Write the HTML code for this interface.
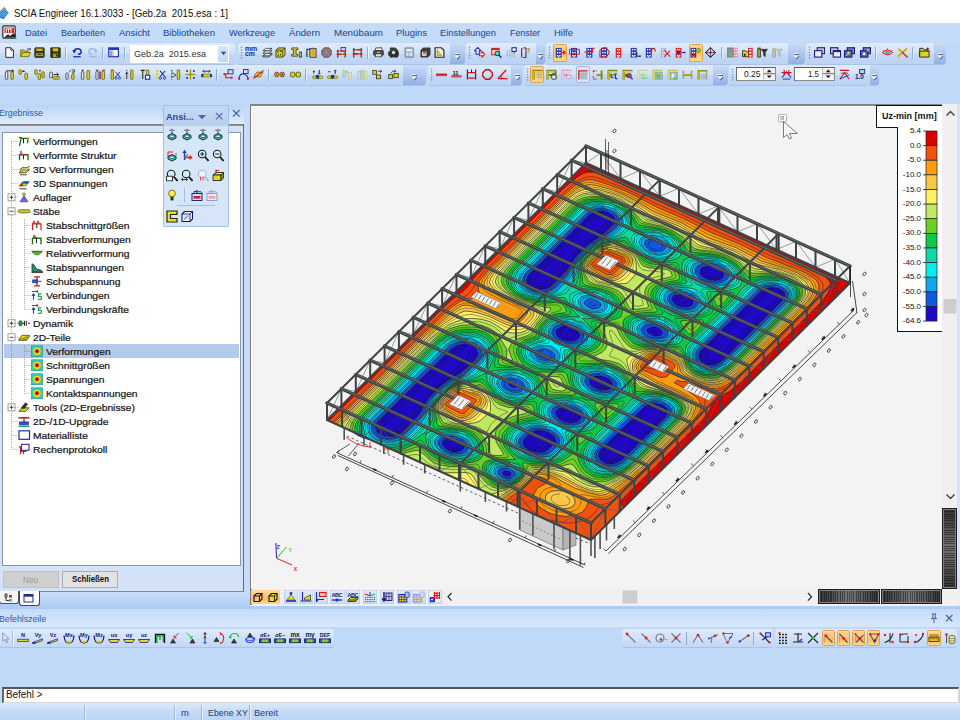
<!DOCTYPE html><html><head><meta charset="utf-8"><title>SCIA Engineer</title><style>
*{margin:0;padding:0;box-sizing:border-box}
html,body{width:960px;height:720px;overflow:hidden;background:#c1d9f8;font-family:"Liberation Sans",sans-serif}
#r{position:relative;width:960px;height:720px;overflow:hidden}
#r div,#r span,#r svg{position:absolute}
.t{white-space:nowrap;line-height:1;transform-origin:0 50%}
</style></head><body><div id="r">
<div style="left:0px;top:0px;width:960px;height:23px;background:#fff"></div>
<svg style="left:-1px;top:5px" width="11" height="15" viewBox="0 0 11 15"><path d="M0.5 6.5L5.5 1.8L7 4L2 8.5z" fill="#8d8d95"/><path d="M0 9L6.5 4L9.6 8L4.5 13.8L0.5 12z" fill="#2486e2"/><path d="M1 9.6L6.3 5.4M1.6 11L7.4 6.6M2.6 12.2L8.4 7.8" stroke="#7cc0f6" stroke-width="0.7"/><path d="M0.5 12L4.5 13.8L5.8 12.4" fill="none" stroke="#1560b8" stroke-width="0.8"/></svg>
<span class="t" style="left:14px;top:8.03px;font-size:10.6px;color:#111;transform:scaleX(0.9147);">SCIA Engineer 16.1.3033 - [Geb.2a&nbsp; 2015.esa : 1]</span>
<div style="left:0px;top:23px;width:960px;height:19px;background:#c4dbf9"></div>
<svg style="left:1.5px;top:25px" width="15" height="15" viewBox="0 0 15 15"><rect x="0.8" y="0.8" width="12.4" height="12.4" rx="1.5" fill="#fff" stroke="#2a2a2a" stroke-width="1.2"/><path d="M2.5 2.5h9.5v5.5h-9.5z" fill="#e01818"/><path d="M4.2 3.8v4M6.6 3.8v4M9 3.8v4M3.5 3.8h7" stroke="#fff" stroke-width="0.9"/><path d="M2 12.5l4-3.2 2 1.6 3.5-2.6 1.7 1.2v3z" fill="#222"/><circle cx="13.6" cy="13.2" r="0.9" fill="#18a058"/></svg>
<span class="t" style="left:25px;top:28.00px;font-size:9.8px;color:#1a4488;transform:scaleX(0.9616);">Datei</span>
<span class="t" style="left:61px;top:28.00px;font-size:9.8px;color:#1a4488;transform:scaleX(0.9282);">Bearbeiten</span>
<span class="t" style="left:119px;top:28.00px;font-size:9.8px;color:#1a4488;transform:scaleX(0.9646);">Ansicht</span>
<span class="t" style="left:163px;top:28.00px;font-size:9.8px;color:#1a4488;transform:scaleX(0.9739);">Bibliotheken</span>
<span class="t" style="left:229px;top:28.00px;font-size:9.8px;color:#1a4488;transform:scaleX(0.9314);">Werkzeuge</span>
<span class="t" style="left:289px;top:28.00px;font-size:9.8px;color:#1a4488;transform:scaleX(0.9809);">Ändern</span>
<span class="t" style="left:334px;top:28.00px;font-size:9.8px;color:#1a4488;transform:scaleX(0.9994);">Menübaum</span>
<span class="t" style="left:396px;top:28.00px;font-size:9.8px;color:#1a4488;transform:scaleX(0.9644);">Plugins</span>
<span class="t" style="left:440px;top:28.00px;font-size:9.8px;color:#1a4488;transform:scaleX(0.9516);">Einstellungen</span>
<span class="t" style="left:510px;top:28.00px;font-size:9.8px;color:#1a4488;transform:scaleX(0.9030);">Fenster</span>
<span class="t" style="left:554px;top:28.00px;font-size:9.8px;color:#1a4488;transform:scaleX(0.9691);">Hilfe</span>
<div style="left:0px;top:42px;width:960px;height:43px;background:#c1d9f8"></div>
<div style="left:-3px;top:43px;width:238px;height:20.5px;background:linear-gradient(#e1ecfc,#d2e2f9 45%,#c3d8f6 55%,#bdd3f4);border-radius:2.5px 3px 3px 2.5px;box-shadow:0 1px 0 #a9c3ea"></div>
<div style="left:237.5px;top:43px;width:227px;height:20.5px;background:linear-gradient(#e1ecfc,#d2e2f9 45%,#c3d8f6 55%,#bdd3f4);border-radius:2.5px 3px 3px 2.5px;box-shadow:0 1px 0 #a9c3ea"></div>
<div style="left:449.5px;top:43px;width:15px;height:20.5px;background:linear-gradient(#c9dbf6,#b0c8ee 50%,#90b0e3);border-radius:0 3px 3px 0"></div>
<svg style="left:454px;top:53px" width="7" height="7.5" viewBox="0 0 7 7.5"><path d="M1.2 1.3h4.8" stroke="#27406f" stroke-width="1"/><path d="M0.8 3.2h5.6L3.6 6.4z" fill="#27406f"/><path d="M0.6 0.6h4.8" stroke="#fff" stroke-width="0.9"/><path d="M0.2 2.5h5.6L3 5.7z" fill="#fff"/></svg>
<svg style="left:239.5px;top:46px" width="3" height="14.5" viewBox="0 0 3 14.5"><path d="M1.5 0.5V14" stroke="#6f8fcf" stroke-width="1.3" stroke-dasharray="1.2 1.5"/></svg>
<div style="left:466px;top:43px;width:78.5px;height:20.5px;background:linear-gradient(#e1ecfc,#d2e2f9 45%,#c3d8f6 55%,#bdd3f4);border-radius:2.5px 3px 3px 2.5px;box-shadow:0 1px 0 #a9c3ea"></div>
<div style="left:535.5px;top:43px;width:9px;height:20.5px;background:linear-gradient(#c9dbf6,#b0c8ee 50%,#90b0e3);border-radius:0 3px 3px 0"></div>
<svg style="left:537px;top:53px" width="7" height="7.5" viewBox="0 0 7 7.5"><path d="M1.2 1.3h4.8" stroke="#27406f" stroke-width="1"/><path d="M0.8 3.2h5.6L3.6 6.4z" fill="#27406f"/><path d="M0.6 0.6h4.8" stroke="#fff" stroke-width="0.9"/><path d="M0.2 2.5h5.6L3 5.7z" fill="#fff"/></svg>
<svg style="left:468px;top:46px" width="3" height="14.5" viewBox="0 0 3 14.5"><path d="M1.5 0.5V14" stroke="#6f8fcf" stroke-width="1.3" stroke-dasharray="1.2 1.5"/></svg>
<div style="left:546.3px;top:43px;width:258.2px;height:20.5px;background:linear-gradient(#e1ecfc,#d2e2f9 45%,#c3d8f6 55%,#bdd3f4);border-radius:2.5px 3px 3px 2.5px;box-shadow:0 1px 0 #a9c3ea"></div>
<div style="left:788px;top:43px;width:16.5px;height:20.5px;background:linear-gradient(#c9dbf6,#b0c8ee 50%,#90b0e3);border-radius:0 3px 3px 0"></div>
<svg style="left:793.25px;top:53px" width="7" height="7.5" viewBox="0 0 7 7.5"><path d="M1.2 1.3h4.8" stroke="#27406f" stroke-width="1"/><path d="M0.8 3.2h5.6L3.6 6.4z" fill="#27406f"/><path d="M0.6 0.6h4.8" stroke="#fff" stroke-width="0.9"/><path d="M0.2 2.5h5.6L3 5.7z" fill="#fff"/></svg>
<svg style="left:548.3px;top:46px" width="3" height="14.5" viewBox="0 0 3 14.5"><path d="M1.5 0.5V14" stroke="#6f8fcf" stroke-width="1.3" stroke-dasharray="1.2 1.5"/></svg>
<div style="left:806px;top:43px;width:140px;height:20.5px;background:linear-gradient(#e1ecfc,#d2e2f9 45%,#c3d8f6 55%,#bdd3f4);border-radius:2.5px 3px 3px 2.5px;box-shadow:0 1px 0 #a9c3ea"></div>
<div style="left:934px;top:43px;width:12px;height:20.5px;background:linear-gradient(#c9dbf6,#b0c8ee 50%,#90b0e3);border-radius:0 3px 3px 0"></div>
<svg style="left:937px;top:53px" width="7" height="7.5" viewBox="0 0 7 7.5"><path d="M1.2 1.3h4.8" stroke="#27406f" stroke-width="1"/><path d="M0.8 3.2h5.6L3.6 6.4z" fill="#27406f"/><path d="M0.6 0.6h4.8" stroke="#fff" stroke-width="0.9"/><path d="M0.2 2.5h5.6L3 5.7z" fill="#fff"/></svg>
<svg style="left:808px;top:46px" width="3" height="14.5" viewBox="0 0 3 14.5"><path d="M1.5 0.5V14" stroke="#6f8fcf" stroke-width="1.3" stroke-dasharray="1.2 1.5"/></svg>
<div style="left:-3px;top:64.5px;width:429px;height:20px;background:linear-gradient(#e1ecfc,#d2e2f9 45%,#c3d8f6 55%,#bdd3f4);border-radius:2.5px 3px 3px 2.5px;box-shadow:0 1px 0 #a9c3ea"></div>
<div style="left:402.5px;top:64.5px;width:23.5px;height:20px;background:linear-gradient(#c9dbf6,#b0c8ee 50%,#90b0e3);border-radius:0 3px 3px 0"></div>
<svg style="left:411.25px;top:74px" width="7" height="7.5" viewBox="0 0 7 7.5"><path d="M1.2 1.3h4.8" stroke="#27406f" stroke-width="1"/><path d="M0.8 3.2h5.6L3.6 6.4z" fill="#27406f"/><path d="M0.6 0.6h4.8" stroke="#fff" stroke-width="0.9"/><path d="M0.2 2.5h5.6L3 5.7z" fill="#fff"/></svg>
<div style="left:427.5px;top:64.5px;width:94.5px;height:20px;background:linear-gradient(#e1ecfc,#d2e2f9 45%,#c3d8f6 55%,#bdd3f4);border-radius:2.5px 3px 3px 2.5px;box-shadow:0 1px 0 #a9c3ea"></div>
<div style="left:511px;top:64.5px;width:11px;height:20px;background:linear-gradient(#c9dbf6,#b0c8ee 50%,#90b0e3);border-radius:0 3px 3px 0"></div>
<svg style="left:513.5px;top:74px" width="7" height="7.5" viewBox="0 0 7 7.5"><path d="M1.2 1.3h4.8" stroke="#27406f" stroke-width="1"/><path d="M0.8 3.2h5.6L3.6 6.4z" fill="#27406f"/><path d="M0.6 0.6h4.8" stroke="#fff" stroke-width="0.9"/><path d="M0.2 2.5h5.6L3 5.7z" fill="#fff"/></svg>
<svg style="left:429.5px;top:67.5px" width="3" height="14" viewBox="0 0 3 14"><path d="M1.5 0.5V13.5" stroke="#6f8fcf" stroke-width="1.3" stroke-dasharray="1.2 1.5"/></svg>
<div style="left:523.5px;top:64.5px;width:204px;height:20px;background:linear-gradient(#e1ecfc,#d2e2f9 45%,#c3d8f6 55%,#bdd3f4);border-radius:2.5px 3px 3px 2.5px;box-shadow:0 1px 0 #a9c3ea"></div>
<div style="left:713px;top:64.5px;width:14.5px;height:20px;background:linear-gradient(#c9dbf6,#b0c8ee 50%,#90b0e3);border-radius:0 3px 3px 0"></div>
<svg style="left:717.25px;top:74px" width="7" height="7.5" viewBox="0 0 7 7.5"><path d="M1.2 1.3h4.8" stroke="#27406f" stroke-width="1"/><path d="M0.8 3.2h5.6L3.6 6.4z" fill="#27406f"/><path d="M0.6 0.6h4.8" stroke="#fff" stroke-width="0.9"/><path d="M0.2 2.5h5.6L3 5.7z" fill="#fff"/></svg>
<svg style="left:525.5px;top:67.5px" width="3" height="14" viewBox="0 0 3 14"><path d="M1.5 0.5V13.5" stroke="#6f8fcf" stroke-width="1.3" stroke-dasharray="1.2 1.5"/></svg>
<div style="left:729.4px;top:64.5px;width:149.4px;height:20px;background:linear-gradient(#e1ecfc,#d2e2f9 45%,#c3d8f6 55%,#bdd3f4);border-radius:2.5px 3px 3px 2.5px;box-shadow:0 1px 0 #a9c3ea"></div>
<div style="left:870px;top:64.5px;width:8.8px;height:20px;background:linear-gradient(#c9dbf6,#b0c8ee 50%,#90b0e3);border-radius:0 3px 3px 0"></div>
<svg style="left:871.4px;top:74px" width="7" height="7.5" viewBox="0 0 7 7.5"><path d="M1.2 1.3h4.8" stroke="#27406f" stroke-width="1"/><path d="M0.8 3.2h5.6L3.6 6.4z" fill="#27406f"/><path d="M0.6 0.6h4.8" stroke="#fff" stroke-width="0.9"/><path d="M0.2 2.5h5.6L3 5.7z" fill="#fff"/></svg>
<svg style="left:731.4px;top:67.5px" width="3" height="14" viewBox="0 0 3 14"><path d="M1.5 0.5V13.5" stroke="#6f8fcf" stroke-width="1.3" stroke-dasharray="1.2 1.5"/></svg>
<svg style="left:4.2px;top:46.8px" width="11" height="11" viewBox="0 0 12 12"><path d="M2 0.8H7.5L10.3 3.6V11.3H2z" fill="#fff" stroke="#1a1a1a" stroke-width="1"/><path d="M7.5 0.8V3.6H10.3" fill="none" stroke="#1a1a1a" stroke-width="0.8" /></svg>
<svg style="left:19.7px;top:46.8px" width="11" height="11" viewBox="0 0 12 12"><path d="M0.8 10.5V3.2H4L5 4.4H9V6" fill="#c8c010" stroke="#5a5600" stroke-width="0.8"/><path d="M0.8 10.5L3 6H11.6L9.4 10.5z" fill="#dcd41c" stroke="#5a5600" stroke-width="0.8"/><path d="M7.5 2.5Q9.5 1 11 2.8M11.2 1v2h-2" fill="none" stroke="#262626" stroke-width="0.8" /></svg>
<svg style="left:34.2px;top:46.8px" width="11" height="11" viewBox="0 0 12 12"><rect x="0.8" y="0.8" width="10.4" height="10.6" rx="1.2" fill="#4a4600" stroke="#262626" stroke-width="0.8"/><rect x="2.6" y="1.8" width="6.8" height="2.4" rx="0" fill="#c8c018"/><rect x="2.4" y="6.8" width="7.2" height="2.8" rx="0" fill="#c8c018"/><rect x="3.8" y="7.5" width="4.4" height="1.2" rx="0" fill="#2a2800"/><path d="M1 5.5h10" fill="none" stroke="#262626" stroke-width="1.1" /></svg>
<svg style="left:49.5px;top:46.8px" width="11" height="11" viewBox="0 0 12 12"><rect x="0.8" y="0.8" width="10.4" height="10.6" rx="0.6" fill="#343200" stroke="#262626" stroke-width="0.8"/><rect x="3" y="1.4" width="6" height="3.4" rx="0" fill="#c8c018"/><rect x="3.2" y="7.2" width="5.6" height="3.8" rx="0" fill="#a8a010"/><rect x="6.6" y="7.9" width="1.6" height="2.4" rx="0" fill="#2a2800"/></svg>
<svg style="left:71.8px;top:46.8px" width="11" height="11" viewBox="0 0 12 12"><path d="M2 5.5Q2.5 1.8 6 1.8Q10 1.8 10 5.2Q10 8 6.5 8" fill="none" stroke="#1c2cb0" stroke-width="1.6" /><path d="M0.3 3.2L2.2 7L4.8 3.8z" fill="#1c2cb0"/><path d="M1.5 10.6H9.5" fill="none" stroke="#1c2cb0" stroke-width="1.4" /></svg>
<svg style="left:86.8px;top:46.8px" width="11" height="11" viewBox="0 0 12 12"><path d="M10 5.5Q9.5 1.8 6 1.8Q2 1.8 2 5.2Q2 8 5.5 8" fill="none" stroke="#9fb8e4" stroke-width="1.6" /><path d="M11.7 3.2L9.8 7L7.2 3.8z" fill="#9fb8e4"/><path d="M2.5 10.6H10.5" fill="none" stroke="#9fb8e4" stroke-width="1.4" /></svg>
<svg style="left:108.4px;top:46.8px" width="11" height="11" viewBox="0 0 12 12"><rect x="0.8" y="1" width="10.6" height="9.6" rx="0" fill="#f4f4f4" stroke="#2030c0" stroke-width="1.3"/><rect x="0.8" y="1" width="10.6" height="2.2" rx="0" fill="#2030c0"/><rect x="2" y="4" width="2.6" height="6" rx="0" fill="#9aa0a8"/><path d="M5.5 3.5V10.4" fill="none" stroke="#8088a0" stroke-width="0.6" /></svg>
<div style="left:64.8px;top:46.5px;width:1px;height:12px;background:#8fabda"></div>
<div style="left:65.8px;top:46.5px;width:1px;height:12px;background:#eaf2fd"></div>
<div style="left:102px;top:46.5px;width:1px;height:12px;background:#8fabda"></div>
<div style="left:103px;top:46.5px;width:1px;height:12px;background:#eaf2fd"></div>
<div style="left:123.5px;top:46.5px;width:1px;height:12px;background:#8fabda"></div>
<div style="left:124.5px;top:46.5px;width:1px;height:12px;background:#eaf2fd"></div>
<div style="left:130px;top:44.5px;width:98.5px;height:18.5px;background:#fff"></div>
<div style="left:217.5px;top:45.5px;width:10.5px;height:16.5px;background:linear-gradient(#d4e4fa,#c2d8f6)"></div>
<svg style="left:220px;top:51px" width="7" height="5" viewBox="0 0 7 5"><path d="M0.8 0.8h5.4L3.5 4z" fill="#2a4a88"/></svg>
<span class="t" style="left:134px;top:49.63px;font-size:9.3px;color:#333;transform:scaleX(0.9737);">Geb.2a&nbsp; 2015.esa</span>
<span class="t" style="left:245px;top:45.6px;font-size:6.6px;font-weight:bold;color:#1a2a80;line-height:5.3px;letter-spacing:-0.2px;transform:scaleX(1.05)">mm<br>cm</span>
<svg style="left:261.5px;top:46.8px" width="11" height="11" viewBox="0 0 12 12"><path d="M1 4L4.5 1.5H11L7.5 4z" fill="#fff" stroke="#262626" stroke-width="0.8"/><path d="M1 6.7L4.5 4.2H11L7.5 6.7z" fill="#fff" stroke="#262626" stroke-width="0.8"/><path d="M1 9.5L4.5 7H11L7.5 9.5z" fill="#fff" stroke="#262626" stroke-width="0.8"/><path d="M1 9.5v1.3H7.5L11 8.2V7" fill="none" stroke="#262626" stroke-width="0.8" /></svg>
<svg style="left:275.3px;top:46.8px" width="11" height="11" viewBox="0 0 12 12"><path d="M1 3.5L3.5 1H11V8.5L8.5 11H1z" fill="#dcd41c" stroke="#262626" stroke-width="0.9"/><path d="M1 3.5H8.5V11M8.5 3.5L11 1" fill="none" stroke="#262626" stroke-width="0.8" /><circle cx="3" cy="5.5" r="0.8" fill="#262626"/><circle cx="6" cy="8.5" r="0.8" fill="#262626"/><circle cx="6.5" cy="5" r="0.8" fill="#262626"/><circle cx="3.5" cy="9" r="0.7" fill="#262626"/></svg>
<svg style="left:291.3px;top:46.8px" width="11" height="11" viewBox="0 0 12 12"><path d="M0.8 1H7.5V3H5.5V8H7.5V10H0.8V8H2.8V3H0.8z" fill="#dcd41c" stroke="#262626" stroke-width="0.8"/><path d="M8.5 5.5h3v5.5h-3" fill="none" stroke="#262626" stroke-width="0.9" /><rect x="9.5" y="6.5" width="2.2" height="3.5" rx="0" fill="#dcd41c" stroke="#262626" stroke-width="0.6"/></svg>
<svg style="left:306.3px;top:46.8px" width="11" height="11" viewBox="0 0 12 12"><path d="M1 11V2.5H4.5" fill="none" stroke="#262626" stroke-width="1.2" /><rect x="4.2" y="1.8" width="6.8" height="9.4" rx="0" fill="#dcd41c" stroke="#2a2a80" stroke-width="1"/><rect x="5.8" y="3.2" width="3.6" height="6.4" rx="0" fill="#f0a030"/><rect x="6" y="0.8" width="3" height="1.6" rx="0" fill="#606060"/></svg>
<svg style="left:320.5px;top:46.8px" width="11" height="11" viewBox="0 0 12 12"><path d="M3.5 0.8H8.5L11.2 3.5V8.5L8.5 11.2H3.5L0.8 8.5V3.5z" fill="#787878" stroke="#505050" stroke-width="0.8"/><path d="M2.5 2.5L9.5 9.5M9.5 2.5L2.5 9.5" fill="none" stroke="#e07090" stroke-width="1" /><path d="M6 1V11M1 6H11" fill="none" stroke="#909090" stroke-width="0.6" /></svg>
<svg style="left:336.3px;top:46.8px" width="11" height="11" viewBox="0 0 12 12"><rect x="5.5" y="0.5" width="5" height="4" rx="0" fill="#d0d0f8" stroke="#1c2cb0" stroke-width="0.9"/><path d="M2 11.5V3M10 11.5V5" fill="none" stroke="#262626" stroke-width="1.1" /><path d="M0.8 4.5H11.2M0.8 8H11.2" fill="none" stroke="#d81818" stroke-width="1.6" /><circle cx="4" cy="4.5" r="0.8" fill="#dcd41c"/><circle cx="7" cy="8" r="0.8" fill="#dcd41c"/></svg>
<svg style="left:351.8px;top:46.8px" width="11" height="11" viewBox="0 0 12 12"><path d="M2 11.5V1M10 11.5V1" fill="none" stroke="#262626" stroke-width="1.1" /><path d="M0.8 3H11.2M0.8 7.5H11.2" fill="none" stroke="#d81818" stroke-width="1.8" /><path d="M3.5 3h1.5M7 7.5h1.5" fill="none" stroke="#dcd41c" stroke-width="1.2" /></svg>
<svg style="left:373.2px;top:46.8px" width="11" height="11" viewBox="0 0 12 12"><path d="M3 1L9.5 0.8L10.5 4H2z" fill="#e8e8e8" stroke="#262626" stroke-width="0.8"/><rect x="0.6" y="4" width="10.8" height="5" rx="1" fill="#505050" stroke="#262626" stroke-width="0.8"/><rect x="2.5" y="7.5" width="7" height="3.2" rx="0" fill="#e0e0e0" stroke="#262626" stroke-width="0.7"/><rect x="4.5" y="5.2" width="3" height="1.2" rx="0" fill="#dcd41c"/><circle cx="9.8" cy="5.5" r="0.7" fill="#3060e0"/></svg>
<svg style="left:387.9px;top:46.8px" width="11" height="11" viewBox="0 0 12 12"><path d="M2.5 1H8L10.5 3.5V11H2.5z" fill="#404040" stroke="#262626" stroke-width="0.8"/><rect x="0.6" y="5" width="10.8" height="4.5" rx="0.8" fill="#303030" stroke="#262626" stroke-width="0.6"/><circle cx="6" cy="6" r="2.4" fill="#d8d8d8" stroke="#111" stroke-width="0.8"/><path d="M3 9.5v2M9 9.5v2" fill="none" stroke="#262626" stroke-width="1.4" /></svg>
<svg style="left:403.9px;top:46.8px" width="11" height="11" viewBox="0 0 12 12"><rect x="1" y="0.8" width="9.5" height="10.6" rx="0.8" fill="#98a8bc" stroke="#7888a0" stroke-width="0.8"/><rect x="2.4" y="2.2" width="6.8" height="2.6" rx="0" fill="#e8eef4"/><rect x="2.4" y="6" width="2.6" height="3.8" rx="0" fill="#dde4ec"/><rect x="6" y="6" width="3.2" height="3.8" rx="0" fill="#dde4ec"/></svg>
<svg style="left:419.5px;top:46.8px" width="11" height="11" viewBox="0 0 12 12"><path d="M1 3.5L3.5 1H11V8.5L8.5 11H1z" fill="#484848" stroke="#262626" stroke-width="0.8"/><rect x="2" y="4.5" width="5.5" height="5.5" rx="0" fill="#f0f0f0" stroke="#262626" stroke-width="0.6"/><rect x="3.5" y="5" width="2.6" height="2.2" rx="0" fill="#d81818"/><rect x="3" y="8" width="3.5" height="1.4" rx="0" fill="#dcd41c"/><path d="M8.5 11V3.5H1M8.5 3.5L11 1" fill="none" stroke="#262626" stroke-width="0.7" /></svg>
<svg style="left:433.5px;top:46.8px" width="11" height="11" viewBox="0 0 12 12"><path d="M1.2 0.8H8L10.8 3.6V11.2H1.2z" fill="#f0f0e8" stroke="#262626" stroke-width="1.3"/><path d="M3.5 3L8.5 9.5H3.5z" fill="#dcd41c" stroke="#807800" stroke-width="0.6"/></svg>
<svg style="left:474.2px;top:46.8px" width="11" height="11" viewBox="0 0 12 12"><path d="M4 0.5L7.5 4H5.8V8H2.2V4H0.5z" fill="#e8e8ff" stroke="#1c2cb0" stroke-width="1.1"/><path d="M6 6.5H9V5L11.8 8L9 11V9.5H6z" fill="#fff" stroke="#d81818" stroke-width="1.1"/></svg>
<svg style="left:490.5px;top:46.8px" width="11" height="11" viewBox="0 0 12 12"><rect x="0.8" y="1.5" width="8" height="7" rx="0" fill="#f8e8c0" stroke="#d81818" stroke-width="1.1"/><rect x="0.8" y="1.5" width="8" height="1.8" rx="0" fill="#d81818"/><circle cx="6.8" cy="7" r="2.5" fill="#40d8e8" stroke="#111" stroke-width="0.9"/><path d="M8.6 8.8L11.3 11.5" fill="none" stroke="#262626" stroke-width="1.6" /></svg>
<svg style="left:505.5px;top:46.8px" width="11" height="11" viewBox="0 0 12 12"><path d="M1.5 3V11.5M4 3V11.5M6.5 5V11.5M9 8V11.5" fill="none" stroke="#808890" stroke-width="0.9" stroke-dasharray="1 1"/><rect x="6.5" y="0.8" width="4.6" height="4" rx="0" fill="#fff" stroke="#1c2cb0" stroke-width="1.2"/><path d="M8.8 4.8V7" fill="none" stroke="#262626" stroke-width="0.9" /></svg>
<svg style="left:520.1px;top:46.8px" width="11" height="11" viewBox="0 0 12 12"><path d="M1.8 1V11.5" fill="none" stroke="#d81818" stroke-width="1.4" /><path d="M3.5 1H6.5V11.5H3.5" fill="none" stroke="#262626" stroke-width="1" /><text x="7" y="6.5" font-size="7" font-weight="bold" fill="#a07800" font-family="Liberation Sans,sans-serif">?</text></svg>
<div style="left:367px;top:46.5px;width:1px;height:12px;background:#8fabda"></div>
<div style="left:368px;top:46.5px;width:1px;height:12px;background:#eaf2fd"></div>
<div style="left:552.5px;top:44px;width:14.5px;height:17.5px;background:linear-gradient(#ffd898,#ffc266 55%,#ffd88a);border:1px solid #dfa248;border-radius:1.5px"></div>
<div style="left:688.5px;top:44px;width:14px;height:17.5px;background:linear-gradient(#ffd898,#ffc266 55%,#ffd88a);border:1px solid #dfa248;border-radius:1.5px"></div>
<svg style="left:554.5px;top:46.8px" width="11" height="11" viewBox="0 0 12 12"><rect x="0.8" y="1" width="6.5" height="10.5" rx="0" fill="#1c2cb0"/><rect x="2" y="2" width="1.6" height="1.7" rx="0" fill="#fff"/><rect x="4.5" y="2" width="1.6" height="1.7" rx="0" fill="#fff"/><rect x="2" y="5.3" width="1.6" height="1.7" rx="0" fill="#fff"/><rect x="4.5" y="5.3" width="1.6" height="1.7" rx="0" fill="#fff"/><rect x="2" y="8.6" width="1.6" height="1.7" rx="0" fill="#fff"/><rect x="4.5" y="8.6" width="1.6" height="1.7" rx="0" fill="#fff"/><rect x="3.45" y="9.5" width="1.2" height="2" rx="0" fill="#cfe0f8"/><path d="M7 6H10.5M8.8 3.8L11.2 6L8.8 8.2" fill="none" stroke="#d81818" stroke-width="1.2" /></svg>
<svg style="left:568.5px;top:46.8px" width="11" height="11" viewBox="0 0 12 12"><rect x="2.2" y="1" width="6.5" height="10.5" rx="0" fill="#1c2cb0"/><rect x="3.4" y="2" width="1.6" height="1.7" rx="0" fill="#fff"/><rect x="5.9" y="2" width="1.6" height="1.7" rx="0" fill="#fff"/><rect x="3.4" y="5.3" width="1.6" height="1.7" rx="0" fill="#fff"/><rect x="5.9" y="5.3" width="1.6" height="1.7" rx="0" fill="#fff"/><rect x="3.4" y="8.6" width="1.6" height="1.7" rx="0" fill="#fff"/><rect x="5.9" y="8.6" width="1.6" height="1.7" rx="0" fill="#fff"/><rect x="4.85" y="9.5" width="1.2" height="2" rx="0" fill="#cfe0f8"/><rect x="0.6" y="2.5" width="10.8" height="5.5" rx="1" fill="none" stroke="#d81818" stroke-width="1.1"/></svg>
<svg style="left:584.3px;top:46.8px" width="11" height="11" viewBox="0 0 12 12"><rect x="2.6" y="1" width="6.5" height="10.5" rx="0" fill="#1c2cb0"/><rect x="3.8" y="2" width="1.6" height="1.7" rx="0" fill="#fff"/><rect x="6.3" y="2" width="1.6" height="1.7" rx="0" fill="#fff"/><rect x="3.8" y="5.3" width="1.6" height="1.7" rx="0" fill="#fff"/><rect x="6.3" y="5.3" width="1.6" height="1.7" rx="0" fill="#fff"/><rect x="3.8" y="8.6" width="1.6" height="1.7" rx="0" fill="#fff"/><rect x="6.3" y="8.6" width="1.6" height="1.7" rx="0" fill="#fff"/><rect x="5.25" y="9.5" width="1.2" height="2" rx="0" fill="#cfe0f8"/><path d="M0.3 5.5H9.5V1.5H11.5" fill="none" stroke="#d81818" stroke-width="1.1" /></svg>
<svg style="left:598.5px;top:46.8px" width="11" height="11" viewBox="0 0 12 12"><rect x="2.2" y="1" width="6.5" height="10.5" rx="0" fill="#1c2cb0"/><rect x="3.4" y="2" width="1.6" height="1.7" rx="0" fill="#fff"/><rect x="5.9" y="2" width="1.6" height="1.7" rx="0" fill="#fff"/><rect x="3.4" y="5.3" width="1.6" height="1.7" rx="0" fill="#fff"/><rect x="5.9" y="5.3" width="1.6" height="1.7" rx="0" fill="#fff"/><rect x="3.4" y="8.6" width="1.6" height="1.7" rx="0" fill="#fff"/><rect x="5.9" y="8.6" width="1.6" height="1.7" rx="0" fill="#fff"/><rect x="4.85" y="9.5" width="1.2" height="2" rx="0" fill="#cfe0f8"/><path d="M1 11V3.5L4.5 0.8H8L11.5 6L8 11z" fill="none" stroke="#d81818" stroke-width="1.1" /></svg>
<svg style="left:612.5px;top:46.8px" width="11" height="11" viewBox="0 0 12 12"><rect x="3" y="1" width="6" height="10.5" rx="0" fill="#d81818"/><rect x="4.2" y="2" width="1.6" height="1.7" rx="0" fill="#fff"/><rect x="6.2" y="2" width="1.6" height="1.7" rx="0" fill="#fff"/><rect x="4.2" y="5.3" width="1.6" height="1.7" rx="0" fill="#fff"/><rect x="6.2" y="5.3" width="1.6" height="1.7" rx="0" fill="#fff"/><rect x="4.2" y="8.6" width="1.6" height="1.7" rx="0" fill="#fff"/><rect x="6.2" y="8.6" width="1.6" height="1.7" rx="0" fill="#fff"/><rect x="5.4" y="9.5" width="1.2" height="2" rx="0" fill="#cfe0f8"/></svg>
<svg style="left:629.8px;top:46.8px" width="11" height="11" viewBox="0 0 12 12"><rect x="0.8" y="1" width="6.5" height="10.5" rx="0" fill="#1c2cb0"/><rect x="2" y="2" width="1.6" height="1.7" rx="0" fill="#fff"/><rect x="4.5" y="2" width="1.6" height="1.7" rx="0" fill="#fff"/><rect x="2" y="5.3" width="1.6" height="1.7" rx="0" fill="#fff"/><rect x="4.5" y="5.3" width="1.6" height="1.7" rx="0" fill="#fff"/><rect x="2" y="8.6" width="1.6" height="1.7" rx="0" fill="#fff"/><rect x="4.5" y="8.6" width="1.6" height="1.7" rx="0" fill="#fff"/><rect x="3.45" y="9.5" width="1.2" height="2" rx="0" fill="#cfe0f8"/><path d="M7.5 5.5V10H11" fill="none" stroke="#262626" stroke-width="1.1" /><circle cx="11" cy="10" r="0.9" fill="#262626"/></svg>
<svg style="left:645px;top:46.8px" width="11" height="11" viewBox="0 0 12 12"><rect x="0.8" y="1" width="6.5" height="10.5" rx="0" fill="#1c2cb0"/><rect x="2" y="2" width="1.6" height="1.7" rx="0" fill="#fff"/><rect x="4.5" y="2" width="1.6" height="1.7" rx="0" fill="#fff"/><rect x="2" y="5.3" width="1.6" height="1.7" rx="0" fill="#fff"/><rect x="4.5" y="5.3" width="1.6" height="1.7" rx="0" fill="#fff"/><rect x="2" y="8.6" width="1.6" height="1.7" rx="0" fill="#fff"/><rect x="4.5" y="8.6" width="1.6" height="1.7" rx="0" fill="#fff"/><rect x="3.45" y="9.5" width="1.2" height="2" rx="0" fill="#cfe0f8"/><path d="M6.5 5.5Q7 1.5 9.5 1.5Q11.5 2 11 5" fill="none" stroke="#b02020" stroke-width="1.2" /><path d="M5.5 3.5l1 2.8 2-2z" fill="#b02020"/></svg>
<svg style="left:659.8px;top:46.8px" width="11" height="11" viewBox="0 0 12 12"><rect x="1" y="1" width="6" height="10.5" rx="0" fill="#9cb0e0"/><rect x="2.2" y="2" width="1.6" height="1.7" rx="0" fill="#e8f0ff"/><rect x="4.2" y="2" width="1.6" height="1.7" rx="0" fill="#e8f0ff"/><rect x="2.2" y="5.3" width="1.6" height="1.7" rx="0" fill="#e8f0ff"/><rect x="4.2" y="5.3" width="1.6" height="1.7" rx="0" fill="#e8f0ff"/><rect x="2.2" y="8.6" width="1.6" height="1.7" rx="0" fill="#e8f0ff"/><rect x="4.2" y="8.6" width="1.6" height="1.7" rx="0" fill="#e8f0ff"/><rect x="3.4" y="9.5" width="1.2" height="2" rx="0" fill="#cfe0f8"/><path d="M4.5 3L11 10.5M11 4L4.5 10.5" fill="none" stroke="#d81818" stroke-width="1.1" /></svg>
<svg style="left:675.1px;top:46.8px" width="11" height="11" viewBox="0 0 12 12"><rect x="0.8" y="1" width="6.2" height="10.5" rx="0" fill="#d81818"/><rect x="2" y="2" width="1.6" height="1.7" rx="0" fill="#fff"/><rect x="4.2" y="2" width="1.6" height="1.7" rx="0" fill="#fff"/><rect x="2" y="5.3" width="1.6" height="1.7" rx="0" fill="#fff"/><rect x="4.2" y="5.3" width="1.6" height="1.7" rx="0" fill="#fff"/><rect x="2" y="8.6" width="1.6" height="1.7" rx="0" fill="#fff"/><rect x="4.2" y="8.6" width="1.6" height="1.7" rx="0" fill="#fff"/><rect x="3.3" y="9.5" width="1.2" height="2" rx="0" fill="#cfe0f8"/><rect x="2" y="4.4" width="3.8" height="3" rx="0" fill="#1c2cb0"/><path d="M7 6H10" fill="none" stroke="#1c2cb0" stroke-width="1.1" /><circle cx="10.5" cy="6" r="1" fill="#1c2cb0"/></svg>
<svg style="left:690px;top:46.8px" width="11" height="11" viewBox="0 0 12 12"><rect x="0.6" y="1" width="6.2" height="10.5" rx="0" fill="#1c2cb0"/><rect x="1.8" y="2" width="1.6" height="1.7" rx="0" fill="#fff"/><rect x="4" y="2" width="1.6" height="1.7" rx="0" fill="#fff"/><rect x="1.8" y="5.3" width="1.6" height="1.7" rx="0" fill="#fff"/><rect x="4" y="5.3" width="1.6" height="1.7" rx="0" fill="#fff"/><rect x="1.8" y="8.6" width="1.6" height="1.7" rx="0" fill="#fff"/><rect x="4" y="8.6" width="1.6" height="1.7" rx="0" fill="#fff"/><rect x="3.1" y="9.5" width="1.2" height="2" rx="0" fill="#cfe0f8"/><rect x="1.8" y="7.4" width="3.8" height="3" rx="0" fill="#d81818"/><circle cx="9.2" cy="3.8" r="2.3" fill="#b0b840" stroke="#707810" stroke-width="0.8"/></svg>
<svg style="left:704.8px;top:46.8px" width="11" height="11" viewBox="0 0 12 12"><path d="M6 0.8L11.2 6L6 11.2L0.8 6z" fill="none" stroke="#262626" stroke-width="1.1"/><path d="M6 0V12M0 6H12" fill="none" stroke="#262626" stroke-width="0.7" /><circle cx="6" cy="6" r="1.5" fill="#d81818"/></svg>
<svg style="left:727.3px;top:46.8px" width="11" height="11" viewBox="0 0 12 12"><rect x="0.6" y="1" width="6.5" height="10" rx="0" fill="#8a9098" stroke="#606870" stroke-width="0.6"/><rect x="2" y="6" width="3.6" height="4" rx="0" fill="#58c070"/><rect x="7.2" y="0.8" width="4.4" height="10.4" rx="0" fill="#f08098"/><rect x="8" y="2" width="1.2" height="1.5" rx="0" fill="#fff"/><rect x="9.8" y="2" width="1.2" height="1.5" rx="0" fill="#fff"/><rect x="8" y="5.2" width="1.2" height="1.5" rx="0" fill="#fff"/><rect x="9.8" y="5.2" width="1.2" height="1.5" rx="0" fill="#fff"/><rect x="8" y="8.4" width="1.2" height="1.5" rx="0" fill="#fff"/><rect x="9.8" y="8.4" width="1.2" height="1.5" rx="0" fill="#fff"/></svg>
<svg style="left:742.4px;top:46.8px" width="11" height="11" viewBox="0 0 12 12"><path d="M0.5 10.5V4H3.5L4.5 5.2H8.5V10.5z" fill="#dcd41c" stroke="#262626" stroke-width="0.9"/><path d="M2 7l3 1.5L2 10z" fill="#262626"/><rect x="6.6" y="1" width="5" height="10.5" rx="0" fill="#d81818"/><rect x="7.8" y="2" width="1.6" height="1.7" rx="0" fill="#fff"/><rect x="8.8" y="2" width="1.6" height="1.7" rx="0" fill="#fff"/><rect x="7.8" y="5.3" width="1.6" height="1.7" rx="0" fill="#fff"/><rect x="8.8" y="5.3" width="1.6" height="1.7" rx="0" fill="#fff"/><rect x="7.8" y="8.6" width="1.6" height="1.7" rx="0" fill="#fff"/><rect x="8.8" y="8.6" width="1.6" height="1.7" rx="0" fill="#fff"/><rect x="8.5" y="9.5" width="1.2" height="2" rx="0" fill="#cfe0f8"/></svg>
<svg style="left:757px;top:46.8px" width="11" height="11" viewBox="0 0 12 12"><rect x="0.8" y="2" width="3" height="9" rx="0" fill="#a8a030" stroke="#262626" stroke-width="0.8"/><path d="M4.5 2.5H11.5L9 6V10.5L7.2 9V6z" fill="#303030" stroke="#262626" stroke-width="0.6"/><path d="M1 1.2h3" fill="none" stroke="#262626" stroke-width="1" /></svg>
<svg style="left:772px;top:46.8px" width="11" height="11" viewBox="0 0 12 12"><rect x="0.8" y="2" width="3" height="9" rx="0" fill="#c8c890" stroke="#98a090" stroke-width="0.8"/><path d="M4.5 2.5H11.5L9 6V10.5L7.2 9V6z" fill="#c0c8d0" stroke="#98a0a8" stroke-width="0.6"/></svg>
<svg style="left:814.2px;top:46.8px" width="11" height="11" viewBox="0 0 12 12"><rect x="3.5" y="0.8" width="8" height="6.5" rx="0" fill="#c8c8d0" stroke="#1a1a80" stroke-width="1.2"/><rect x="0.6" y="4" width="8" height="7" rx="0" fill="#f0f0f0" stroke="#1a1a80" stroke-width="1.2"/></svg>
<svg style="left:829.5px;top:46.8px" width="11" height="11" viewBox="0 0 12 12"><rect x="0.6" y="0.8" width="8" height="6.5" rx="0" fill="#c8c8d0" stroke="#1a1a80" stroke-width="1.2"/><rect x="3.5" y="4" width="8" height="7" rx="0" fill="#f0f0f0" stroke="#1a1a80" stroke-width="1.2"/><rect x="3.5" y="4" width="8" height="1.6" rx="0" fill="#1a1a80"/></svg>
<svg style="left:844.2px;top:46.8px" width="11" height="11" viewBox="0 0 12 12"><rect x="3.5" y="0.8" width="8" height="6.5" rx="0" fill="#7080b8" stroke="#1a1a80" stroke-width="1.2"/><rect x="0.6" y="4" width="8" height="7" rx="0" fill="#5868a8" stroke="#1a1a80" stroke-width="1.2"/><circle cx="5" cy="6.5" r="1.6" fill="#dcd41c"/><path d="M2 10l2-2" fill="none" stroke="#fff" stroke-width="0.8" /></svg>
<svg style="left:859.5px;top:46.8px" width="11" height="11" viewBox="0 0 12 12"><rect x="3.5" y="0.8" width="8" height="6.5" rx="0" fill="#7080b8" stroke="#1a1a80" stroke-width="1.2"/><rect x="0.6" y="4" width="8" height="7" rx="0" fill="#5868a8" stroke="#1a1a80" stroke-width="1.2"/><circle cx="4.5" cy="7.5" r="1.4" fill="#fff"/><circle cx="8.5" cy="3.5" r="1.2" fill="#dcd41c"/></svg>
<svg style="left:881.8px;top:46.8px" width="11" height="11" viewBox="0 0 12 12"><path d="M0.5 6Q6 0.5 11.5 6Q6 11 0.5 6z" fill="#f8d0d0" stroke="#d81818" stroke-width="1.1"/><ellipse cx="6" cy="6" rx="3" ry="1.8" fill="#38b8b8"/><path d="M1 3.5L2.5 5M11 3.5L9.5 5M6 1.5V3" fill="none" stroke="#d81818" stroke-width="0.9" /></svg>
<svg style="left:897px;top:46.8px" width="11" height="11" viewBox="0 0 12 12"><path d="M1 10.5L11 1.5" fill="none" stroke="#dcd41c" stroke-width="2.6" /><path d="M1.5 2L7 7" fill="none" stroke="#dcd41c" stroke-width="2.4" /><path d="M1 10.5L11 1.5M1.5 2L7 7" fill="none" stroke="#5a5600" stroke-width="0.5" /><path d="M5.5 5.5L11.5 11.5" fill="none" stroke="#d81818" stroke-width="1.3" /></svg>
<svg style="left:918.9px;top:46.8px" width="11" height="11" viewBox="0 0 12 12"><path d="M0.8 11V1.5H4.5L5.5 3H9V5.5" fill="#dcd41c" stroke="#262626" stroke-width="1"/><path d="M0.8 11V4.5H11V11z" fill="#dcd41c" stroke="#262626" stroke-width="1"/><circle cx="9.5" cy="2" r="0.9" fill="#d81818"/><circle cx="11" cy="4" r="0.8" fill="#d81818"/><path d="M9.5 0.3V3.7M7.8 2H11.2" fill="none" stroke="#262626" stroke-width="0.7" /></svg>
<div style="left:721.4px;top:46.5px;width:1px;height:12px;background:#8fabda"></div>
<div style="left:722.4px;top:46.5px;width:1px;height:12px;background:#eaf2fd"></div>
<div style="left:875.1px;top:46.5px;width:1px;height:12px;background:#8fabda"></div>
<div style="left:876.1px;top:46.5px;width:1px;height:12px;background:#eaf2fd"></div>
<div style="left:912px;top:46.5px;width:1px;height:12px;background:#8fabda"></div>
<div style="left:913px;top:46.5px;width:1px;height:12px;background:#eaf2fd"></div>
<svg style="left:3.6px;top:69.4px" width="11" height="11" viewBox="0 0 12 12"><rect x="1.5" y="3" width="2.6" height="8.3" rx="0.8" fill="#f0f0f0" stroke="#262626" stroke-width="0.8"/><rect x="7.5" y="3" width="2.8" height="8.3" rx="0.8" fill="#dcd41c" stroke="#5a5600" stroke-width="0.8"/><path d="M2.5 2H10.5" fill="none" stroke="#262626" stroke-width="1" /><path d="M8.5 0.8l2 1.2-2 1.2" fill="none" stroke="#262626" stroke-width="0.8" /></svg>
<svg style="left:18px;top:69.4px" width="11" height="11" viewBox="0 0 12 12"><rect x="1" y="1" width="2.6" height="5" rx="0.8" fill="#dcd41c" stroke="#5a5600" stroke-width="0.8"/><rect x="7.5" y="4.5" width="2.8" height="6.8" rx="0.8" fill="#dcd41c" stroke="#5a5600" stroke-width="0.8"/><path d="M4.5 2.5h3" fill="none" stroke="#262626" stroke-width="1" /><circle cx="5.8" cy="2.5" r="0.9" fill="#262626"/></svg>
<svg style="left:34px;top:69.4px" width="11" height="11" viewBox="0 0 12 12"><rect x="0.8" y="0.8" width="2.6" height="5" rx="0.8" fill="#dcd41c" stroke="#5a5600" stroke-width="0.8"/><rect x="4.5" y="5" width="2.8" height="6.3" rx="0.8" fill="#dcd41c" stroke="#5a5600" stroke-width="0.8"/><rect x="8.6" y="3" width="2.6" height="6.5" rx="0.8" fill="#dcd41c" stroke="#5a5600" stroke-width="0.8"/><circle cx="6.5" cy="1.8" r="1" fill="#1c2cb0"/></svg>
<svg style="left:49px;top:69.4px" width="11" height="11" viewBox="0 0 12 12"><rect x="0.8" y="3.5" width="3" height="6" rx="0.8" fill="#f0f0f0" stroke="#262626" stroke-width="0.8"/><rect x="4.5" y="8.5" width="7" height="2.6" rx="0.8" fill="#dcd41c" stroke="#5a5600" stroke-width="0.8"/><path d="M5 6H10M8.5 4l2 2-2 2" fill="none" stroke="#262626" stroke-width="1" /></svg>
<svg style="left:64.5px;top:69.4px" width="11" height="11" viewBox="0 0 12 12"><rect x="1" y="4.5" width="2.4" height="6.8" rx="0.8" fill="#f0f0f0" stroke="#262626" stroke-width="0.8"/><rect x="7.2" y="6" width="2.8" height="5.2" rx="0.8" fill="#dcd41c" stroke="#5a5600" stroke-width="0.8"/><path d="M4.5 3.5l2-2.5M7.5 1h3v2.2h-3M7.5 4.5h3" fill="none" stroke="#262626" stroke-width="0.8" /></svg>
<svg style="left:79.5px;top:69.4px" width="11" height="11" viewBox="0 0 12 12"><rect x="1.5" y="3" width="2.6" height="8.3" rx="0.8" fill="#f0f0f0" stroke="#262626" stroke-width="0.8"/><rect x="7.5" y="1.5" width="3" height="9.8" rx="0.8" fill="#dcd41c" stroke="#5a5600" stroke-width="0.8"/><circle cx="2.8" cy="1.5" r="1" fill="#1c2cb0"/></svg>
<svg style="left:94.5px;top:69.4px" width="11" height="11" viewBox="0 0 12 12"><rect x="1" y="2.5" width="2.4" height="8.8" rx="0.8" fill="#f0f0f0" stroke="#262626" stroke-width="0.8"/><rect x="4.6" y="2.5" width="1.8" height="8.8" rx="0" fill="#a020a0"/><rect x="7.6" y="2.5" width="2.8" height="8.8" rx="0.8" fill="#dcd41c" stroke="#5a5600" stroke-width="0.8"/><path d="M1 1.3h3M8 1.3h3" fill="none" stroke="#262626" stroke-width="1" /></svg>
<svg style="left:109.5px;top:69.4px" width="11" height="11" viewBox="0 0 12 12"><rect x="1.2" y="1.5" width="2.6" height="9.8" rx="0.8" fill="#dcd41c" stroke="#5a5600" stroke-width="0.8"/><path d="M1 1.2h3" fill="none" stroke="#d81818" stroke-width="1" /><path d="M6 3l5 6M11 3l-5 6" fill="none" stroke="#1c2cb0" stroke-width="1" /><circle cx="6.3" cy="10" r="1.2" fill="none"/><circle cx="6.5" cy="10" r="1.2" fill="none" stroke="#1c2cb0" stroke-width="0.8"/><circle cx="10.3" cy="10" r="1.2" fill="none" stroke="#1c2cb0" stroke-width="0.8"/></svg>
<svg style="left:124.2px;top:69.4px" width="11" height="11" viewBox="0 0 12 12"><rect x="7.2" y="1" width="2.6" height="10.3" rx="0.8" fill="#dcd41c" stroke="#5a5600" stroke-width="0.8"/><path d="M3 11V4M1.5 5.5L3 3.5L4.5 5.5" fill="none" stroke="#262626" stroke-width="1" /><path d="M3 1v1.5" fill="none" stroke="#262626" stroke-width="1" /></svg>
<svg style="left:140.3px;top:69.4px" width="11" height="11" viewBox="0 0 12 12"><rect x="6.8" y="1" width="2.8" height="5" rx="0.8" fill="#dcd41c" stroke="#5a5600" stroke-width="0.8"/><rect x="6" y="6.8" width="4.6" height="4.4" rx="0" fill="#fff" stroke="#1c2cb0" stroke-width="1.2"/><path d="M0.8 1.5h4.5M3 1.5V11" fill="none" stroke="#262626" stroke-width="1.1" /></svg>
<svg style="left:155.3px;top:69.4px" width="11" height="11" viewBox="0 0 12 12"><path d="M2.5 0.8V11.5" fill="none" stroke="#dcd41c" stroke-width="2.6" stroke-dasharray="2.4 1"/><path d="M5.5 2l5.5 6.5M11 2L5.5 8.5" fill="none" stroke="#1c2cb0" stroke-width="1.1" /><circle cx="6" cy="10" r="1.3" fill="none" stroke="#1c2cb0" stroke-width="0.9"/><circle cx="10.5" cy="10" r="1.3" fill="none" stroke="#1c2cb0" stroke-width="0.9"/></svg>
<svg style="left:170.1px;top:69.4px" width="11" height="11" viewBox="0 0 12 12"><path d="M2 1V11.5" fill="none" stroke="#262626" stroke-width="1.2" stroke-dasharray="1.8 1.4"/><rect x="7.8" y="1" width="2.8" height="10.3" rx="0.8" fill="#dcd41c" stroke="#5a5600" stroke-width="0.8"/><path d="M3 4l3.5 2.5L3 9" fill="none" stroke="#262626" stroke-width="0.9" /></svg>
<svg style="left:185.3px;top:69.4px" width="11" height="11" viewBox="0 0 12 12"><path d="M0.5 6H11.5M6 0.5V11.5" fill="none" stroke="#dcd41c" stroke-width="2.4" /><path d="M0.5 6H11.5M6 0.5V11.5" fill="none" stroke="#5a5600" stroke-width="0.5" /><circle cx="2.3" cy="2.3" r="1.1" fill="#1c2cb0"/><circle cx="9.7" cy="2.3" r="1.1" fill="#1c2cb0"/><circle cx="2.3" cy="9.7" r="1.1" fill="#1c2cb0"/><circle cx="9.7" cy="9.7" r="1.1" fill="#1c2cb0"/></svg>
<svg style="left:200.5px;top:69.4px" width="11" height="11" viewBox="0 0 12 12"><rect x="0.5" y="5.5" width="11.5" height="3.2" rx="1.4" fill="#dcd41c" stroke="#5a5600" stroke-width="0.6"/><rect x="0.3" y="5.5" width="2.2" height="3.2" rx="0" fill="#1c2cb0"/><rect x="9.8" y="5.5" width="2.2" height="3.2" rx="0" fill="#1c2cb0"/><path d="M2 2.5H10M3.5 1L2 2.5l1.5 1.5M8.5 1L10 2.5 8.5 4" fill="none" stroke="#262626" stroke-width="0.9" /></svg>
<svg style="left:222.6px;top:69.4px" width="11" height="11" viewBox="0 0 12 12"><rect x="5.5" y="0.8" width="5.5" height="4.5" rx="0" fill="#d8d8f0" stroke="#1c2cb0" stroke-width="1"/><path d="M1 5.5H5.5M3 5.5V9.5H9" fill="none" stroke="#d81818" stroke-width="1.2" /><circle cx="1.5" cy="5.5" r="1.2" fill="#d81818"/><circle cx="9.5" cy="9.5" r="1.2" fill="#d81818"/></svg>
<svg style="left:237.6px;top:69.4px" width="11" height="11" viewBox="0 0 12 12"><rect x="6" y="0.5" width="5" height="4.5" rx="0" fill="#d8d8f0" stroke="#1c2cb0" stroke-width="1"/><path d="M1 11Q2 4 6.5 5.5T11 11" fill="none" stroke="#1c2cb0" stroke-width="1.3" /><circle cx="1.3" cy="10.8" r="1.1" fill="#d81818"/><circle cx="10.8" cy="10.8" r="1.1" fill="#d81818"/></svg>
<svg style="left:252.9px;top:69.4px" width="11" height="11" viewBox="0 0 12 12"><path d="M1 8.5L4 3.5H11L8 8.5z" fill="#dcd41c" stroke="#5a5600" stroke-width="0.8"/><path d="M0.5 10.5L11.5 1.5" fill="none" stroke="#d81818" stroke-width="1.2" /></svg>
<svg style="left:274.2px;top:69.4px" width="11" height="11" viewBox="0 0 12 12"><rect x="0.5" y="3.5" width="5" height="5" rx="2.4" fill="#dcd41c" stroke="#802010" stroke-width="0.9"/><rect x="6.5" y="3.5" width="5" height="5" rx="2.4" fill="#dcd41c" stroke="#802010" stroke-width="0.9"/><circle cx="3" cy="6" r="1.1" fill="#d81818"/><circle cx="9" cy="6" r="1.1" fill="#262626"/></svg>
<svg style="left:290.1px;top:69.4px" width="11" height="11" viewBox="0 0 12 12"><rect x="0.6" y="3.5" width="4.6" height="5" rx="1" fill="#dcd41c" stroke="#5a5600" stroke-width="0.9"/><rect x="6.8" y="3.5" width="4.6" height="5" rx="1" fill="#dcd41c" stroke="#5a5600" stroke-width="0.9"/><rect x="5.2" y="4.8" width="1.6" height="2.4" rx="0" fill="#18b048"/></svg>
<svg style="left:311.5px;top:69.4px" width="11" height="11" viewBox="0 0 12 12"><rect x="0.5" y="7.5" width="11.3" height="3" rx="1.4" fill="#dcd41c" stroke="#5a5600" stroke-width="0.6"/><rect x="4" y="6.2" width="4" height="4.4" rx="2" fill="#1c2cb0"/><path d="M2 1.5V5M1 2.8h2M8 1V5.5M6.8 4.2L8 5.6l1.2-1.4" fill="none" stroke="#262626" stroke-width="0.9" /><path d="M8 1v3" fill="none" stroke="#d81818" stroke-width="0.9" /></svg>
<svg style="left:326.5px;top:69.4px" width="11" height="11" viewBox="0 0 12 12"><rect x="0.5" y="7.5" width="11.3" height="3" rx="1.4" fill="#dcd41c" stroke="#5a5600" stroke-width="0.6"/><rect x="4" y="6.2" width="4" height="4.4" rx="2" fill="#1c2cb0"/><path d="M1 3h3M9 5.5V1M7.8 2.4L9 1l1.2 1.4" fill="none" stroke="#262626" stroke-width="0.9" /><path d="M9 2v3" fill="none" stroke="#d81818" stroke-width="0.9" /></svg>
<svg style="left:342px;top:69.4px" width="11" height="11" viewBox="0 0 12 12"><rect x="1" y="1.5" width="2.6" height="7" rx="0" fill="#c4dca0" stroke="#a0b890" stroke-width="0.6"/><rect x="7.5" y="4" width="2.8" height="7.5" rx="0" fill="#e4e4a0" stroke="#b0c0a0" stroke-width="0.6"/><rect x="4.5" y="2" width="1.8" height="3" rx="0" fill="#a8b8c8"/></svg>
<svg style="left:357.3px;top:69.4px" width="11" height="11" viewBox="0 0 12 12"><rect x="1" y="2.5" width="2.6" height="8.8" rx="0" fill="#d0d8e0" stroke="#a8b4c4" stroke-width="0.6"/><rect x="4.5" y="1.5" width="2.2" height="9.8" rx="0" fill="#c4dca0" stroke="#a0b890" stroke-width="0.6"/><rect x="8" y="2.5" width="2.8" height="8.8" rx="0" fill="#e4e4a0" stroke="#b0c0a0" stroke-width="0.6"/></svg>
<svg style="left:372.3px;top:69.4px" width="11" height="11" viewBox="0 0 12 12"><rect x="0.8" y="1.5" width="4.2" height="4.2" rx="0" fill="#dcd41c" stroke="#262626" stroke-width="0.8"/><rect x="5" y="6.5" width="4.2" height="4.2" rx="0" fill="#dcd41c" stroke="#262626" stroke-width="0.8"/><path d="M6.5 2.5h4M9 1l1.6 1.5L9 4" fill="none" stroke="#262626" stroke-width="0.9" /></svg>
<svg style="left:387.6px;top:69.4px" width="11" height="11" viewBox="0 0 12 12"><rect x="0.8" y="6" width="4.2" height="4.6" rx="0" fill="#dcd41c" stroke="#262626" stroke-width="0.8"/><rect x="6.5" y="5" width="4.6" height="4.6" rx="0" fill="#dcd41c" stroke="#262626" stroke-width="0.8"/><path d="M3 4.5Q5 1 8 2.5M7 0.8l1.6 1.6L6.5 3.5" fill="none" stroke="#262626" stroke-width="0.9" /></svg>
<svg style="left:436px;top:69.4px" width="11" height="11" viewBox="0 0 12 12"><path d="M0 6H12" fill="none" stroke="#d81818" stroke-width="2" /><path d="M0 7.3H12" fill="none" stroke="#501010" stroke-width="0.5" /></svg>
<svg style="left:451px;top:69.4px" width="11" height="11" viewBox="0 0 12 12"><path d="M0.5 8.5H11.5" fill="none" stroke="#d81818" stroke-width="1.2" /><path d="M0.5 7.2H11.5" fill="none" stroke="#262626" stroke-width="0.6" /><text x="1.5" y="6.8" font-size="6.5" font-weight="bold" fill="#222" font-family="Liberation Sans,sans-serif">11</text></svg>
<svg style="left:466.3px;top:69.4px" width="11" height="11" viewBox="0 0 12 12"><path d="M1.5 0.5V11.5M10.5 0.5V11.5" fill="none" stroke="#262626" stroke-width="1.2" /><path d="M1.5 4H10.5M1.5 10H10.5" fill="none" stroke="#d81818" stroke-width="1.4" /><path d="M6 0.5V4" fill="none" stroke="#262626" stroke-width="1.1" /></svg>
<svg style="left:481.5px;top:69.4px" width="11" height="11" viewBox="0 0 12 12"><path d="M4 0.8H8L11.2 4V8L8 11.2H4L0.8 8V4z" fill="none" stroke="#c81010" stroke-width="1.5"/></svg>
<svg style="left:496.5px;top:69.4px" width="11" height="11" viewBox="0 0 12 12"><path d="M1 10.5H11.5M1 10.5L10 1" fill="none" stroke="#d81818" stroke-width="1.5" /><path d="M5 10.5Q5.5 8 4.2 7" fill="none" stroke="#901010" stroke-width="0.8" /></svg>
<div style="left:215.5px;top:68.5px;width:1px;height:12px;background:#8fabda"></div>
<div style="left:216.5px;top:68.5px;width:1px;height:12px;background:#eaf2fd"></div>
<div style="left:267.5px;top:68.5px;width:1px;height:12px;background:#8fabda"></div>
<div style="left:268.5px;top:68.5px;width:1px;height:12px;background:#eaf2fd"></div>
<div style="left:304.9px;top:68.5px;width:1px;height:12px;background:#8fabda"></div>
<div style="left:305.9px;top:68.5px;width:1px;height:12px;background:#eaf2fd"></div>
<div style="left:529.8px;top:66px;width:14.6px;height:17px;background:linear-gradient(#ffd898,#ffc266 55%,#ffd88a);border:1px solid #dfa248;border-radius:1.5px"></div>
<div style="left:575.6px;top:66px;width:14.4px;height:17px;background:#dbe6f5;border:1px solid #9fb6d8;border-radius:1.5px"></div>
<svg style="left:531.5px;top:69.4px" width="11" height="11" viewBox="0 0 12 12"><path d="M1.8 11.5V2.2H11.3" fill="none" stroke="#8a8a10" stroke-width="2.6" /><path d="M2 11V2.6H11" fill="none" stroke="#dcd41c" stroke-width="1.1" /><path d="M4.5 6H11M4.5 9H11M7 4.5V11M9.5 4.5V11" fill="none" stroke="#a8a8a0" stroke-width="0.6" /></svg>
<svg style="left:546.3px;top:69.4px" width="11" height="11" viewBox="0 0 12 12"><path d="M1.8 11.5V2.2H11.3" fill="none" stroke="#8a8a10" stroke-width="2.6" /><path d="M2 11V2.6H11" fill="none" stroke="#dcd41c" stroke-width="1.1" /><path d="M2.5 6.8H8" fill="none" stroke="#8a8a10" stroke-width="2.2" /><path d="M2.5 6.8H7.6" fill="none" stroke="#dcd41c" stroke-width="0.8" /><path d="M10.5 2.5V11" fill="none" stroke="#8a8a10" stroke-width="2" /><path d="M4 6.5H8" fill="none" stroke="#262626" stroke-width="1.1" /><rect x="6.2" y="6.5" width="4.8" height="4.6" rx="1" fill="#e8e8e8" stroke="#262626" stroke-width="0.9"/><path d="M7.2 6.5V5.2Q8.6 3.8 10 5.2V6.5" fill="none" stroke="#262626" stroke-width="0.8" /></svg>
<svg style="left:561.3px;top:69.4px" width="11" height="11" viewBox="0 0 12 12"><path d="M1.8 11.5V2.2H11.3" fill="none" stroke="#e0a0c0" stroke-width="2.6" /><path d="M2 11V2.6H11" fill="none" stroke="#f4d8e8" stroke-width="1.1" /><path d="M2.5 6.8H8" fill="none" stroke="#e0a0c0" stroke-width="2.2" /><path d="M2.5 6.8H7.6" fill="none" stroke="#f4d8e8" stroke-width="0.8" /><path d="M4 6.5H8" fill="none" stroke="#c04890" stroke-width="1.1" /><rect x="6.2" y="6.5" width="4.8" height="4" rx="1" fill="#e8e0e8" stroke="#b090a8" stroke-width="0.8"/></svg>
<svg style="left:577.3px;top:69.4px" width="11" height="11" viewBox="0 0 12 12"><path d="M2 11.5V2H11.5" fill="none" stroke="#d81818" stroke-width="1.5" /><rect x="3.5" y="3.5" width="8" height="8" rx="0" fill="#b0b8c4"/></svg>
<svg style="left:591.5px;top:69.4px" width="11" height="11" viewBox="0 0 12 12"><path d="M1.5 2H5M1.5 2V5M1.5 8V11M1.5 11H5" fill="none" stroke="#d81818" stroke-width="1.3" stroke-dasharray="1.5 1"/><path d="M10.5 1.5V11.5" fill="none" stroke="#8a8a10" stroke-width="2.2" /><path d="M5 6.5H10" fill="none" stroke="#8a8a10" stroke-width="1.8" /></svg>
<svg style="left:607px;top:69.4px" width="11" height="11" viewBox="0 0 12 12"><path d="M1.8 11.5V2.2H11.3" fill="none" stroke="#8a8a10" stroke-width="2.6" /><path d="M2 11V2.6H11" fill="none" stroke="#dcd41c" stroke-width="1.1" /><path d="M2.5 6.8H8" fill="none" stroke="#8a8a10" stroke-width="2.2" /><path d="M2.5 6.8H7.6" fill="none" stroke="#dcd41c" stroke-width="0.8" /><path d="M4.5 5V9.5H7" fill="none" stroke="#262626" stroke-width="1" /><path d="M7.5 5.5H11M9.2 5.5V11" fill="none" stroke="#1c2cb0" stroke-width="1.2" /><circle cx="10.5" cy="10.5" r="0.9" fill="#1c2cb0"/></svg>
<svg style="left:622px;top:69.4px" width="11" height="11" viewBox="0 0 12 12"><path d="M1.8 11.5V2.2H11.3" fill="none" stroke="#8a8a10" stroke-width="2.6" /><path d="M2 11V2.6H11" fill="none" stroke="#dcd41c" stroke-width="1.1" /><path d="M2.5 6.8H8" fill="none" stroke="#8a8a10" stroke-width="2.2" /><path d="M2.5 6.8H7.6" fill="none" stroke="#dcd41c" stroke-width="0.8" /><path d="M4.5 5V9" fill="none" stroke="#262626" stroke-width="1" /><circle cx="7.8" cy="7.2" r="2.3" fill="#e04040" stroke="#1a1a90" stroke-width="0.9"/><path d="M9.5 9L11.5 11.3" fill="none" stroke="#1c2cb0" stroke-width="1.5" /></svg>
<svg style="left:637.3px;top:69.4px" width="11" height="11" viewBox="0 0 12 12"><path d="M1.8 11.5V2.2H11.3" fill="none" stroke="#c8d090" stroke-width="2.6" /><path d="M2 11V2.6H11" fill="none" stroke="#e8ecb0" stroke-width="1.1" /><path d="M2.5 6.8H8" fill="none" stroke="#c8d090" stroke-width="2.2" /><path d="M2.5 6.8H7.6" fill="none" stroke="#e8ecb0" stroke-width="0.8" /><path d="M4 6.5H9" fill="none" stroke="#a0c090" stroke-width="1.2" /><path d="M5 8.5Q8 11 11 8.5L11 11H5z" fill="#70d880"/></svg>
<svg style="left:652px;top:69.4px" width="11" height="11" viewBox="0 0 12 12"><path d="M1.8 11.5V2.2H11.3" fill="none" stroke="#b8c850" stroke-width="2.6" /><path d="M2 11V2.6H11" fill="none" stroke="#d8e080" stroke-width="1.1" /><rect x="3.8" y="3.8" width="7.4" height="7.4" rx="0" fill="#a8b8b0" stroke="#808888" stroke-width="0.5"/><path d="M5 5l5 2.5-2 1 1.5 2-1.5 0.5-1-2-2 1z" fill="#40d060"/></svg>
<svg style="left:667px;top:69.4px" width="11" height="11" viewBox="0 0 12 12"><path d="M1.8 11.5V2.2H11.3" fill="none" stroke="#b8c850" stroke-width="2.6" /><path d="M2 11V2.6H11" fill="none" stroke="#d8e080" stroke-width="1.1" /><rect x="3.8" y="3.8" width="7.4" height="7.4" rx="0" fill="#a8b8b0" stroke="#808888" stroke-width="0.5"/><rect x="5" y="5" width="3" height="5" rx="0" fill="#f0f0f0"/><path d="M7 8Q9 11 11.5 8.5V11H7z" fill="#40d060"/></svg>
<svg style="left:682.3px;top:69.4px" width="11" height="11" viewBox="0 0 12 12"><path d="M1.5 1.5V11M10.5 1.5V11" fill="none" stroke="#a8a8a0" stroke-width="2" /><path d="M1.5 6.5H10.5" fill="none" stroke="#8a8a10" stroke-width="2.2" /><path d="M1.5 6.3H10.5" fill="none" stroke="#dcd41c" stroke-width="0.8" /></svg>
<svg style="left:697px;top:69.4px" width="11" height="11" viewBox="0 0 12 12"><path d="M1.8 11.5V2.2H11.3" fill="none" stroke="#8a8a10" stroke-width="2.4" /><path d="M2 11V2.6H11" fill="none" stroke="#dcd41c" stroke-width="0.9" /><rect x="4" y="5" width="6.5" height="6.5" rx="0" fill="#b8bcc4"/><path d="M10.5 3V11.5" fill="none" stroke="#a0a4a8" stroke-width="1.6" /></svg>
<svg style="left:780.5px;top:69.4px" width="11" height="11" viewBox="0 0 12 12"><path d="M1 9.5L6 3L11 9.5" fill="none" stroke="#1c2cb0" stroke-width="1.1" /><path d="M0.5 4H11.5M3.5 1V7M8.5 1V7" fill="none" stroke="#d81818" stroke-width="1.2" /><path d="M2 11H10" fill="none" stroke="#1c2cb0" stroke-width="1" /></svg>
<svg style="left:838.9px;top:69.4px" width="11" height="11" viewBox="0 0 12 12"><path d="M1 1.5H11M1 11L6 4L11 11" fill="none" stroke="#d81818" stroke-width="1.1" /><path d="M1 11L11 6.5" fill="none" stroke="#1c2cb0" stroke-width="0.9" /><path d="M2 4.5H10" fill="none" stroke="#262626" stroke-width="0.8" /></svg>
<svg style="left:854.5px;top:69.4px" width="11" height="11" viewBox="0 0 12 12"><text x="0" y="11" font-size="7" font-weight="bold" fill="#1a1a70" font-family="Liberation Sans,sans-serif">1.0</text><rect x="5" y="0.5" width="5.5" height="4.5" rx="0" fill="#c0c8f0" stroke="#1c2cb0" stroke-width="1"/></svg>
<div style="left:735.6px;top:67.3px;width:40.7px;height:13.5px;background:#fff;border-top:1.5px solid #5f5f5f;border-left:1.5px solid #6f6f6f;border-bottom:1.5px solid #8a8a8a;border-right:1.5px solid #8a8a8a"></div>
<span class="t" style="left:743.8px;top:69.37px;font-size:9.6px;color:#222;transform:scaleX(0.8831);">0.25</span>
<svg style="left:762.8px;top:68.3px" width="12.5" height="11.5" viewBox="0 0 12.5 11.5"><rect x="0" y="0" width="12.5" height="11.5" fill="#f2f2f2"/><path d="M0 5.7H12.5" stroke="#707070" stroke-width="1"/><path d="M0.4 0V11.5" stroke="#b0b0b0" stroke-width="0.8"/><path d="M6.2 1.6L8.6 4.2H3.8zM6.2 10L8.6 7.4H3.8z" fill="#111"/></svg>
<div style="left:794.4px;top:67.3px;width:40.6px;height:13.5px;background:#fff;border-top:1.5px solid #5f5f5f;border-left:1.5px solid #6f6f6f;border-bottom:1.5px solid #8a8a8a;border-right:1.5px solid #8a8a8a"></div>
<span class="t" style="left:808px;top:69.37px;font-size:9.6px;color:#222;transform:scaleX(0.8093);">1.5</span>
<svg style="left:821.5px;top:68.3px" width="12.5" height="11.5" viewBox="0 0 12.5 11.5"><rect x="0" y="0" width="12.5" height="11.5" fill="#f2f2f2"/><path d="M0 5.7H12.5" stroke="#707070" stroke-width="1"/><path d="M0.4 0V11.5" stroke="#b0b0b0" stroke-width="0.8"/><path d="M6.2 1.6L8.6 4.2H3.8zM6.2 10L8.6 7.4H3.8z" fill="#111"/></svg>
<div style="left:0px;top:104.5px;width:244px;height:19.5px;background:linear-gradient(#bbd5f6,#cde0f9 50%,#dfebfc)"></div>
<span class="t" style="left:-1.5px;top:108.40px;font-size:9.8px;color:#2a5aa8;transform:scaleX(0.8974);">Ergebnisse</span>
<svg style="left:231.7px;top:108.7px" width="8.6" height="8.6" viewBox="0 0 8.6 8.6"><path d="M1 1L7.6 7.6M7.6 1L1 7.6" stroke="#3a63a8" stroke-width="1.2" fill="none"/></svg>
<div style="left:0px;top:124px;width:244px;height:467px;background:#d3e2f7"></div>
<div style="left:0px;top:124px;width:244px;height:2px;background:linear-gradient(#6f6f6f,#a0a0a0)"></div>
<div style="left:242.5px;top:124px;width:1.5px;height:467px;background:#6a6a6a"></div>
<div style="left:244px;top:105px;width:6px;height:486px;background:#c6dcf9"></div>
<div style="left:2px;top:132px;width:239px;height:434px;background:#fff;border:1px solid #8795a8"></div>
<div style="left:3.5px;top:344.3px;width:235.5px;height:13.6px;background:#b5c9e8"></div>
<svg style="left:0;top:126px" width="244" height="440" viewBox="0 126 244 440"><g stroke="#909090" stroke-width="0.8" stroke-dasharray="1 1" fill="none"><path d="M11.5 141V449.5"/><path d="M24.5 219V309.5M24.5 345V393.5"/><path d="M11.5 141.3H18"/><path d="M11.5 155.3H18"/><path d="M11.5 169.3H18"/><path d="M11.5 183.3H18"/><path d="M15 197.3H18"/><path d="M15 211.3H18"/><path d="M24.5 225.3H31"/><path d="M24.5 239.3H31"/><path d="M24.5 253.3H31"/><path d="M24.5 267.3H31"/><path d="M24.5 281.3H31"/><path d="M24.5 295.3H31"/><path d="M24.5 309.3H31"/><path d="M15 323.3H18"/><path d="M15 337.3H18"/><path d="M24.5 351.3H31"/><path d="M24.5 365.3H31"/><path d="M24.5 379.3H31"/><path d="M24.5 393.3H31"/><path d="M15 407.3H18"/><path d="M11.5 421.3H18"/><path d="M11.5 435.3H18"/><path d="M11.5 449.3H18"/></g><g transform="translate(18 135.3)"><path d="M1.5 10.5L3 3H10L9.5 8" fill="none" stroke="#1a6a1a" stroke-width="1.3"/><path d="M1 2.3h3" stroke="#e02020" stroke-width="1.4"/><path d="M8.5 2.3h3" stroke="#e8d820" stroke-width="1.4"/><path d="M5.5 3v5" stroke="#222" stroke-width="1"/></g><g transform="translate(18 149.3)"><path d="M1.5 11V5.5H10V11" fill="none" stroke="#1a7a1a" stroke-width="1.4"/><path d="M5.5 5.5V10" stroke="#222" stroke-width="1"/><path d="M3 5.5V1.5" stroke="#1a30d0" stroke-width="1.2"/><path d="M3 5.2h5.5" stroke="#e02020" stroke-width="1.3"/></g><g transform="translate(18 163.3)"><path d="M1 9.5L5 6.5H11.5L7.5 9.5z" fill="#e8e030" stroke="#222" stroke-width="0.8"/><path d="M1.5 6.5Q4 3.5 7 4.5T11.5 2.5" fill="none" stroke="#222" stroke-width="0.9"/><path d="M1.5 8Q4 5 7 6T11.5 4.2" fill="none" stroke="#c8c020" stroke-width="1.2"/><path d="M2 11.5h7" stroke="#222" stroke-width="0.8"/></g><g transform="translate(18 177.3)"><path d="M1 9L4.5 4H11.5L8 9z" fill="#20b030"/><path d="M1 9L3 6H6L5 9z" fill="#e02020"/><path d="M6 4.2H11.5L10 6.5H5z" fill="#2040e0"/><path d="M5 6.5H8.5L7.5 8H4.5z" fill="#f0e020"/><path d="M1.5 11.5h7" stroke="#222" stroke-width="0.9"/></g><rect x="8" y="193.8" width="7" height="7" fill="#fff" stroke="#8a8a8a" stroke-width="0.8"/><path d="M9.6 197.3H13.4" stroke="#333" stroke-width="0.9"/><path d="M11.5 195.4V199.2" stroke="#333" stroke-width="0.9"/><g transform="translate(18 191.3)"><path d="M2 10.5L6 4.5L10 10.5z" fill="#7060d8" stroke="#4a3cb0" stroke-width="0.7"/><circle cx="6" cy="3" r="1.5" fill="#d8c020" stroke="#6a5a10" stroke-width="0.5"/></g><rect x="8" y="207.8" width="7" height="7" fill="#fff" stroke="#8a8a8a" stroke-width="0.8"/><path d="M9.6 211.3H13.4" stroke="#333" stroke-width="0.9"/><g transform="translate(18 205.3)"><rect x="0.5" y="4.5" width="11.5" height="3" rx="1.3" fill="#d8d020" stroke="#5a5608" stroke-width="0.8"/></g><g transform="translate(31 219.3)"><path d="M1.5 11V4.5H10V11" fill="none" stroke="#c82020" stroke-width="1.2"/><path d="M1.5 4.5L3 1.5L4.5 4.5M5.5 4.5L7 1.5L8.5 4.5" fill="#e83030" stroke="#c82020" stroke-width="0.7"/><path d="M5.8 4.5V9" stroke="#222" stroke-width="1"/></g><g transform="translate(31 233.3)"><path d="M1.5 11V5H10V11" fill="none" stroke="#1a7a1a" stroke-width="1.4"/><path d="M5.5 5V10" stroke="#222" stroke-width="1"/><path d="M3 5V1.5" stroke="#1a30d0" stroke-width="1.2"/><path d="M3 3l3 1.5" stroke="#e02020" stroke-width="1.2"/></g><g transform="translate(31 247.3)"><path d="M0.5 4H11.5" stroke="#444" stroke-width="1"/><path d="M1 4.5Q6 11 11 4.5z" fill="#58b838" stroke="#2a6a1a" stroke-width="0.7"/></g><g transform="translate(31 261.3)"><path d="M1 10.5V2.5Q3.5 3 4.5 6T9.5 8.5L11.5 10.5z" fill="#2a8a78" stroke="#123c34" stroke-width="0.8"/><path d="M0.5 11h11.5" stroke="#222" stroke-width="1"/></g><g transform="translate(31 275.3)"><path d="M3 1.5h6M3 10.5h6M6 1.5v9" stroke="#c02020" stroke-width="1.3" fill="none"/><path d="M1.5 4.5h5v3h-5z" fill="#3050d8" stroke="#1a2a90" stroke-width="0.6"/><path d="M6.5 6h4" stroke="#3050d8" stroke-width="1.1"/></g><g transform="translate(31 289.3)"><path d="M2.5 10.5V5M1 6.5L2.5 4.5L4 6.5" fill="none" stroke="#2040c8" stroke-width="1.1"/><path d="M1 2.2h6M5.5 1l1.8 1.2L5.5 3.4" fill="none" stroke="#d02020" stroke-width="1"/><path d="M10.5 4.5H7.5V7H10Q11 8.5 10 10H7" fill="none" stroke="#18a048" stroke-width="1.2"/></g><g transform="translate(31 303.3)"><path d="M2.5 10.5V5M1 6.5L2.5 4.5L4 6.5" fill="none" stroke="#2040c8" stroke-width="1.1"/><path d="M1 2.2h6M5.5 1l1.8 1.2L5.5 3.4" fill="none" stroke="#d02020" stroke-width="1"/><path d="M10.5 4.5H7.5V7H10Q11 8.5 10 10H7" fill="none" stroke="#18a048" stroke-width="1.2"/></g><rect x="8" y="319.8" width="7" height="7" fill="#fff" stroke="#8a8a8a" stroke-width="0.8"/><path d="M9.6 323.3H13.4" stroke="#333" stroke-width="0.9"/><path d="M11.5 321.4V325.2" stroke="#333" stroke-width="0.9"/><g transform="translate(18 317.3)"><ellipse cx="2.5" cy="6" rx="1.8" ry="2.6" fill="#28a038" stroke="#0c4014" stroke-width="0.7"/><path d="M4.5 6H6M6.5 3.5v5M8.3 3.5v5M10 6h2" stroke="#222" stroke-width="1"/></g><rect x="8" y="333.8" width="7" height="7" fill="#fff" stroke="#8a8a8a" stroke-width="0.8"/><path d="M9.6 337.3H13.4" stroke="#333" stroke-width="0.9"/><g transform="translate(18 331.3)"><path d="M0.8 8L4 4H11.5L8.5 8z" fill="#e0d828" stroke="#4a4608" stroke-width="0.8"/><path d="M0.8 8v1.2H8.5L11.5 5.2V4" fill="#a8a018" stroke="#4a4608" stroke-width="0.6"/></g><g transform="translate(31 345.3)"><rect x="0.5" y="0.5" width="11" height="11" fill="#30c8d0" stroke="#168890" stroke-width="0.6"/><circle cx="6" cy="6" r="4.6" fill="#60d040"/><circle cx="6" cy="6" r="3.6" fill="#f0e828"/><circle cx="6" cy="6" r="2.3" fill="#e83018"/><circle cx="6" cy="6" r="1" fill="#401010"/></g><g transform="translate(31 359.3)"><rect x="0.5" y="0.5" width="11" height="11" fill="#30c8d0" stroke="#168890" stroke-width="0.6"/><circle cx="6" cy="6" r="4.6" fill="#60d040"/><circle cx="6" cy="6" r="3.6" fill="#f0e828"/><circle cx="6" cy="6" r="2.3" fill="#e83018"/><circle cx="6" cy="6" r="1" fill="#401010"/></g><g transform="translate(31 373.3)"><rect x="0.5" y="0.5" width="11" height="11" fill="#30c8d0" stroke="#168890" stroke-width="0.6"/><circle cx="6" cy="6" r="4.6" fill="#60d040"/><circle cx="6" cy="6" r="3.6" fill="#f0e828"/><circle cx="6" cy="6" r="2.3" fill="#e83018"/><circle cx="6" cy="6" r="1" fill="#401010"/></g><g transform="translate(31 387.3)"><rect x="0.5" y="0.5" width="11" height="11" fill="#30c8d0" stroke="#168890" stroke-width="0.6"/><circle cx="6" cy="6" r="4.6" fill="#60d040"/><circle cx="6" cy="6" r="3.6" fill="#f0e828"/><circle cx="6" cy="6" r="2.3" fill="#e83018"/><circle cx="6" cy="6" r="1" fill="#401010"/></g><rect x="8" y="403.8" width="7" height="7" fill="#fff" stroke="#8a8a8a" stroke-width="0.8"/><path d="M9.6 407.3H13.4" stroke="#333" stroke-width="0.9"/><path d="M11.5 405.4V409.2" stroke="#333" stroke-width="0.9"/><g transform="translate(18 401.3)"><path d="M1 10L4 6.5H11L8 10z" fill="#e0d828" stroke="#3a3608" stroke-width="0.8"/><path d="M3 7L7.5 1.5L9.5 3L6 7.5" fill="#303030" stroke="#111" stroke-width="0.6"/></g><g transform="translate(18 415.3)"><path d="M0.5 2.5h11" stroke="#c02020" stroke-width="1.6"/><path d="M6 3v7" stroke="#c02020" stroke-width="1.4"/><path d="M1.5 6.5h9v3h-9z" fill="#3050d8" stroke="#1a2a90" stroke-width="0.6"/><path d="M0.5 11h11" stroke="#18a048" stroke-width="1.3"/></g><g transform="translate(18 429.3)"><rect x="1" y="1.5" width="10.5" height="8.5" fill="#fff" stroke="#2a2aa0" stroke-width="1.2"/></g><g transform="translate(18 443.3)"><rect x="3.5" y="1" width="7.5" height="6" fill="#fff" stroke="#2a2aa0" stroke-width="1.1"/><path d="M1 3.5h3M2.5 3.5V11M5.5 8V11M2.5 8h6" stroke="#c02020" stroke-width="1.2" fill="none"/></g></svg>
<span class="t" style="left:33.3px;top:137.00px;font-size:9.8px;color:#151515;-webkit-text-stroke:0.22px #151515;transform:scaleX(1.0509)">Verformungen</span>
<span class="t" style="left:33.3px;top:151.00px;font-size:9.8px;color:#151515;-webkit-text-stroke:0.22px #151515;transform:scaleX(1.0509)">Verformte Struktur</span>
<span class="t" style="left:33.3px;top:165.00px;font-size:9.8px;color:#151515;-webkit-text-stroke:0.22px #151515;transform:scaleX(1.0509)">3D Verformungen</span>
<span class="t" style="left:33.3px;top:179.00px;font-size:9.8px;color:#151515;-webkit-text-stroke:0.22px #151515;transform:scaleX(1.0509)">3D Spannungen</span>
<span class="t" style="left:33.3px;top:193.00px;font-size:9.8px;color:#151515;-webkit-text-stroke:0.22px #151515;transform:scaleX(1.0509)">Auflager</span>
<span class="t" style="left:33.3px;top:207.00px;font-size:9.8px;color:#151515;-webkit-text-stroke:0.22px #151515;transform:scaleX(1.0509)">Stäbe</span>
<span class="t" style="left:46px;top:221.00px;font-size:9.8px;color:#151515;-webkit-text-stroke:0.22px #151515;transform:scaleX(1.0509)">Stabschnittgrößen</span>
<span class="t" style="left:46px;top:235.00px;font-size:9.8px;color:#151515;-webkit-text-stroke:0.22px #151515;transform:scaleX(1.0509)">Stabverformungen</span>
<span class="t" style="left:46px;top:249.00px;font-size:9.8px;color:#151515;-webkit-text-stroke:0.22px #151515;transform:scaleX(1.0509)">Relativverformung</span>
<span class="t" style="left:46px;top:263.00px;font-size:9.8px;color:#151515;-webkit-text-stroke:0.22px #151515;transform:scaleX(1.0509)">Stabspannungen</span>
<span class="t" style="left:46px;top:277.00px;font-size:9.8px;color:#151515;-webkit-text-stroke:0.22px #151515;transform:scaleX(1.0509)">Schubspannung</span>
<span class="t" style="left:46px;top:291.00px;font-size:9.8px;color:#151515;-webkit-text-stroke:0.22px #151515;transform:scaleX(1.0509)">Verbindungen</span>
<span class="t" style="left:46px;top:305.00px;font-size:9.8px;color:#151515;-webkit-text-stroke:0.22px #151515;transform:scaleX(1.0509)">Verbindungskräfte</span>
<span class="t" style="left:33.3px;top:319.00px;font-size:9.8px;color:#151515;-webkit-text-stroke:0.22px #151515;transform:scaleX(1.0509)">Dynamik</span>
<span class="t" style="left:33.3px;top:333.00px;font-size:9.8px;color:#151515;-webkit-text-stroke:0.22px #151515;transform:scaleX(1.0509)">2D-Teile</span>
<span class="t" style="left:46px;top:347.00px;font-size:9.8px;color:#151515;-webkit-text-stroke:0.22px #151515;transform:scaleX(1.0509)">Verformungen</span>
<span class="t" style="left:46px;top:361.00px;font-size:9.8px;color:#151515;-webkit-text-stroke:0.22px #151515;transform:scaleX(1.0509)">Schnittgrößen</span>
<span class="t" style="left:46px;top:375.00px;font-size:9.8px;color:#151515;-webkit-text-stroke:0.22px #151515;transform:scaleX(1.0509)">Spannungen</span>
<span class="t" style="left:46px;top:389.00px;font-size:9.8px;color:#151515;-webkit-text-stroke:0.22px #151515;transform:scaleX(1.0509)">Kontaktspannungen</span>
<span class="t" style="left:33.3px;top:403.00px;font-size:9.8px;color:#151515;-webkit-text-stroke:0.22px #151515;transform:scaleX(1.0509)">Tools (2D-Ergebnisse)</span>
<span class="t" style="left:33.3px;top:417.00px;font-size:9.8px;color:#151515;-webkit-text-stroke:0.22px #151515;transform:scaleX(1.0509)">2D-/1D-Upgrade</span>
<span class="t" style="left:33.3px;top:431.00px;font-size:9.8px;color:#151515;-webkit-text-stroke:0.22px #151515;transform:scaleX(1.0509)">Materialliste</span>
<span class="t" style="left:33.3px;top:445.00px;font-size:9.8px;color:#151515;-webkit-text-stroke:0.22px #151515;transform:scaleX(1.0509)">Rechenprotokoll</span>
<div style="left:3px;top:571px;width:56px;height:16.5px;background:#cfcfcf;border:1px solid #c2c2c2"></div>
<span class="t" style="left:23px;top:574.64px;font-size:9.4px;color:#9a9a9a;transform:scaleX(0.8698);">Neu</span>
<div style="left:62px;top:571px;width:56px;height:16.5px;background:#e2e2e2;border:1px solid #adadad"></div>
<span class="t" style="left:71.5px;top:574.81px;font-size:9.2px;color:#111;font-weight:bold;transform:scaleX(0.8514);">Schließen</span>
<div style="left:163px;top:104.5px;width:66px;height:122.5px;background:#d7e5f9;border:1px solid #9fc0ec;border-radius:1.5px"></div>
<div style="left:164px;top:105.5px;width:64px;height:20px;background:linear-gradient(#c6d9f3,#b9cfee)"></div>
<span class="t" style="left:166px;top:111.59px;font-size:9.7px;color:#1d4a9c;font-weight:bold;transform:scaleX(0.9449);">Ansi...</span>
<svg style="left:197px;top:113px" width="10" height="8" viewBox="0 0 10 8"><path d="M1 2h8l-4 4.3z" fill="#3f69ae"/></svg>
<svg style="left:214.8px;top:112.3px" width="8.4" height="8.4" viewBox="0 0 8.4 8.4"><path d="M1 1L7.4 7.4M7.4 1L1 7.4" stroke="#4a70b4" stroke-width="1.1" fill="none"/></svg>
<svg style="left:166.3px;top:127.8px" width="12" height="13" viewBox="0 0 12 13"><path d="M2 7.5L6 5.5L10 7.5V10L6 12L2 10z" fill="#30c4c4" stroke="#1a1a1a" stroke-width="0.9"/><ellipse cx="6" cy="8.3" rx="2.2" ry="1.3" fill="#e8ffff" stroke="#1a1a1a" stroke-width="0.6"/><path d="M6 5V0.8" stroke="#2030d0" stroke-width="1"/><path d="M3.2 2.2h2" stroke="#e02020" stroke-width="1.1"/><path d="M7 2.2h2" stroke="#20b030" stroke-width="1.1"/></svg>
<svg style="left:181.4px;top:127.8px" width="12" height="13" viewBox="0 0 12 13"><path d="M2 7.5L6 5.5L10 7.5V10L6 12L2 10z" fill="#30c4c4" stroke="#1a1a1a" stroke-width="0.9"/><ellipse cx="6" cy="8.3" rx="2.2" ry="1.3" fill="#e8ffff" stroke="#1a1a1a" stroke-width="0.6"/><path d="M6 5V0.8" stroke="#2030d0" stroke-width="1"/><path d="M3.2 2.2h2" stroke="#e02020" stroke-width="1.1"/><path d="M7 2.2h2" stroke="#20b030" stroke-width="1.1"/></svg>
<svg style="left:196.8px;top:127.8px" width="12" height="13" viewBox="0 0 12 13"><path d="M2 7.5L6 5.5L10 7.5V10L6 12L2 10z" fill="#30c4c4" stroke="#1a1a1a" stroke-width="0.9"/><ellipse cx="6" cy="8.3" rx="2.2" ry="1.3" fill="#e8ffff" stroke="#1a1a1a" stroke-width="0.6"/><path d="M6 5V0.8" stroke="#2030d0" stroke-width="1"/><path d="M3.2 2.2h2" stroke="#e02020" stroke-width="1.1"/><path d="M7 2.2h2" stroke="#20b030" stroke-width="1.1"/></svg>
<svg style="left:212.1px;top:127.8px" width="12" height="13" viewBox="0 0 12 13"><path d="M2 7.5L6 5.5L10 7.5V10L6 12L2 10z" fill="#30c4c4" stroke="#1a1a1a" stroke-width="0.9"/><ellipse cx="6" cy="8.3" rx="2.2" ry="1.3" fill="#e8ffff" stroke="#1a1a1a" stroke-width="0.6"/><path d="M6 5V0.8" stroke="#2030d0" stroke-width="1"/><path d="M3.2 2.2h2" stroke="#e02020" stroke-width="1.1"/><path d="M7 2.2h2" stroke="#20b030" stroke-width="1.1"/></svg>
<svg style="left:166.3px;top:148.5px" width="12" height="13" viewBox="0 0 12 13"><path d="M2 7.5L6 5.5L10 7.5V10L6 12L2 10z" fill="#30c4c4" stroke="#1a1a1a" stroke-width="0.9"/><ellipse cx="6" cy="8.3" rx="2.2" ry="1.3" fill="#e8ffff" stroke="#1a1a1a" stroke-width="0.6"/><path d="M2 7.5V3M2 3h5" stroke="#e02020" stroke-width="1"/><path d="M10 7.5V4" stroke="#20b030" stroke-width="1"/></svg>
<svg style="left:181.4px;top:148.5px" width="12" height="13" viewBox="0 0 12 13"><path d="M3.5 11V2.5M2 4l1.5-2.2L5 4" fill="none" stroke="#2030d0" stroke-width="1.3"/><path d="M3.5 8.5H10M8.5 6.8l2 1.7-2 1.7" fill="none" stroke="#e02020" stroke-width="1.4"/><path d="M3.5 8.5L7 5.5" stroke="#20b030" stroke-width="1.2"/></svg>
<svg style="left:196.8px;top:148.5px" width="12" height="13" viewBox="0 0 12 13"><circle cx="5.2" cy="5" r="3.8" fill="#c8f4f4" stroke="#1a1a1a" stroke-width="1.1"/><path d="M8 8L11.5 11.8" stroke="#1a1a1a" stroke-width="1.8"/><path d="M3.2 5h4M5.2 3v4" stroke="#111" stroke-width="0.9"/></svg>
<svg style="left:212.1px;top:148.5px" width="12" height="13" viewBox="0 0 12 13"><circle cx="5.2" cy="5" r="3.8" fill="#c8f4f4" stroke="#1a1a1a" stroke-width="1.1"/><path d="M8 8L11.5 11.8" stroke="#1a1a1a" stroke-width="1.8"/><path d="M3.2 5h4" stroke="#111" stroke-width="0.9"/></svg>
<svg style="left:166.3px;top:169.3px" width="12" height="13" viewBox="0 0 12 13"><circle cx="5.2" cy="5" r="3.8" fill="#c8f4f4" stroke="#1a1a1a" stroke-width="1.1"/><path d="M8 8L11.5 11.8" stroke="#1a1a1a" stroke-width="1.8"/><rect x="0.6" y="7.2" width="6" height="4.6" fill="#fff" stroke="#111" stroke-width="0.8"/></svg>
<svg style="left:181.4px;top:169.3px" width="12" height="13" viewBox="0 0 12 13"><circle cx="5.2" cy="5" r="3.8" fill="#c8f4f4" stroke="#1a1a1a" stroke-width="1.1"/><path d="M8 8L11.5 11.8" stroke="#1a1a1a" stroke-width="1.8"/><path d="M0.5 10.5h6M2 9l-1.5 1.5L2 12M5 9l1.5 1.5L5 12" fill="none" stroke="#111" stroke-width="0.8"/></svg>
<svg style="left:196.8px;top:169.3px" width="12" height="13" viewBox="0 0 12 13"><circle cx="5.2" cy="5" r="3.8" fill="#e8f4fa" stroke="#a8b8d0" stroke-width="1.1"/><path d="M8 8L11.5 11.8" stroke="#a8b8d0" stroke-width="1.8"/><path d="M3.5 7.5v4M6 7.5v4" stroke="#e05050" stroke-width="1"/></svg>
<svg style="left:212.1px;top:169.3px" width="12" height="13" viewBox="0 0 12 13"><path d="M1 6L4 3.5H11.5L9 6z" fill="#f4ec60" stroke="#111" stroke-width="0.8"/><path d="M1 6H9V11.5H1z" fill="#e0d828" stroke="#111" stroke-width="0.8"/><path d="M9 6L11.5 3.5V9L9 11.5z" fill="#a8a010" stroke="#111" stroke-width="0.8"/><path d="M4 4.5V0.5" stroke="#2030d0" stroke-width="1"/><path d="M4 1.5h3" stroke="#e02020" stroke-width="1"/></svg>
<svg style="left:166.3px;top:188.8px" width="12" height="13" viewBox="0 0 12 13"><circle cx="6" cy="4.5" r="3.4" fill="#f8ec30" stroke="#6a6000" stroke-width="0.8"/><rect x="4.5" y="7.8" width="3" height="3.6" fill="#303030"/><path d="M4.8 3.5Q6 2 7.2 3.5" stroke="#fff" stroke-width="0.8" fill="none"/></svg>
<div style="left:184.3px;top:188px;width:1px;height:14px;background:#a4bde0"></div>
<svg style="left:190.5px;top:188.5px" width="12" height="13" viewBox="0 0 12 13"><rect x="1" y="4.5" width="10" height="7" fill="#d8dff0" stroke="#1a2a80" stroke-width="1"/><rect x="2.5" y="7" width="7" height="2.6" fill="#d82020"/><path d="M3 4.5V2.5H6.5M5 1l2 1.5L5 4" fill="none" stroke="#1a2a80" stroke-width="0.9"/><path d="M7 3Q10 1 11 4.5" fill="none" stroke="#1a2a80" stroke-width="0.9"/></svg>
<svg style="left:205.5px;top:188.5px" width="12" height="13" viewBox="0 0 12 13"><rect x="1" y="4.5" width="10" height="7" fill="#e4ecf8" stroke="#8aa0d0" stroke-width="1"/><rect x="2.5" y="7" width="7" height="2.6" fill="#f0a0a8"/><path d="M3 4.5V2.5H6.5M5 1l2 1.5L5 4" fill="none" stroke="#8aa0d0" stroke-width="0.9"/><path d="M7 3Q10 1 11 4.5" fill="none" stroke="#8aa0d0" stroke-width="0.9"/></svg>
<div style="left:177px;top:205px;width:38px;height:1px;background:#a4bde0"></div>
<svg style="left:166.3px;top:209.9px" width="12" height="13" viewBox="0 0 12 13"><path d="M1 1H11V4.5H4.5V8.5H11V12H1z" fill="#e8e030" stroke="#2a2800" stroke-width="1.2"/></svg>
<svg style="left:181.4px;top:209.9px" width="12" height="13" viewBox="0 0 12 13"><path d="M1 4L3.5 1.5H11.5V9L9 11.5H1z" fill="#fff" stroke="#14146a" stroke-width="1.1"/><path d="M1 4H9V11.5M9 4L11.5 1.5" fill="none" stroke="#14146a" stroke-width="0.9"/><path d="M3 9.5L7 5.5" stroke="#2030d0" stroke-width="1.3"/><path d="M2.2 5h5.6v5.4H2.2z" fill="#c8d0f8" opacity="0.6"/></svg>
<div style="left:0px;top:591px;width:244px;height:1px;background:#7f8894"></div>
<div style="left:0px;top:592px;width:960px;height:18px;background:linear-gradient(#c9defa,#a9c8f2)"></div>
<div style="left:-1px;top:591px;width:20px;height:12.5px;background:#f4f6fa;border:1px solid #555;border-top:none;border-radius:0 0 3px 3px"></div>
<div style="left:19px;top:591px;width:20.5px;height:14.5px;background:#fff;border:1px solid #444;border-top:none;border-radius:0 0 3px 3px"></div>
<svg style="left:0;top:591px" width="40" height="15" viewBox="0 0 40 15"><path d="M5 3h2v3h-2zM6 6v3.5h3" fill="none" stroke="#222" stroke-width="0.9"/><rect x="9" y="4" width="3" height="2.6" fill="#e02020"/><rect x="9" y="8" width="3" height="2.6" fill="#20c0c0"/><rect x="24" y="3.5" width="9" height="7.5" fill="#fff" stroke="#1a2f8a" stroke-width="1"/><rect x="24" y="3.5" width="9" height="2.2" fill="#1a2f8a"/></svg>
<div style="left:250px;top:104px;width:710px;height:502px;background:#f0f0f0"></div>
<div style="left:250px;top:104px;width:692px;height:485px;background:#f3f3f3;border-left:1.5px solid #7a7a7a;border-top:2px solid #858585;box-shadow:inset 1px 1px 0 #fdfdfd"></div>
<svg style="left:251px;top:106px" width="691" height="482" viewBox="251 106 691 482"><path d="M520.0 507.0L563.0 527.0L563.0 550.0L520.0 530.0z" fill="#c9c9c9" stroke="#7a7a7a" stroke-width="0.8"/><path d="M563.0 527.0L576.0 522.0L576.0 545.0L563.0 550.0z" fill="#b4b4b4" stroke="#7a7a7a" stroke-width="0.8"/><path d="M522 521L562 540" stroke="#555" stroke-width="0.6" stroke-dasharray="2 2"/><path d="M344.2 426.8v13M364.0 435.8v10M383.8 444.8v9M403.6 453.8v11M424.7 463.4v10M460.3 479.6v12M485.4 491.0v11M506.5 500.6v11M519.7 506.6v23M532.9 512.6v23M554.0 522.2v27M569.9 529.4v31M580.4 534.2v31M591.0 539.0v17M594.9 535.1v23M600.1 530.0v19M606.5 523.6v17M614.3 515.9v13" stroke="#4c5252" stroke-width="1.6" fill="none"/><path d="M352 432Q362 440 376 441L383 436z" fill="#1838d8"/><path d="M346 437Q356 446 370 447M370 442v6M384 449h8M388 445v9" stroke="#e02020" stroke-width="0.9" fill="none"/><g stroke="#101010" stroke-width="0.45" stroke-linejoin="round"><path fill="#2008c8" d="M783.5 291l1.5 2l0.5 2.5l-1 3l-1.5 2l-60.5 60.5l-6 3.5l-5 1l-5-0.5l-5.5-3l-2-3l-0.5-2.5l0.5-3.5l1-2l61-60.5l4-2l6.5-1.5l7 1zM613.5 215.5l1.5 2.5l0.5 2.5l0 2l-2 3.5l-7.5 6.5l-16.5 11.5l-12 11.5l-3.5 4.5l-8.5 13l-12.5 13l-7 3.5l-7.5 0.5l-6.5-2l-4-2.5l-1.5-3l-0.5-2.5l0.5-1.5l1.5-3.5l61-60.5l6.5-3l6-1l7 1.5zM699.5 270.5l1.5-3l2.5-1l6.5-1l4.5 1l4 1.5l3.5 2l2 3.5l0.5 2.5l-2.5 3l-2.5 1l-3 1l-5.5-0.5l-4-1l-5.5-3l-2-3.5zM671.5 298.5l1-2l1.5-1.5l2.5-0.5l7-0.5l4.5 1.5l3.5 2l2 3.5l0 2.5l-1 2l-2.5 1l-3 1l-5.5-0.5l-4-1l-3.5-2.5l-2-3zM646.5 331l0.5-2l2-1.5l3-0.5l4 0l4 1.5l1.5 1.5l1.5 2l-0.5 2l-1 1.5l-3 0.5l-5 0l-4.5-2zM555.5 331l0.5-1.5l4-2.5l3-1l5.5 0l4 1.5l5 3l2.5 3.5l0 2l-0.5 2l-3.5 2.5l-3.5 1l-5.5 0l-6.5-2l-3-2.5l-2-3.5zM613.5 385l-0.5 1.5l-3 3l-4 1l-5.5 0l-4-1.5l-5.5-3l-2-3.5l0-2.5l2.5-3l2.5-1l7.5 0l4 1l4 2l2.5 2.5zM666.5 407.5l1.5 2l0 2.5l-0.5 2.5l-1.5 2.5l-43.5 43l-6.5 3.5l-7 1l-4.5-1l-4.5-3.5l-2-4.5l0.5-3l1.5-2.5l43.5-43l4-2.5l6.5-1.5l7.5 1zM476.5 348.5l1.5 4l0.5 2.5l-3 5l-13.5 12.5l-16 9.5l-6.5 5.5l-11 11.5l-3.5 5l-4 8.5l-3.5 4.5l-15.5 16l-7 3.5l-7.5 0.5l-6.5-2l-4-2.5l-1.5-3l-0.5-2.5l1-3.5l1-1.5l74-73.5l6-3.5l8-1.5l6.5 1.5zM509 383.5l2-1l3 0l2 1l2 2l-0.5 1.5l-3 1l-2.5-0.5l-3-2zM555.5 411l3.5-3l2.5-0.5l5.5-0.5l4.5 1l4 1.5l3.5 2.5l2 3.5l0 3l-2.5 3l-2.5 1l-5.5 0.5l-5-0.5l-5.5-2.5l-3-3l-2-3.5zM556 440l0 2.5l-1.5 1.5l-5.5 5.5l-4 2.5l-3 1l-7-0.5l-6-2l-5-3.5l-1.5-4l0.5-3l7-7.5l4.5-2l3.5-0.5l5.5 0.5l6 2l5 3.5zM464.5 447l-0.5 2l-3.5 2.5l-3 0.5l-4.5 0l-4.5-1.5l-3.5-2l-2.5-3l-1-2.5l1-2l1.5-1.5l2-1l4-0.5l5 0.5l4 1.5l3.5 2.5l1.5 2zM511.5 474.5l-1.5 1.5l-2 0.5l-2.5 0l-2.5-1.5l-1-2.5l1.5-1.5l5 0l2 1l1 1.5z"/><path fill="#1058e0" d="M787 290.5l1.5 2l0 2.5l-1 3.5l-2 3.5l-62.5 61.5l-6 3.5l-8.5 1l-6.5-1.5l-4.5-3.5l-2-4l-0.5-4l0.5-2l1.5-3.5l61-60.5l6-3.5l4-0.5l5.5-0.5l5 1l4 1.5zM783.5 291l-5-3l-7-1l-6.5 1.5l-4 2l-61 60.5l-1 2l-0.5 3.5l0.5 2.5l2 3l5.5 3l5 0.5l5-1l6-3.5l60.5-60.5l1.5-2l1-3l-0.5-2.5zM617.5 215l1.5 3l0.5 2.5l-0.5 3.5l-2 3.5l-8 6.5l-17.5 11l-12 11.5l-4.5 6l-7.5 13.5l-11 11.5l-4 2.5l-5 2l-9 1l-5-1l-4-1.5l-3.5-2l-2.5-3l-1-3l0-4l2.5-5l62.5-61.5l7-3.5l8-0.5l8 2l3.5 2zM613.5 215.5l-5-3.5l-7-1.5l-6 1l-6.5 3l-61 60.5l-1.5 3.5l-0.5 1.5l0.5 2.5l1.5 3l4 2.5l6.5 2l7.5-0.5l7-3.5l12.5-13l8.5-13l3.5-4.5l12-11.5l16.5-11.5l7.5-6.5l2-3.5l0-2l-0.5-2.5zM729 276l-1.5 3.5l-4.5 3l-6.5 1.5l-8-1l-6-2l-4.5-3.5l-3-4l0-4.5l2-3l4.5-2.5l5.5-1l7.5 1l6 2l5 3.5l2.5 3zM699.5 269l-0.5 2l0.5 2l2 3l3.5 2.5l4 1.5l4.5 1l6-1l2.5-1l2.5-3l-0.5-2.5l-2-3.5l-3.5-2l-4-1.5l-4.5-1l-4 0l-3 1zM644.5 242l1-1.5l2.5-1.5l3.5-0.5l5 0l4 1.5l3.5 2.5l2 3l0 2l-2 3l-2.5 1l-7 0.5l-4.5-1.5l-3-2.5l-2.5-3zM698.5 302l-1 4l-3 2.5l-4.5 1.5l-6 0l-6.5-1.5l-5.5-2.5l-4-4.5l-1-3l1.5-4l4-2l6-1.5l5 0.5l4.5 1l5.5 3l3 2.5zM671.5 298.5l0.5 2l2 3l3.5 2.5l4 1l5.5 0.5l3-1l2.5-1l1-2l0-2.5l-2-3.5l-3.5-2l-4.5-1.5l-7 0.5l-2.5 0.5l-1.5 1.5zM641 328.5l2.5-3l2.5-1.5l5.5-0.5l5 0.5l6 2l3.5 2.5l2 3l0.5 3l-0.5 2l-1.5 1l-2.5 1l-8 1l-6-1l-4-1.5l-3-2.5l-2-3.5zM646.5 331l2.5 3l4.5 2l5 0l3-0.5l1-1.5l0.5-2l-1.5-2l-1.5-1.5l-4-1.5l-4 0l-3 0.5l-2 1.5zM584 302.5l1-2l1.5-1l3-1l3.5 0.5l6 2.5l2 2.5l0 2l-1 1.5l-2 1l-3.5 0.5l-3 0l-5.5-3l-1.5-1.5zM552 329.5l2.5-3l4-2l7-1l5 0.5l6 2.5l5 3.5l2.5 3.5l0 4.5l-2 3l-4.5 2.5l-7.5 0.5l-7.5-1l-5.5-2.5l-3-2.5l-2.5-4.5zM555.5 331l0 2.5l2 3.5l3 2.5l6.5 2l5.5 0l3.5-1l3.5-2.5l0.5-2l0-2l-2.5-3.5l-5-3l-4-1.5l-5.5 0l-3 1l-4 2.5zM585 378l2.5-3l5-1.5l6-0.5l5 0.5l6 2.5l4.5 3l3 3.5l0.5 4l-2 3.5l-4 2.5l-7 0.5l-6-0.5l-6-2l-5-3.5l-3-5zM613.5 385l-1.5-3.5l-2.5-2.5l-4-2l-4-1l-7.5 0l-2.5 1l-2.5 3l0 2.5l2 3.5l5.5 3l4 1.5l5.5 0l4-1l3-3zM534.5 353l0.5-1.5l4-2.5l6.5-0.5l6 2.5l3 2.5l1 3l-0.5 1.5l-1.5 1.5l-2 1.5l-3.5 0.5l-3.5-0.5l-4.5-1l-3.5-2.5l-1.5-2zM670 406.5l1.5 2.5l0 2.5l-1 3.5l-2 3l-45 44.5l-6.5 3.5l-8 1l-7-1.5l-3.5-2l-2.5-2.5l-1.5-3l0-4l0.5-2l2-3.5l43.5-43l6.5-3.5l6-1.5l3.5 0l5 1l4 1.5zM666.5 407.5l-5-3.5l-7.5-1l-6.5 1.5l-4 2.5l-43.5 43l-1.5 2.5l-0.5 3l2 4.5l4.5 3.5l4.5 1l7-1l6.5-3.5l43.5-43l1.5-2.5l0.5-2.5l0-2.5zM480.5 347.5l1.5 3.5l0.5 3.5l-1 4l-2.5 3l-14 12.5l-17 9l-6.5 5.5l-11.5 11.5l-2.5 5l-3.5 9l-3 4.5l-16 16l-6 3.5l-6 1.5l-4 0.5l-8.5-1.5l-4-2l-3-2.5l-2-3.5l-0.5-3l1-4l2-3l75-75l4-2l5.5-2l7.5-0.5l8 1.5l3.5 2zM476.5 348.5l-5-3.5l-6.5-1.5l-8 1.5l-6 3.5l-74 73.5l-1 1.5l-1 3.5l0.5 2.5l1.5 3l4 2.5l6.5 2l7.5-0.5l7-3.5l15.5-16l3.5-4.5l4-8.5l3.5-5l11-11.5l6.5-5.5l16-9.5l13.5-12.5l3-5l-0.5-2.5zM525.5 386.5l-0.5 2l-3 3l-4 1l-5 0l-4.5-1.5l-5-3l-2-3.5l0-2.5l2-2.5l3-1.5l4.5-0.5l4.5 1l4.5 1.5l3 2l1.5 2.5zM509 383.5l0 2l3 2l2.5 0.5l3-1l0.5-1.5l-2-2l-2-1l-3 0zM585.5 418l-1.5 3.5l-4 2.5l-6.5 1.5l-7.5-0.5l-6.5-2l-5-3.5l-3-4l-0.5-4.5l2-3.5l4.5-2l6.5-1l7 0.5l4.5 2l5.5 3l3 3.5l1.5 2.5zM555.5 411l-0.5 2.5l2 3.5l3 3l5.5 2.5l5 0.5l5.5-0.5l2.5-1l2.5-3l0-3l-2-3.5l-3.5-2.5l-4-1.5l-4.5-1l-5.5 0.5l-2.5 0.5zM560 439l0 3l-0.5 2l-7 7.5l-3.5 2.5l-6 1.5l-7.5-0.5l-8.5-2.5l-6.5-5l-2-3l-0.5-2.5l1-3.5l7.5-7.5l4-2.5l6.5-1l8.5 1l6 2l5 3.5zM556 440l-1.5-4l-5-3.5l-6-2l-5.5-0.5l-3.5 0.5l-4.5 2l-7 7.5l-0.5 3l1.5 4l5 3.5l6 2l7 0.5l3-1l4-2.5l5.5-5.5l1.5-1.5zM437.5 441l2.5-3l5-2l4.5-0.5l7.5 1l5.5 2.5l3.5 2.5l2 3.5l0.5 4l-2 3l-4.5 2l-6.5 0.5l-5-0.5l-6-2.5l-4-3l-2.5-4zM464.5 447l-0.5-2.5l-1.5-2l-3.5-2.5l-4-1.5l-5-0.5l-4 0.5l-2 1l-1.5 1.5l-1 2l1 2.5l2.5 3l3.5 2l4.5 1.5l4.5 0l3-0.5l3.5-2.5zM497.5 470.5l1.5-1.5l2.5-1l7 0l5.5 3l1 1.5l0.5 1.5l-1 2l-3.5 2.5l-3 1l-2.5-0.5l-4-1.5l-3-2.5l-1.5-3zM511.5 474.5l0-1l-1-1.5l-2-1l-5 0l-1.5 1.5l1 2.5l2.5 1.5l2.5 0l2-0.5z"/><path fill="#10a8e8" d="M621 214.5l1.5 3l1 4.5l-1 3.5l-2 3.5l-6.5 5.5l-17.5 8.5l-6.5 5.5l-11.5 11.5l-3 5l-3 9l-3 5l-11.5 11.5l-4 2.5l-6.5 2l-6.5 0.5l-5-0.5l-4.5-1l-6-2.5l-3-2l-2.5-3l-1.5-3.5l0-4l1-4l2.5-3l62.5-61.5l4-2.5l5-1.5l5-1l5 0.5l5 1l6 2l3 2.5zM617.5 215l-3.5-3l-3.5-2l-8-2l-8 0.5l-7 3.5l-62.5 61.5l-2.5 5l0 4l1 3l2.5 3l3.5 2l4 1.5l5 1l9-1l5-2l4-2.5l11-11.5l7.5-13.5l4.5-6l12-11.5l17.5-11l8-6.5l2-3.5l0.5-3.5l-0.5-2.5zM790 289l1.5 3l0 4l-1.5 3.5l-2.5 3.5l-62 61.5l-8.5 4.5l-8 1.5l-4.5-0.5l-4.5-1.5l-4.5-3.5l-2-4.5l-1.5-5l0.5-4l1.5-3.5l60.5-60l4-2.5l4.5-2l4.5-1l5.5 0l9.5 1.5l3.5 2zM787 290.5l-4.5-3.5l-4-1.5l-5-1l-5.5 0.5l-4 0.5l-6 3.5l-61 60.5l-1.5 3.5l-0.5 2l0.5 4l2 4l4.5 3.5l6.5 1.5l8.5-1l6-3.5l62.5-61.5l2-3.5l1-3.5l0-2.5zM671.5 248l-1 3.5l-4 2.5l-6 1.5l-6.5-0.5l-4.5-1l-5.5-4l-3.5-4l-1.5-2.5l0-2l1.5-3.5l4-2l7.5-1l5 0.5l6 2l5 3.5l2.5 3zM644.5 242l0 3l2.5 3l3 2.5l4.5 1.5l7-0.5l2.5-1l2-3l0-2l-2-3l-3.5-2.5l-4-1.5l-5 0l-3.5 0.5l-2.5 1.5zM691 267l2-3l2-1l5-2l8-0.5l8.5 1l8 3.5l4.5 3.5l3.5 5l0.5 4.5l-2 3.5l-3.5 2.5l-2 1l-9 1.5l-10-1.5l-7.5-3l-5-4l-3-5l-0.5-2zM729 276l-1-4l-2.5-3l-5-3.5l-6-2l-7.5-1l-5.5 1l-4.5 2.5l-2 3l0 4.5l3 4l4.5 3.5l6 2l8 1l6.5-1.5l4.5-3zM664 294.5l2.5-3l2-1l6-1.5l6.5 0l7 1l6 2.5l4.5 3.5l3.5 5l0.5 3l-1.5 3.5l-3 2.5l-5 2l-8 0.5l-7.5-1l-7.5-3.5l-4.5-4l-2-5.5zM698.5 304l-1-4.5l-2.5-3l-3-2l-6-2.5l-5-1l-6 0.5l-5 2l-2.5 3l0 4l2 3l4 3.5l6 2.5l7.5 0.5l5-0.5l4-2zM673.5 334.5l-1.5 3.5l-4 2.5l-7 1l-10.5-0.5l-4.5-1l-5.5-3l-3-4l-1-4.5l1.5-3.5l3.5-2.5l7-2l8 0.5l6.5 2l5 3l4 4.5zM641 328.5l0 2.5l2 3.5l3 2.5l4 1.5l6 1l8-1l2.5-1l1.5-1l0.5-2l-0.5-3l-2-3l-3.5-2.5l-6-2l-5-0.5l-5.5 0.5l-2.5 1.5zM578 299.5l3-3l5-1.5l4.5 0l5.5 1l6 2.5l3 2l2 3.5l0.5 2.5l-2 3.5l-4 2.5l-6 0.5l-5-0.5l-6-2.5l-4.5-3l-2-4zM584 302.5l0.5 2l1.5 1.5l5.5 3l3 0l3.5-0.5l2-1l1-1.5l0-2l-2-2.5l-6-2.5l-3.5-0.5l-3 1l-1.5 1zM588 335.5l-0.5 4l-0.5 2l-3.5 2.5l-7.5 2l-8.5 0.5l-7.5-1l-5.5-2.5l-3-3l-2.5-3l-1-5l0.5-2.5l1.5-3l5-3.5l6-2l7 0l6.5 2l7.5 3.5l4 4zM552 329.5l-0.5 4l2.5 4.5l3 2.5l5.5 2.5l7.5 1l7.5-0.5l4.5-2.5l2-3l0-4.5l-2.5-3.5l-5-3.5l-6-2.5l-5-0.5l-7 1l-4 2zM530 351l2-3l5-2l6.5-0.5l7.5 0.5l3.5 2l3 2.5l2.5 3.5l0 4.5l-2 3l-4.5 2.5l-7 0.5l-4.5-1l-6-2.5l-3.5-2.5l-2.5-3l-0.5-2.5zM535 351.5l-0.5 1.5l1 3l2.5 3l4 1.5l5 1l2.5-0.5l4-1.5l1.5-1.5l0.5-1.5l-1-3l-3-2.5l-3.5-2l-5-0.5l-3 0.5l-3.5 1zM580.5 378l0.5-1.5l3-3l4.5-2l7-1l10 1l8 3.5l4.5 3.5l3 5.5l0.5 4.5l-1 1.5l-3 3l-5 2l-7.5 0.5l-8.5-1l-8-3.5l-4.5-3.5l-3-5zM617.5 386.5l-0.5-4l-3-3.5l-4.5-3l-6-2.5l-7-0.5l-6.5 1l-4 2.5l-1.5 3.5l0 2l1.5 3l3 3l3.5 2.5l6 2l6 0.5l7-0.5l4-2.5zM673.5 406l1 2.5l0 4l-1.5 3.5l-2.5 3l-42 42l-5 4l-7.5 3.5l-3.5 1l-6 0l-4.5-1l-4-1.5l-3-2l-2.5-3.5l-1.5-4l-0.5-3.5l1.5-3.5l2-3.5l45-44l8-3.5l5.5-1l5 0l5.5 1l4 1.5l3.5 2.5zM670 406.5l-4.5-3.5l-4-1.5l-5-1l-3.5 0l-6 1.5l-6.5 3.5l-43.5 43l-2 3.5l-0.5 2l0 4l1.5 3l2.5 2.5l3.5 2l7 1.5l8-1l6.5-3.5l45-44.5l2-3l1-3.5l0-2.5zM483 345l2 3l1.5 4.5l-0.5 3.5l-2.5 5.5l-13.5 12.5l-4 2.5l-12 5l-6 3.5l-3.5 2.5l-10.5 10l-4 6.5l-3.5 11l-1.5 3.5l-5 6l-11.5 11.5l-4 2.5l-4.5 2l-6 1.5l-6.5 0.5l-5-0.5l-6.5-2l-3.5-2l-2.5-2.5l-2-4l-1-4.5l1.5-5l2-3l75.5-74.5l4-2.5l4.5-2l10.5-2l5 0.5l4.5 1l5.5 3zM480.5 347.5l-3-3l-3.5-2l-8-1.5l-7.5 0.5l-5.5 2l-4 2l-75 75l-2 3l-1 4l0.5 3l2 3.5l3 2.5l4 2l8.5 1.5l4-0.5l6-1.5l6-3.5l16-16l3-4.5l3.5-9l2.5-5l11.5-11.5l6.5-5.5l17-9l14-12.5l2.5-3l1-4l-0.5-3.5zM497 380l2.5-3l5-2l6.5-0.5l7 1.5l6 2.5l3.5 3l2 3l1 4.5l-2 3l-4 2.5l-7 1l-7.5-0.5l-5.5-2.5l-5-3.5l-3-5zM525.5 386.5l-1-2l-1.5-2.5l-3-2l-4.5-1.5l-4.5-1l-4.5 0.5l-3 1.5l-2 2.5l0 2.5l2 3.5l5 3l4.5 1.5l5 0l4-1l3-3zM548.5 407.5l3-2.5l5-2l7.5-1l9.5 1.5l7.5 3.5l5 3.5l3 5l0 4.5l-0.5 1.5l-2.5 3l-6 2.5l-9 1l-10-1l-6-2.5l-4-4l-3-5.5l-1-4zM585.5 418l0-2l-1.5-2.5l-3-3.5l-5.5-3l-4.5-2l-7-0.5l-6.5 1l-4.5 2l-2 3.5l0.5 4.5l3 4l5 3.5l6.5 2l7.5 0.5l6.5-1.5l4-2.5zM564 440.5l-0.5 3.5l-0.5 1.5l-9 8.5l-4 2.5l-9 1l-10-1l-4-1.5l-5-3l-5.5-5.5l-2-4l0-2l1.5-4l8.5-8.5l5-2l8-1l8 1l9 2l5.5 5l2.5 3.5zM560 440l-1-3l-2-2.5l-5.5-4l-6-2l-8.5-1l-6.5 1l-4 2.5l-7.5 7.5l-1 3.5l0.5 2.5l2 3l6.5 5l8.5 2.5l7.5 0.5l4-1l4-2l8.5-8.5zM434.5 439.5l2.5-3l6-2.5l8.5-0.5l7 1.5l6 2.5l4.5 3.5l3 5l0 4.5l-1 1.5l-3 2.5l-5.5 2l-6.5 0.5l-7-1.5l-8-3l-4.5-4l-2.5-5zM468.5 449l-0.5-4l-2-3.5l-3.5-2.5l-5.5-2.5l-7.5-1l-4.5 0.5l-5 2l-2.5 3l0.5 3.5l2.5 4l4 3l6 2.5l5 0.5l6.5-0.5l4.5-2zM494 468.5l1.5-1l4-1.5l8.5 0l4 1l4 2l1.5 2l0.5 2.5l-1.5 3.5l-3 2.5l-4.5 1.5l-5 0l-4-1.5l-5-4l-1.5-3l0-2zM497.5 470.5l-0.5 1.5l1.5 3l3 2.5l4 1.5l2.5 0.5l3-1l3.5-2.5l1-2l-0.5-1.5l-1-1.5l-5.5-3l-7 0l-2.5 1z"/><path fill="#00f0f0" d="M625 215l2 4.5l0.5 4l-1 4l-2.5 3l-7 5.5l-14.5 5.5l-6.5 3.5l-3.5 2.5l-10 10l-4.5 6.5l-2.5 11.5l-1.5 3.5l-7.5 9l-4.5 4.5l-4.5 2l-8 2.5l-7.5 1l-5-0.5l-7.5-1.5l-6-2.5l-4.5-3.5l-3-3l-1.5-3.5l0-4.5l1-3.5l3-5l56.5-56l8-7l4.5-2l5.5-1.5l7.5-0.5l5 0.5l6.5 1.5l6 3l4.5 3.5zM621 214.5l-3.5-3l-3-2.5l-6-2l-5-1l-5-0.5l-5 1l-5 1.5l-4 2.5l-62.5 61.5l-2.5 3l-1 4l0 4l1.5 3.5l2.5 3l3 2l6 2.5l4.5 1l5 0.5l6.5-0.5l6.5-2l4-2.5l11.5-11.5l3-5l3-9l3-5l11.5-11.5l6.5-5.5l17.5-8.5l6.5-5.5l2-3.5l1-3.5l-1-4.5zM792.5 288l1.5 3l0.5 3l-1 3.5l-2.5 4.5l-63.5 63.5l-5.5 3.5l-4.5 2.5l-7.5 1l-5-0.5l-4.5-1l-3.5-2l-3-2.5l-3-5l-2-7l0-4.5l2-3.5l60.5-60l3.5-2.5l5-2l6-1.5l6.5-0.5l5 0.5l6.5 2l5.5 3zM790 289l-4-3l-3.5-2l-9.5-1.5l-5.5 0l-4.5 1l-4.5 2l-4 2.5l-60.5 60l-1.5 3.5l-0.5 4l1.5 5l2 4.5l4.5 3.5l4.5 1.5l4.5 0.5l8-1.5l8.5-4.5l62-61.5l2.5-3.5l1.5-3.5l0-4zM634.5 237.5l1.5-1.5l4-2.5l6-1.5l8.5 0.5l6.5 1.5l7.5 3.5l4.5 4l3 4.5l0.5 4l-2 3.5l-3.5 2.5l-6.5 2l-6 0.5l-7-1l-6-2.5l-8-8l-2.5-3l-1-2.5zM671.5 248l-1-4l-2.5-3l-5-3.5l-6-2l-5-0.5l-7.5 1l-4 2l-1.5 3.5l0 2l1.5 2.5l3.5 4l5.5 4l4.5 1l6.5 0.5l6-1.5l4-2.5zM687 265.5l2.5-3l1.5-1.5l8-2.5l10-0.5l9.5 2l7.5 3l6.5 5l3.5 5l1 2.5l0 4l-1 2l-2.5 3l-7 3l-10 1.5l-12-1.5l-8-3.5l-6-5l-2-3l-2-4.5l0-2zM733 276l-2-5l-5-5l-7.5-3.5l-6.5-2l-8.5 0l-6 1l-4.5 2.5l-2 3l-0.5 4l1.5 4l3.5 4.5l5 3.5l8.5 2.5l7.5 1l9-1.5l2-1l3.5-2.5l2-3zM706 305.5l-0.5 2l-2.5 3l-6 3.5l-9.5 1l-10-1l-8-3.5l-6-4.5l-3.5-5l-0.5-4l1-4l2.5-3l7-3l7.5-0.5l10.5 1l6.5 1.5l6.5 4.5l4.5 6.5zM702.5 304l-1.5-5l-4-4.5l-5-3l-6.5-2l-7.5-1l-7 1l-4.5 2l-2.5 3l-0.5 2l0.5 4.5l1.5 3l3 2.5l7 4l6.5 2l7.5 0l6-1l2.5-1.5l3-2.5zM632.5 326.5l0.5-2l3-3l6-2.5l8.5-1l8.5 1l8 3l5.5 4l4 5.5l1 5l-1.5 3.5l-1.5 1.5l-5.5 1.5l-13.5 0.5l-9.5-1l-6-2.5l-4.5-3.5l-3-5.5zM673.5 334.5l-1.5-4l-4-4.5l-5-3l-6.5-2l-8-0.5l-7 2l-3.5 2.5l-1.5 3.5l1 4.5l3 4l5.5 3l4.5 1l10.5 0.5l7-1l4-2.5zM573 297.5l2.5-3l2.5-1l5.5-1.5l8 0l7 1.5l6 2.5l4.5 3.5l3 5l0 4.5l-0.5 1.5l-3 3l-5 2l-7.5 0.5l-8-1l-6-2.5l-6.5-4.5l-2.5-5.5l-0.5-3.5zM578 299.5l0 3.5l2 4l4.5 3l6 2.5l5 0.5l6-0.5l4-2.5l2-3.5l-0.5-2.5l-2-3.5l-3-2l-6-2.5l-5.5-1l-4.5 0l-5 1.5zM591 332.5l1 3.5l0 3.5l-0.5 1.5l-2.5 3.5l-7 3l-14.5 2l-3 0.5l-0.5 2l1 5l-0.5 3.5l-2.5 3l-4.5 2.5l-5.5 1l-5.5 0l-9-2l-7-4l-3-2.5l-2-4l0-3.5l0.5-2l2.5-3l4.5-2l12-3l1-1.5l-1.5-7l1-4l3.5-4.5l6-4l5.5-1l4.5-0.5l5 0.5l6.5 2l5.5 2.5l6 5zM588 335.5l-2-5l-4-4l-7.5-3.5l-6.5-2l-7 0l-6 2l-5 3.5l-1.5 3l-0.5 2.5l1 5l2.5 3l3 3l5.5 2.5l7.5 1l8.5-0.5l7.5-2l3.5-2.5l0.5-2zM530 351l-0.5 2l0.5 2.5l2.5 3l3.5 2.5l6 2.5l4.5 1l7-0.5l4.5-2.5l2-3l0-4.5l-2.5-3.5l-3-2.5l-3.5-2l-7.5-0.5l-6.5 0.5l-5 2zM625.5 388l-0.5 2l-2 3.5l-6.5 3l-10 1.5l-10-1l-10-4l-6-5l-3-5l-1-2.5l0.5-4l2-3l1.5-1.5l7-3l8-1l10 1l8 3l6.5 5l4.5 6zM581 376.5l-0.5 4l0.5 2l2 3.5l5.5 5l8 3.5l8.5 1l7.5-0.5l5-2l3-3l1-1.5l-0.5-4.5l-3-5.5l-4.5-3.5l-8-3.5l-7-1l-6.5 0.5l-6 1.5l-2 1zM676 405l1.5 2.5l0 2.5l-1 4l-3 4.5l-43 43l-5 4.5l-9 4.5l-3.5 1l-6.5 0.5l-4.5-0.5l-4.5-1l-5-3.5l-2.5-2.5l-2-4l-1-4.5l0.5-3.5l2.5-5l15-16l31-30l4-2.5l5-2l5-0.5l5.5 0l5 0.5l6.5 2l5.5 2.5zM673.5 406l-3-2.5l-3.5-2.5l-4-1.5l-5.5-1l-5 0l-5.5 1l-8 3.5l-45 44l-2 3.5l-1.5 3.5l0.5 3.5l1.5 4l2.5 3.5l3 2l4 1.5l4.5 1l6 0l3.5-1l7.5-3.5l5-4l42-42l2.5-3l1.5-3.5l0-4zM487 344l2.5 5.5l0.5 4.5l-0.5 4l-2.5 5l-7 7l-6.5 5.5l-6.5 3.5l-15 5l-4.5 3l-13.5 12.5l-2 3.5l-1.5 5l-1 8.5l-2.5 5l-6.5 7.5l-10.5 10l-6.5 3.5l-5.5 1.5l-6.5 1l-10 0l-13.5-6.5l-2-2l-2.5-6l0-4.5l1-3.5l3-5l75.5-74.5l5.5-4l5-1.5l6-1.5l8-0.5l5 0.5l6.5 2l5 3zM483 345l-3-2.5l-5.5-3l-4.5-1l-5-0.5l-10.5 2l-4.5 2l-4 2.5l-75.5 74.5l-2 3l-1.5 5l1 4.5l2 4l2.5 2.5l3.5 2l6.5 2l5 0.5l6.5-0.5l6-1.5l4.5-2l4-2.5l11.5-11.5l5-6l1.5-3.5l3.5-11l4-6.5l10.5-10l3.5-2.5l6-3.5l12-5l4-2.5l13.5-12.5l2.5-5.5l0.5-3.5l-1.5-4.5zM535 389l-1.5 3.5l-2.5 3l-2.5 1l-8 2l-10.5-1l-6-2l-6.5-4.5l-5-6.5l-0.5-4.5l1.5-3.5l4-2.5l2.5-1l7-1l9 0.5l8.5 3l5 3l2.5 3l2 3zM497 380l-0.5 4l3 5l5 3.5l5.5 2.5l7.5 0.5l7-1l4-2.5l2-3l-1-4.5l-2-3l-3.5-3l-6-2.5l-7-1.5l-6.5 0.5l-5 2zM592.5 415l0.5 2.5l0 4l-2 3.5l-3.5 2.5l-5 2l-15.5 1.5l-2 1l2.5 9.5l-0.5 4l-2 3l-6 6l-5.5 3.5l-6 1.5l-6 0.5l-7.5-1l-6.5-1.5l-6-2.5l-4.5-3.5l-4-4.5l-2-3.5l-0.5-3l1-3.5l2-3.5l7.5-7l7.5-3l15.5-1l2-1.5l-3-9.5l1-4l2-3l2-1.5l4.5-2l6.5-1l7 0l11.5 2.5l5.5 2.5l3.5 2l4 4.5zM589.5 418l-2-5l-4.5-5l-7.5-4l-6.5-1.5l-8-0.5l-7.5 1.5l-2 1.5l-3 2.5l-1.5 3.5l0 2.5l1.5 3.5l5 6l5.5 3l7 1.5l11 0l7-1.5l2-1.5l2.5-3zM564 440.5l-1.5-4l-2.5-3.5l-5.5-5l-9-2l-8-1l-8 1l-5 2l-8.5 8.5l-1.5 4l0 2l2 4l5.5 5.5l5 3l4 1.5l10 1l9-1l4-2.5l9-8.5l0.5-1.5zM432 436.5l3.5-3l5-1.5l8.5-0.5l9 1l8 3l5 3.5l3.5 5l1.5 4l-0.5 4l-2.5 3l-7 3l-9.5 1l-9.5-1.5l-7.5-3.5l-6-5l-3-5l-0.5-4.5zM472.5 448.5l-1.5-5l-3.5-4l-5-3l-8.5-2.5l-7.5-0.5l-7.5 1.5l-3.5 3l-1.5 3.5l1 4.5l3 4l5 3.5l8 2.5l7.5 1l7-1.5l2.5-1l3-2.5zM491 467l3.5-2.5l2.5-0.5l5-0.5l7.5 0.5l8 3.5l2.5 3l0 2.5l-2 4.5l-5.5 4l-5.5 1.5l-5-0.5l-5.5-2.5l-4.5-4l-1.5-2.5l-1-2.5zM518 472.5l-1-2l-3-2.5l-4-1.5l-4.5-1l-7.5 0.5l-2.5 1.5l-1.5 1l-0.5 2l0.5 3.5l2.5 3l5 3.5l4.5 1l5-1l4-2l2.5-3.5z"/><path fill="#10d8a0" d="M795.5 287.5l1.5 4l0 3l-1 3.5l-3.5 5l-65 64.5l-8 5l-5 1.5l-4 0.5l-5 0l-4.5-1.5l-5.5-2.5l-3-2.5l-2.5-3.5l-4.5-11.5l0-4.5l1-3.5l12.5-11.5l17-17l13.5-13l7-7.5l5.5-7.5l3.5-3l6-3.5l7.5-2.5l6.5-1.5l6.5 0l7.5 1l6 2l5.5 2.5zM792.5 288l-3-2.5l-5.5-3l-6.5-2l-5-0.5l-6.5 0.5l-6 1.5l-5 2l-3.5 2.5l-60.5 60l-2 3.5l0 4.5l2 7l3 5l3 2.5l3.5 2l4.5 1l5 0.5l7.5-1l4.5-2.5l5.5-3.5l63.5-63.5l2.5-4.5l1-3.5l-0.5-3zM677 240.5l2.5 3l1.5 4.5l0.5 4.5l-1 3.5l-3.5 2.5l-6 2l-6.5 1l-11-0.5l-4.5-1l-3.5-2l-13-12l-5.5-8l-2-1l-19 5l-6.5 2.5l-4 2.5l-11.5 11.5l-3.5 4.5l-1.5 6l-0.5 8l-3.5 9.5l1.5 1.5l2 0.5l10.5 0.5l9.5 1.5l10 4l4.5 3.5l3.5 5l0.5 6l-1.5 3.5l-5 4l-7 2l-9 0.5l-12-0.5l6.5 6.5l5 6l2 6l0 4l-2 3.5l-5.5 4l-5 1.5l-10.5 2l-2.5 1l-1 1.5l-1 8l-2.5 3l-1.5 1l-5 2l-4 1l-6 0l-7.5-0.5l-4.5-1l-6-2.5l-3.5-2l-4-4.5l-3-5.5l0-2.5l1-3.5l1-1.5l3.5-3l13-4.5l1-1.5l1-6l1-3.5l2-3l5-4.5l4-2.5l6-1l5-0.5l15 1l-8-8l-6-10.5l-1.5-1l-3 0l-13.5 3l-8.5 0l-10.5-2.5l-9-4l-5.5-4.5l-2.5-3.5l-1-4.5l1-6l1.5-3.5l4-4.5l61-60l6-3.5l8-2.5l11 0l9 2l9 4.5l6.5 5l3 6l1.5 8l1 2l2 1l14.5-0.5l9.5 1l10 4zM625 215l-2.5-3l-4.5-3.5l-6-3l-6.5-1.5l-5-0.5l-7.5 0.5l-5.5 1.5l-4.5 2l-8 7l-56.5 56l-3 5l-1 3.5l0 4.5l1.5 3.5l3 3l4.5 3.5l6 2.5l7.5 1.5l5 0.5l7.5-1l8-2.5l4.5-2l4.5-4.5l7.5-9l1.5-3.5l2.5-11.5l4.5-6.5l10-10l3.5-2.5l6.5-3.5l14.5-5.5l7-5.5l2.5-3l1-4l-0.5-4zM634.5 237.5l-0.5 4l1 2.5l2.5 3l8 8l6 2.5l7 1l6-0.5l6.5-2l3.5-2.5l2-3.5l-0.5-4l-3-4.5l-4.5-4l-7.5-3.5l-6.5-1.5l-8.5-0.5l-6 1.5l-4 2.5zM612.5 307l-1.5-5l-3.5-4l-5-3l-8-2.5l-8-0.5l-8.5 1.5l-4 2.5l-1.5 3l0.5 4.5l4 6l6.5 4l6.5 2l8 0.5l8-1.5l2.5-1l3-3zM591.5 333.5l-2-3.5l-3-3l-4.5-3.5l-3.5-2l-4-1.5l-7-1l-5.5-0.5l-5 1l-6.5 3l-4.5 4.5l-1.5 5.5l1.5 7l-1 1.5l-12 3l-4.5 2l-2.5 3l-0.5 2l0 3.5l2 4l3 2.5l7 4l9 2l5.5 0l5.5-1l4.5-2.5l2.5-3l0.5-3.5l-1-5l0.5-2l3-0.5l12-1.5l7.5-2.5l4.5-4.5l0.5-3.5zM740 272.5l1.5 5l0.5 4.5l-1.5 3.5l-1.5 1.5l-4.5 2l-6 1.5l-7.5 1l-13 0l-1.5 1.5l3 8.5l0.5 6l-0.5 1.5l-2.5 3.5l-6 3l-6.5 1.5l-6.5 0.5l-8-0.5l-7-1.5l-5.5-2.5l-5-3.5l-4-4.5l-2.5-5.5l-0.5-2.5l0.5-4l2-3l3.5-3l7.5-2.5l16.5-1l1.5-1.5l-4-9l-1.5-6l1.5-5.5l1-1.5l4.5-2.5l6-1.5l7.5-0.5l9 0.5l7 1.5l8 3l5.5 3l4.5 3.5zM687 265.5l-0.5 4l0 2l2 4.5l2 3l6 5l8 3.5l12 1.5l10-1.5l7-3l2.5-3l1-2l0-4l-1-2.5l-3.5-5l-6.5-5l-7.5-3l-9.5-2l-10 0.5l-8 2.5l-1.5 1.5zM706 305.5l-0.5-5.5l-4.5-6.5l-6.5-4.5l-6.5-1.5l-10.5-1l-7.5 0.5l-7 3l-2.5 3l-1 4l0.5 4l3.5 5l6 4.5l8 3.5l10 1l9.5-1l6-3.5l2.5-3zM682.5 338.5l-1.5 3.5l-2 1.5l-5.5 1.5l-24 0l-7.5-1l-5.5-3l-6-5.5l-2.5-5.5l0.5-5.5l2-3l3-3l8-2.5l10-0.5l12 1.5l7.5 3.5l6 5l4 6.5l1 2.5zM632.5 326.5l0 4.5l3 5.5l4.5 3.5l6 2.5l9.5 1l13.5-0.5l5.5-1.5l1.5-1.5l1.5-3.5l-1-5l-4-5.5l-5.5-4l-8-3l-8.5-1l-8.5 1l-6 2.5l-3 3zM629.5 390l-1 3.5l-3 3l-7.5 3l-7 1l-6.5 0l-12-2l-8-3l-7.5-6.5l-2.5-3l-2-5l0.5-6.5l1.5-3l2-1.5l7-3l11.5-1.5l12.5 1.5l8 3l6 5l6.5 8l1 2.5zM625.5 388l-1-5l-4.5-6l-6.5-5l-8-3l-10-1l-8 1l-7 3l-1.5 1.5l-2 3l-0.5 4l1 2.5l3 5l6 5l10 4l10 1l10-1.5l6.5-3l2-3.5zM678.5 404l2 3.5l-0.5 3.5l-1 3.5l-3.5 5l-43 43l-6.5 5.5l-6.5 3.5l-4.5 2l-5 1l-6 0.5l-5-1l-6-2l-4.5-3.5l-2.5-3l-2-4l-1-4.5l0-4.5l2-5l14.5-16.5l17-15.5l15-16l7-3.5l5.5-1.5l11-0.5l7 1.5l6 2l5.5 2.5zM676 405l-3.5-3.5l-5.5-2.5l-6.5-2l-5-0.5l-5.5 0l-5 0.5l-5 2l-4 2.5l-31 30l-15 16l-2.5 5l-0.5 3.5l1 4.5l2 4l2.5 2.5l5 3.5l4.5 1l4.5 0.5l6.5-0.5l3.5-1l9-4.5l5-4.5l43-43l3-4.5l1-4l0-2.5zM539 386.5l0 6.5l-2 3l-1.5 1.5l-7.5 3l-10.5 0.5l-5 0l-7-1.5l-3.5-2l-5-3.5l-5.5-6l-4-6l-1-7l0.5-1l-2.5-0.5l-9.5 5l-5 2l-15 3.5l-4.5 2l-3.5 2.5l-12.5 13.5l-2 5l0.5 9l-0.5 4l-5.5 10l-2.5 3l-13 9l-9 4l-6 1.5l-7.5 0.5l-7.5-3l9 0l7.5-1l8-3l5.5-3.5l10.5-10l6-7.5l1.5-3.5l2-12l1.5-3.5l2.5-3l10-10l3.5-2.5l7-3l13-4.5l4.5-2.5l6.5-5.5l7-7l2.5-5l0.5-6l-2-6.5l-4-4.5l-5-3l-6.5-2l-7.5-0.5l-8.5 1l-8 2.5l-7 5.5l-74 73l-3 5l-1 5.5l1.5 6.5l3 4l-7.5-3l-1-2.5l-0.5-4.5l1-4l1-3.5l3.5-5l75.5-74.5l7.5-5l8-2.5l9.5-1.5l10.5 0.5l8 3l6 5l3.5 6l1.5 6.5l-2 8l-5 9.5l0.5 1.5l3.5-1.5l11.5-1.5l8-0.5l9.5 2l6 2l5.5 3l4.5 5.5zM535 389l-1-4.5l-2-3l-2.5-3l-5-3l-8.5-3l-9-0.5l-7 1l-2.5 1l-4 2.5l-1.5 3.5l0.5 4.5l5 6.5l6.5 4.5l6 2l10.5 1l8-2l2.5-1l2.5-3zM596 414.5l1.5 7l-1 4l-1 1.5l-6 3.5l-16 3l-2 1l-0.5 2l1 7l-0.5 2l-1.5 3.5l-9 8.5l-6.5 3l-6.5 1.5l-5.5 0l-10.5-1l-6.5-1.5l-6-2.5l-5-3.5l-4-4.5l-3-5.5l-1-4.5l1-4l2.5-3l7.5-7l7-3l13.5-2.5l2-1l-1-9l0.5-4l2-3l1.5-1.5l5-2l6.5-1l8.5-0.5l7.5 0.5l9 2l6 3l4.5 3.5l4 4zM592.5 415l-2-3.5l-4-4.5l-3.5-2l-5.5-2.5l-11.5-2.5l-7 0l-6.5 1l-4.5 2l-2 1.5l-2 3l-1 4l3 9.5l-2 1.5l-15.5 1l-7.5 3l-7.5 7l-2 3.5l-1 3.5l0.5 3l2 3.5l4 4.5l4.5 3.5l6 2.5l6.5 1.5l7.5 1l6-0.5l6-1.5l5.5-3.5l6-6l2-3l0.5-4l-2.5-9.5l2-1l15.5-1.5l5-2l3.5-2.5l2-3.5l0-4zM479.5 451.5l-1.5 3.5l-3.5 3l-7.5 2.5l-7 1l-5.5-0.5l-11.5-2.5l-9-4.5l-5-6l-3-6l-0.5-6.5l1-1.5l-1-0.5l7.5-3l11-1.5l11.5 1l9 2l7 4l4.5 4l3 5l0.5 2.5zM430 439.5l0.5 4.5l3 5l6 5l7.5 3.5l9.5 1.5l9.5-1l7-3l2.5-3l0.5-4l-1.5-4l-3.5-5l-5-3.5l-8-3l-9-1l-8.5 0.5l-5 1.5l-3.5 3zM520.5 467l1.5 1.5l0.5 2.5l-1 4l-2.5 3l-6 4.5l-7 2l-5.5-0.5l-7.5-3.5l-4-4l-3-5.5l0.5-3.5l2.5-3l4.5-2.5l3-0.5l7.5 0l7.5 1l6 2zM520 470.5l-2.5-3l-4-2l-6.5-1.5l-5-0.5l-5 0.5l-4.5 2l-2.5 3l-0.5 2l1 2.5l1.5 2.5l4.5 4l5.5 2.5l5 0.5l4-1l5.5-3l3.5-5z"/><path fill="#10c848" d="M799.5 289.5l0.5 2l-0.5 4l-1.5 3.5l-3.5 5l-62 61.5l-6.5 5.5l-7.5 4l-7 1.5l-5.5 0l-8.5-3l-6.5-4l-2.5-3.5l-5-11l-3.5-5l-1.5-1.5l-17-2l-19.5 0l-4.5-1l-4-2l-4.5-3.5l-3.5-5l-2-4l-0.5-4.5l0-4.5l1.5-3.5l1.5-1l5-2.5l5.5-1.5l7-1l12-0.5l1.5-1.5l-5.5-11l-1-4.5l1-4l2-3l5.5-4l5.5-1.5l13.5-2.5l1.5-1l0-2.5l-4-10l-1.5-1l-2.5-0.5l-16-0.5l-5-0.5l-4-1.5l-3.5-2l-8-9l-8.5-7.5l-4-2l-2-0.5l-9.5 1l-10 2.5l-6 4l-10 10l-2.5 3l-1.5 5l1.5 14.5l1 2l3.5 2l20.5 5l7 3.5l4 4l2 3.5l2 6l0 4l-1 3.5l-1 2l-4.5 2l-8.5 2.5l-10.5 1.5l-1.5 1l0.5 2.5l3 5.5l1.5 5l0.5 4.5l-1.5 3.5l-2.5 3l-4 2.5l-5 2l-12 3l-1 1.5l-0.5 2l1 4l2 0.5l15-0.5l8 0l7 1l6.5 2l5.5 3l4 4l8 9.5l4.5 8.5l2 0.5l16 0.5l13.5 3.5l6 2.5l5 3l3 2.5l1.5 4l0 2.5l-1.5 4l-4 6l-36.5 36l-13.5 12.5l-7.5 5l-6 2.5l-7.5 2l-5.5 0l-5-0.5l-6-2.5l-5-3.5l-2.5-3l-3-5l-2.5-8.5l-1-1.5l-3.5 0.5l-9 6.5l-7.5 3l-8 1l-25.5-1.5l2 5.5l0 3l-2 4l-5 6l-7 3.5l-4 1.5l-5.5 0l-4.5-1l-5.5-3l-4-4l-3.5-5l-1.5-6l1-4l3.5-2.5l5.5-1.5l9-0.5l14.5 0.5l-7.5-7.5l-4-6l-2-5l0-6.5l2-3l8.5-8.5l7-3.5l13-2.5l1.5-1.5l0.5-4l-1-4l-1-2l-1.5-1l-18.5-0.5l-7-1.5l-4-1.5l-5-3.5l-13.5-14l-4-2l-18.5 2.5l-8.5 2.5l-4 2.5l-11.5 12l-1.5 3l-1 3l1 5l2 5.5l0 6l1 2l28.5 4.5l5.5 2.5l6.5 5l4 6.5l1.5 5.5l-1 6l-2 3l-1.5 1.5l-8 2.5l-8.5 1.5l-8.5 0l-9.5-1.5l-6-2.5l-7-4l-4.5-4l-6.5-7.5l-1.5-0.5l-3.5 0l-12 5l-9 2l-6-3l10.5-1.5l8-2.5l6-3.5l11-7.5l2.5-3l5.5-10l0.5-4l-0.5-9l2-5l2.5-3.5l11.5-11l4-2.5l5.5-2l14.5-3.5l12-6l2.5 0.5l-0.5 1l0 4.5l2 4l3 4.5l5.5 6l6.5 4.5l9 2.5l11 0l7.5-1.5l4.5-2l1.5-1.5l2.5-5l-0.5-4.5l-1-2.5l-2-3.5l-3-3l-6.5-4.5l-8-3l-10-1l-11 1l-6 1l-3.5 1.5l-0.5-1.5l4.5-8l2-5.5l0.5-6l-1.5-4.5l-3.5-6l-4.5-4l-5.5-2.5l-6.5-2l-8 0l-9.5 1.5l-8 2.5l-7.5 5l-75.5 74.5l-3.5 5l-1.5 5.5l0 4l1 5l-5.5-3l-0.5-4l1-4l2.5-5l3.5-4.5l74-73.5l6.5-5.5l6.5-3l8-2.5l12-1.5l8 0.5l8.5 2.5l6.5 4.5l4 4.5l1.5 3.5l2 7l-0.5 11l1 2l4 1l20.5 1.5l-0.5-2l-4.5-6.5l-2.5-5l0-4.5l2.5-5l5.5-4l10.5-3.5l1-1.5l4.5-10.5l9-8.5l5-2l10.5-1.5l1.5-1.5l-1-2.5l-1.5-2.5l-3-2.5l-5-1l-12 1l-7.5-1l-10.5-3l-9.5-4.5l-6-5l-3-3.5l-1.5-5l1-6l1.5-3l3.5-5l59.5-58.5l6.5-5.5l7-3.5l6.5-1l8.5-0.5l7 1l8.5 3l7.5 3.5l6 5l4.5 5l3 6.5l3 2.5l21.5 3.5l8 3l5.5 3l7.5 6.5l5 8.5l3 2.5l21 1.5l11 2.5l7.5 3.5l7 4.5l4 4l7.5 9l2 0.5l16-2l13 1l8.5 3l5.5 2.5l4.5 3.5zM795.5 287.5l-4.5-4l-5.5-2.5l-6-2l-7.5-1l-6.5 0l-6.5 1.5l-7.5 2.5l-6 3.5l-3.5 3l-5.5 7.5l-7 7.5l-13.5 13l-17 17l-12.5 11.5l-1 3.5l0 4.5l4.5 11.5l2.5 3.5l3 2.5l5.5 2.5l4.5 1.5l5 0l4-0.5l5-1.5l8-5l65-64.5l3.5-5l1-3.5l0-3zM575 394.5l-0.5-2l-5.5-9.5l-2-8.5l-1.5-2l-2-0.5l-11.5 0.5l-13-0.5l-4 0.5l7 10l3.5 10l1.5 1.5l5 0.5l19.5 0.5zM629.5 390l-0.5-4.5l-1-2.5l-6.5-8l-6-5l-8-3l-12.5-1.5l-11.5 1.5l-7 3l-2 1.5l-1.5 3l-0.5 6.5l2 5l2.5 3l7.5 6.5l8 3l12 2l6.5 0l7-1l7.5-3l3-3zM678.5 404l-5-4l-5.5-2.5l-6-2l-7-1.5l-11 0.5l-5.5 1.5l-7 3.5l-15 16l-17 15.5l-14.5 16.5l-2 5l0 4.5l1 4.5l2 4l2.5 3l4.5 3.5l6 2l5 1l6-0.5l5-1l4.5-2l6.5-3.5l6.5-5.5l43-43l3.5-5l1-3.5l0.5-3.5zM520.5 467l-3-2.5l-6-2l-7.5-1l-7.5 0l-3 0.5l-4.5 2.5l-2.5 3l-0.5 3.5l3 5.5l4 4l7.5 3.5l5.5 0.5l7-2l6-4.5l2.5-3l1-4l-0.5-2.5zM479.5 451.5l0-4l-0.5-2.5l-3-5l-4.5-4l-7-4l-9-2l-11.5-1l-11 1.5l-7.5 3l1 0.5l-1 1.5l0.5 6.5l3 6l5 6l9 4.5l11.5 2.5l5.5 0.5l7-1l7.5-2.5l3.5-3zM677 240.5l-8-6l-10-4l-9.5-1l-14.5 0.5l-2-1l-1-2l-1.5-8l-3-6l-6.5-5l-9-4.5l-9-2l-11 0l-8 2.5l-6 3.5l-61 60l-4 4.5l-1.5 3.5l-1 6l1 4.5l2.5 3.5l5.5 4.5l9 4l10.5 2.5l8.5 0l13.5-3l3 0l1.5 1l6 10.5l8 8l-15-1l-5 0.5l-6 1l-4 2.5l-5 4.5l-2 3l-1 3.5l-1 6l-1 1.5l-13 4.5l-3.5 3l-1 1.5l-1 3.5l0 2.5l3 5.5l4 4.5l3.5 2l6 2.5l4.5 1l7.5 0.5l6 0l4-1l5-2l1.5-1l2.5-3l1-8l1-1.5l2.5-1l10.5-2l5-1.5l5.5-4l2-3.5l0-4l-2-6l-5-6l-6.5-6.5l12 0.5l9-0.5l7-2l5-4l1.5-3.5l-0.5-6l-3.5-5l-4.5-3.5l-10-4l-9.5-1.5l-10.5-0.5l-2-0.5l-1.5-1.5l3.5-9.5l0.5-8l1.5-6l3.5-4.5l11.5-11.5l4-2.5l6.5-2.5l19-5l2 1l5.5 8l13 12l3.5 2l4.5 1l11 0.5l6.5-1l6-2l3.5-2.5l1-3.5l-0.5-4.5l-1.5-4.5zM740 272.5l-4-5.5l-4.5-3.5l-5.5-3l-8-3l-7-1.5l-9-0.5l-7.5 0.5l-6 1.5l-4.5 2.5l-1 1.5l-1.5 5.5l1.5 6l4 9l-1.5 1.5l-16.5 1l-7.5 2.5l-3.5 3l-2 3l-0.5 4l0.5 2.5l2.5 5.5l4 4.5l5 3.5l5.5 2.5l7 1.5l8 0.5l6.5-0.5l6.5-1.5l6-3l2.5-3.5l0.5-1.5l-0.5-6l-3-8.5l1.5-1.5l13 0l7.5-1l6-1.5l4.5-2l1.5-1.5l1.5-3.5l-0.5-4.5zM597 416l-3-5.5l-4-4l-4.5-3.5l-6-3l-9-2l-7.5-0.5l-8.5 0.5l-6.5 1l-5 2l-1.5 1.5l-2 3l-0.5 4l1 9l-2 1l-13.5 2.5l-7 3l-7.5 7l-2.5 3l-1 4l1 4.5l3 5.5l4 4.5l5 3.5l6 2.5l6.5 1.5l10.5 1l5.5 0l6.5-1.5l6.5-3l9-8.5l1.5-3.5l0.5-2l-1-7l0.5-2l2-1l16-3l6-3.5l1-1.5l1-4zM619 405l-1.5-1l-19-1l-3.5 0.5l0 2.5l8.5 12l2 0.5l4-2l4.5-4l4-4.5zM682.5 338.5l-0.5-4l-1-2.5l-4-6.5l-6-5l-7.5-3.5l-12-1.5l-10 0.5l-8 2.5l-3 3l-2 3l-0.5 5.5l2.5 5.5l6 5.5l5.5 3l7.5 1l24 0l5.5-1.5l2-1.5zM728.5 296.5l-1.5-1.5l-5-0.5l-6.5 0.5l-1.5 1.5l-0.5 2l3 7l2 0.5l3.5-1.5l4.5-4.5zM586.5 437.5l-1.5-1.5l-5.5 0.5l-2 1l-0.5 2l1 3.5l1.5 1l5-3.5zM703.5 321l-1.5-1l-18 0.5l-3 0.5l0 2.5l6 8.5l1.5 1.5l2 0.5l4.5-2l3-3l4-4.5z"/><path fill="#68d028" d="M802.5 289l0.5 4l-1.5 3.5l-3 5l-3.5 4.5l-62.5 62l-8.5 6.5l-4 2l-4.5 1.5l-5.5 0.5l-5.5-0.5l-8-3l-5.5-3l-4-4.5l-4-9.5l-4-4l-3-2.5l-11.5-2.5l-7-1l-18.5 1.5l-5-0.5l-5.5-3l-4-4l-3.5-5l-4.5-9l-1.5-1.5l-2-0.5l-5 0l-3 0.5l-1.5 1.5l0 2l3.5 10l0 6l-2 3.5l-3 3l-9.5 4.5l1.5 1.5l17 2.5l8 2.5l3.5 2.5l7 9.5l10.5 11.5l4 1.5l18.5 3.5l10 3.5l10 6l2.5 3.5l1 2.5l-0.5 3l-1 2.5l-5.5 8l-43 43l-10 8l-12 6.5l-8 3l-6.5 0.5l-5.5 0l-4-1.5l-7.5-3.5l-4-4.5l-4.5-6.5l-1.5-1l-2-1l-8.5 2l-7 1l-22-1.5l-3.5 0.5l-1.5 1.5l-4 8.5l-4 4.5l-3.5 2.5l-8.5 4.5l-3.5 1l-6 0.5l-6.5-2l-6.5-4.5l-5-6l-5-9l-2-0.5l-22 0l-12-2l-4-1.5l-5-3l-9-8l-3.5-2l-2.5 0l-14 3.5l-6.5-3l9-2l12-5l3.5 0l1.5 0.5l6.5 7.5l4.5 4l7 4l6 2.5l9.5 1.5l10-0.5l10-1.5l5-2l1.5-1.5l2.5-5l0-6l-3-7l-5-5.5l-5-3.5l-4-1.5l-9.5-2l-17-2l-2-0.5l-1-2l0-6l-2-5.5l-1-5l1-3l1.5-3l13.5-13l6.5-3l7-1.5l15.5-2l2.5 1l5.5 5l9.5 10l5 3.5l4 1.5l7 1.5l18.5 0.5l1.5 1l1 2l1 6.5l-0.5 1.5l-1.5 1.5l-13 2.5l-5 2l-3.5 2.5l-5.5 6l-3.5 4.5l0 6.5l2 5l4 6l7.5 7.5l-14.5-0.5l-9 0.5l-5.5 1.5l-2 1l-2 3.5l-0.5 4l0.5 2.5l4.5 6.5l6 5l3.5 2l4.5 1l5.5 0l4-1.5l5-2.5l5-4l2-3l2-4l0-3l-2-5.5l25.5 1.5l8-1l7.5-3l9-6.5l3.5-0.5l1 1.5l2.5 8.5l3 5l2.5 3l5 3.5l6 2.5l5 0.5l5.5 0l7.5-2l8-3.5l9-6.5l45-44.5l5.5-7.5l1.5-6l-0.5-2l-1-2.5l-6.5-4.5l-7.5-3.5l-8.5-2.5l-10-1.5l-11 0l-2-0.5l-4.5-8.5l-8-9.5l-4-4l-5.5-3l-6.5-2l-10-1l-20 0.5l-2-0.5l-0.5-2l0-4l1-1.5l12-3l5-2l4-2.5l2.5-3l1.5-3.5l-0.5-4.5l-1.5-5l-3-5.5l-0.5-2.5l1.5-1l10.5-1.5l8.5-2.5l4.5-2l1.5-3.5l0.5-6l-1.5-5l-2.5-4.5l-4-4l-3.5-2l-6-2.5l-20-4.5l-1.5-1.5l-1-2l0-5l-1.5-7l0-4l1.5-3.5l12.5-13l4-2.5l4.5-2.5l11-2l8 0l4 2l7.5 6l9 10.5l3.5 2l4 1.5l5 0.5l16 0.5l2.5 0.5l1.5 1l4 10l0 2.5l-1.5 1l-13.5 2.5l-5.5 1.5l-5.5 4l-2 3l-1 4l1 4.5l5.5 11l-1.5 1.5l-12 0.5l-7 1l-5.5 1.5l-5 2.5l-1.5 1l-1.5 3.5l0 6.5l1.5 5l3.5 5l4 4l5.5 3l4.5 1l19.5 0l17 2l1.5 1.5l3.5 5l5 11l2.5 3.5l5 3.5l5.5 2l7 1.5l6-0.5l5-1.5l8-5l5-4l53.5-53l11-12l3-6l-0.5-5.5l-3.5-4.5l-7-4.5l-8-3l-9.5-1.5l-8.5 0.5l-13 1.5l-2-0.5l-10-12l-5-3.5l-5-3l-8-3l-7-1.5l-23-2l-3-2.5l-3.5-6.5l-3-3.5l-4.5-4l-5-3l-5.5-2.5l-6.5-2l-19.5-3l-3-2.5l-3-6.5l-4.5-5l-4.5-4l-7-4l-8-3l-9.5-1.5l-8.5 0.5l-6.5 1l-7 3.5l-6.5 5.5l-59.5 58.5l-3.5 5l-1.5 3l-1 6l1.5 5l3 3.5l6 5l9.5 4.5l10.5 3l7.5 1l12-1l5 1l3 2.5l1.5 2.5l1 2.5l-1.5 1.5l-10.5 1.5l-5 2l-9 8.5l-4.5 10.5l-1 1.5l-10.5 3.5l-5.5 4l-2.5 5l0 4.5l2.5 5l4.5 6.5l0.5 2l-20.5-1.5l-4-1l-1-2l0.5-11l-2-7l-1.5-3.5l-4-4.5l-6.5-4.5l-8.5-2.5l-8-0.5l-9 0.5l-8.5 2.5l-7 3l-7 5l-75.5 75l-3.5 4.5l-2.5 5l-1 4l0.5 4l-5.5-2.5l2-7l3.5-5l3.5-4.5l75.5-74.5l6.5-5.5l9-5l10.5-3l10.5-1l10.5 0.5l8 3l5 3l3 2.5l5.5 8.5l4 6.5l0.5 2.5l-0.5 6l0.5 2.5l1.5 1l2 0.5l2-1l-2.5-6l-1.5-4l0.5-2l3-5l5-4l10.5-3.5l4-2.5l6-10l8-9l5-4l0-2l-11.5-2l-8.5-3l-11.5-4.5l-9-5l-4.5-4l-3.5-4.5l-1-4.5l1-5l3-5l4-4.5l60.5-60l7-5.5l7-3l8-1.5l8 0l9.5 2l8.5 2.5l7 3.5l6.5 5l12 12.5l4.5 1.5l16 3.5l9.5 4l10 6.5l8 8.5l3 2.5l4.5 1.5l17 2l12.5 4l10.5 6l10 9.5l3.5 2l19 0l7.5 1.5l8.5 2.5l5.5 2.5l5.5 3l2.5 3zM449.5 390l-10.5 10l-2 3l-1 2l0.5 5l7 12.5l6 2l19.5 3l6.5 2l6 5l3.5 4.5l3 5.5l2 8.5l1.5 2l4.5 0.5l6 0l1.5-1.5l-6.5-10.5l-2-5.5l0-4.5l1-3.5l10-10.5l6.5-3l12.5-3l1.5-1l-0.5-2.5l-2.5-1.5l-15-1l-8.5-2.5l-5-3.5l-8.5-11l-4.5-3.5l-4-1.5l-13-0.5l-6.5 0.5l-5.5 2zM585 261l-2 4l0 5l6 11l1.5 1l4 2l17.5 4l6 2.5l3 2.5l2.5 3l5.5 11l1.5 1.5l2 0.5l5.5 0l9-1l1.5-1.5l-3.5-10l-0.5-4.5l2-5.5l2.5-2.5l4-2.5l5.5-2l12-2.5l1.5-1.5l-1.5-4l-3.5-2l-18-1.5l-6-2l-2.5-3l-3-5.5l-4-4.5l-7.5-6l-6-2.5l-5-0.5l-5.5 0.5l-9.5 2.5l-3.5 2.5zM728.5 296.5l-2 3.5l-4.5 4.5l-3.5 1.5l-2-0.5l-3-7l0.5-2l1.5-1.5l6.5-0.5l5 0.5zM703.5 321l-1.5 3.5l-4 4.5l-3 3l-4.5 2l-2-0.5l-1.5-1.5l-6-8.5l0-2.5l3-0.5l18-0.5zM575 394.5l-3.5 0.5l-19.5-0.5l-5-0.5l-1.5-1.5l-3.5-10l-7-10l4-0.5l13 0.5l11.5-0.5l2 0.5l1.5 2l2 8.5l5.5 9.5zM547 377.5l0 2l5 9.5l5.5 1.5l4.5 0.5l3-1l0.5-2l-1-2.5l-4-7.5l-2-1l-4.5-0.5l-5 0zM619 405l-1 3l-4 4.5l-4.5 4l-4 2l-2-0.5l-8.5-12l0-2.5l3.5-0.5l19 1zM586.5 437.5l-2 3l-5 3.5l-1.5-1l-1-3.5l0.5-2l2-1l5.5-0.5z"/><path fill="#c0e860" d="M805.5 288l0.5 4.5l-1 3.5l-3 5l-4 4.5l-63.5 63l-8.5 7l-6 3.5l-6 1.5l-6.5 0l-6.5-2l-8-3l-6.5-4.5l-4-9.5l-4-4.5l-6.5-4.5l-11-3l-6 0l-7 0.5l-16.5 5.5l-3.5 2.5l-1 1.5l0.5 4.5l2.5 7.5l4 5l7.5 6.5l5 3l23.5 7l9.5 4l5 3.5l3 2.5l1.5 3.5l0 2l-2 5.5l-7.5 9l-43.5 43.5l-11.5 9l-8 5l-9 4l-7.5 2.5l-5.5 0l-7-1.5l-5.5-2.5l-7-4l-6-5l-4-2l-25.5-4.5l-6.5 0l-2 1l-8.5 11l-6.5 5.5l-11 5.5l-14 4l-10-4.5l-8.5-14.5l-2.5-2l-5-1l-21.5 0.5l-42-19l14-3.5l2.5 0l3.5 2l9 8l5 3l4 1.5l12 2l22 0l2 0.5l5 9l5 6l6.5 4.5l6.5 2l6-0.5l3.5-1l8.5-4.5l3.5-2.5l4-4.5l4-8.5l1.5-1.5l3.5-0.5l22 1.5l7-1l8.5-2l2 1l1.5 1l4.5 6.5l4 4.5l7.5 3.5l4 1.5l5.5 0l6.5-0.5l8-3l12-6.5l10-8l43-43l5.5-8l1-2.5l0.5-3l-1-2.5l-2.5-3.5l-10-6l-10-3.5l-18.5-3.5l-4-1.5l-10.5-11.5l-7-9.5l-3.5-2.5l-8-2.5l-17-2.5l-1.5-1.5l9.5-4.5l3-3l2-3.5l0-6l-3.5-10l0-2l1.5-1.5l3-0.5l5 0l2 0.5l1.5 1.5l4.5 9l3.5 5l4 4l5.5 3l5 0.5l18.5-1.5l7 1l11.5 2.5l3 2.5l4 4l4 9.5l4 4.5l5.5 3l6.5 2.5l6.5 1l4.5 0l5.5-1.5l4.5-2.5l10-8l61-60.5l5-6l2.5-5l0.5-4l-1-4l-4-4.5l-5.5-3l-7.5-3.5l-9-2l-8-1l-16 0l-3.5-2l-10-9.5l-10.5-6l-12.5-4l-17-2l-4.5-1.5l-3-2.5l-8-8.5l-10-6.5l-9.5-4l-16-3.5l-4.5-1.5l-12-12.5l-4.5-3.5l-7-4l-10.5-3.5l-9.5-2l-8 0l-8 1.5l-7 3l-7 5.5l-60.5 60l-4 4.5l-3 5l-1 5l1 4.5l3.5 4.5l4.5 4l9 5l11.5 4.5l8.5 3l11.5 2l0 2l-5 4l-8 9l-6 10l-4 2.5l-10.5 3.5l-5 4l-3 5l-0.5 2l1.5 4l2.5 6l-2 1l-2-0.5l-1.5-1l-0.5-2.5l0.5-6l-0.5-2.5l-4-6.5l-5.5-8.5l-3-2.5l-5-3l-8-3l-10.5-0.5l-10.5 1l-10.5 3l-9 5l-6.5 5.5l-75.5 74.5l-3.5 4.5l-3.5 5l-2 7l-5-2l5-8.5l6.5-7.5l73.5-73l10-8l9.5-6.5l12.5-5l6-1l6.5 0l7 0.5l9 2.5l7 4l8.5 5.5l3.5 1.5l5.5 0.5l6.5-0.5l5-2l3.5-2.5l9-11l1.5-4l-0.5-2l-5-3.5l-22.5-10.5l-10-6.5l-4.5-4l-2-3.5l0-2.5l1-3.5l4-6.5l5.5-6l60.5-60l8.5-7l7.5-3.5l7-1.5l10.5 1l9 1.5l10.5 3.5l12 7l15 13l4 1.5l15 4l10 4l8.5 5.5l14 11l4 1.5l18 4l10.5 3.5l9 4.5l14.5 10.5l22 3l12.5 3.5l11 5.5l4.5 4zM585 261l11.5-11.5l3.5-2.5l9.5-2.5l5.5-0.5l5 0.5l6 2.5l7.5 6l4 4.5l3 5.5l2.5 3l6 2l18 1.5l3.5 2l1.5 4l-1.5 1.5l-12 2.5l-5.5 2l-4 2.5l-2.5 2.5l-2 5.5l0.5 4.5l3.5 10l-1.5 1.5l-9 1l-5.5 0l-2-0.5l-1.5-1.5l-5.5-11l-2.5-3l-3-2.5l-6-2.5l-17.5-4l-4-2l-1.5-1l-6-11l0-5zM636 263l-1-4.5l-1.5-2.5l-2.5-3l-9-5l-9-2l-5.5 0l-6 1.5l-3.5 2.5l-11.5 11.5l-1.5 3.5l-0.5 2l1 3.5l8 8.5l5.5 3l9.5 2l17.5-0.5l2-1l7-7l1-4zM547 377.5l2-1l5 0l4.5 0.5l2 1l4 7.5l1 2.5l-0.5 2l-3 1l-4.5-0.5l-5.5-1.5l-5-9.5zM449.5 390l3.5-2.5l5.5-2l6.5-0.5l13 0.5l4 1.5l4.5 3.5l8.5 11l5 3.5l8.5 2.5l15 1l2.5 1.5l0.5 2.5l-1.5 1l-12.5 3l-6.5 3l-10 10.5l-1 3.5l0 4.5l2 5.5l6.5 10.5l-1.5 1.5l-6 0l-4.5-0.5l-1.5-2l-2-8.5l-3-5.5l-3.5-4.5l-6-5l-6.5-2l-19.5-3l-6-2l-7-12.5l-0.5-5l1-2l2-3zM490.5 404.5l-1-5l-2-4l-2.5-3l-3.5-2l-6-2l-15-2l-6 1.5l-4 2.5l-11.5 11.5l-1 4l1 4.5l11 11l6.5 2l8 0.5l11.5-1.5l4.5-2l7.5-7l2.5-3z"/><path fill="#fff068" d="M809 287.5l0.5 4l-1.5 4l-3 5l-5 6l-63.5 63l-10 8l-6 3.5l-6 1.5l-6 0l-7-1.5l-10-4l-5-3l-3-3l-2.5-8l-2.5-3.5l-8.5-5l-10.5-3.5l-5.5 0l-6.5 1l-6.5 3.5l-7 5l-1.5 3.5l0 4.5l1 3l2.5 3l8 6l5 3l22.5 8l13 6.5l6 5l1.5 3l0 2l-1 4l-2 3l-7.5 9l-45 44.5l-13.5 11l-17.5 10.5l-6 1.5l-4 0l-6.5-1.5l-8-3l-16-9l-8-3.5l-12.5-4l-7.5-1l-3.5 0.5l-1.5 1l-8 9.5l-6.5 5l-19.5 12.5l-7-3.5l14-4l11-5.5l6.5-5.5l8.5-11l2-1l6.5 0l25.5 4.5l4 2l6 5l7 4l5.5 2.5l7 1.5l5.5 0l7.5-2.5l9-4l8-5l11.5-9l43.5-43.5l7.5-9l2-5.5l0-2l-1.5-3.5l-3-2.5l-5-3.5l-9.5-4l-23.5-7l-5-3l-7.5-6.5l-4-5l-2.5-7.5l-0.5-4.5l1-1.5l3.5-2.5l16.5-5.5l7-0.5l6 0l11 3l6.5 4.5l4 4.5l4 9.5l6.5 4.5l8 3l6.5 2l6.5 0l6-1.5l8-5l9.5-8l59-59l5.5-6l3.5-7l0.5-4l-1.5-4.5l-3.5-3.5l-6.5-4.5l-8-3l-8.5-2.5l-24-3.5l-14.5-10.5l-9-4.5l-10.5-3.5l-18-4l-4-1.5l-14-11l-8.5-5.5l-10-4l-15-4l-4-1.5l-13-11.5l-12.5-7.5l-10-3.5l-11-2.5l-10.5-1l-7 1.5l-7.5 3.5l-8.5 7l-60.5 60l-5.5 6l-4 6.5l-1 3.5l0 2.5l2 3.5l4.5 4l10 6.5l22.5 10.5l5 3.5l0.5 2l-1.5 4l-9 11l-3.5 2.5l-5 2l-6.5 0.5l-5.5-0.5l-3.5-1.5l-8.5-5.5l-7-4l-9-2.5l-7-0.5l-6.5 0l-6 1l-12.5 5l-9.5 6.5l-10 8l-73.5 73l-6.5 7.5l-5 8.5l-4-2l13-15l75-74.5l14.5-12.5l16.5-11l5-2l3 0l9.5 1.5l12.5 4l17 8l6 2l8.5 0l5.5-2l6.5-7.5l1-3.5l-0.5-2l-4.5-4l-20.5-9.5l-14-8.5l-4-4.5l-1-2.5l1-4l3-4.5l8-9l63.5-63.5l10-8l5-2.5l4-1.5l6.5-0.5l9.5 1l11 3l10.5 3.5l12.5 7l16 11.5l28 10.5l9 5l14.5 10l21.5 6.5l10 3.5l7.5 4l13.5 8.5l3.5 1.5l25 6l14 5l8.5 5.5l2.5 3zM633.5 256l1.5 2.5l1 4.5l0 10.5l-6.5 7.5l-3.5 2.5l-17.5 0.5l-9.5-2l-3.5-2l-8.5-8l-2-3.5l-0.5-2.5l1-3l2-3l10.5-10l6-3.5l6.5-0.5l9.5 1.5l9 4.5zM629.5 254.5l-7.5-4l-8-2.5l-5-0.5l-5.5 1l-4.5 2l-10 10l-2 3.5l-0.5 3l2 3.5l13 9l6.5 1.5l6.5-0.5l5-2l3.5-2.5l5.5-6l3-4.5l1-4l0-2l-1.5-2.5zM490.5 404.5l0 6l-2.5 3l-7.5 7l-4.5 2l-11.5 1.5l-8-0.5l-6.5-2l-11-11l-1-4.5l1-4l11.5-11.5l4-2.5l6-1.5l15 2l6 2l3.5 2l2.5 3l2 4zM486 400l-2-4l-1.5-1.5l-3-2l-15.5-4l-5.5 0l-4.5 1.5l-3.5 2.5l-10 10l-0.5 4l0.5 2.5l14.5 10.5l4 1l6 0l6-2l4-2.5l9.5-10l1.5-4zM443.5 473l21.5-0.5l5 1l2.5 2l8.5 14.5z"/><path fill="#f8c848" d="M813.5 286.5l0 3l-1.5 5.5l-4.5 6.5l-5 6l-63.5 63l-9.5 8.5l-8 4.5l-6 1.5l-7 0l-8.5-2.5l-10-4l-5.5-3l-4-4l-2-7.5l-1.5-2.5l-9-5l-9.5-3.5l-5 0l-5.5 1.5l-9 6.5l-2 3l-1 2l0.5 2.5l2 3.5l17 10.5l19.5 8l13 6.5l5 3.5l1.5 2.5l1.5 2.5l-0.5 4l-3.5 7l-6.5 7.5l-45 44.5l-11 9.5l-19.5 14l-4 2.5l-6 1l-11.5-2.5l-14-5l-21.5-11.5l-8.5-3l-6.5-1.5l-3.5 0.5l-1.5 1.5l-11.5 11.5l-20 14l-3.5-1.5l21.5-13.5l4.5-4l8-9.5l2.5-1.5l3 0l5 0.5l12.5 4l8 3l18 10l8 3l6.5 1.5l4 0l6-1.5l17.5-10.5l13.5-11l45-44.5l7.5-9l2-3l1-4l0-2l-1.5-3l-6-5l-13-6.5l-22.5-8l-5-3l-8-6l-2.5-3l-1-3l0-4.5l1.5-3.5l7-5l6.5-3.5l6.5-1l5.5 0l10.5 3.5l8.5 5l2.5 3.5l2.5 8l3 3l5 3l10 4l7 1.5l6 0l6-1.5l6-3.5l10-8l61-60l7.5-9l3-5l1.5-4l-0.5-4l-2.5-5l-5-4l-7-3.5l-14-5.5l-23-5l-3.5-1.5l-13.5-8.5l-7.5-4l-10-3.5l-21.5-6.5l-14.5-10l-9-5l-28-10.5l-18-12.5l-12.5-6.5l-10.5-3.5l-11-3l-7.5-0.5l-6.5 0.5l-4 1.5l-5 2.5l-10 8l-63.5 63.5l-8 9l-3 4.5l-1 4l1 2.5l4 4.5l14 8.5l20.5 9.5l4.5 4l0.5 2l-1 3.5l-6.5 7.5l-5.5 2l-8.5 0l-6-2l-17-8l-12.5-4l-9.5-1.5l-3 0l-5 2l-14.5 10l-13.5 10.5l-78 77.5l-13 15l-3.5-1.5l14-14.5l75-75l25-22l7-5l3-2l4-1l5 0.5l14.5 4.5l25.5 11l6.5 1l3.5-0.5l2-1.5l5-6l0.5-2l-1.5-1.5l-5-3.5l-18.5-9l-14-8l-4-4.5l-0.5-2l1-3l3-5l9.5-10.5l65-64.5l13-11l4-2.5l5-1.5l7.5-1l7 1.5l12.5 3.5l12 5l11 5.5l19 11.5l27.5 11l26.5 15l28.5 10l25.5 13.5l25.5 7.5l11.5 5l10.5 6.5l2.5 2.5zM629.5 254.5l1.5 2.5l1.5 2.5l0 2l-1 4l-3 4.5l-5.5 6l-3.5 2.5l-5 2l-6.5 0.5l-6.5-1.5l-13-9l-2-3.5l0.5-3l2-3.5l10-10l4.5-2l5.5-1l5 0.5l8 2.5zM629.5 260l-2-3.5l-3.5-2l-12-4.5l-5-1l-3 1l-3.5 1.5l-10 10l-2 3.5l0.5 2l1.5 1.5l11.5 7.5l4 2l5.5 0l3.5-1.5l4-2l9.5-10.5zM486 400l0 2l-1.5 4l-9.5 10l-4 2.5l-6 2l-6 0l-4-1l-14.5-10.5l-0.5-2.5l0.5-4l10-10l3.5-2.5l4.5-1.5l5.5 0l15.5 4l3 2l1.5 1.5zM481.5 400.5l-0.5-2.5l-2-2.5l-17-5.5l-3 0l-5.5 2l-10 10l-1.5 3l0.5 2l1.5 1.5l11.5 7.5l4 1.5l3 0l4-1l4-2.5l10-10zM545.5 496l2-3l4.5-2l6-0.5l5 0.5l6 2l3.5 2.5l2.5 4l0 4l-2 3l-5 2l-6.5 0.5l-5-1l-5.5-2.5l-3.5-2l-2-3.5z"/><path fill="#ff9c10" d="M818.5 284l0.5 4l-1.5 5.5l-3 5l-6 7.5l-66.5 66l-14.5 12.5l-6.5 3l-8 1.5l-5.5-0.5l-9.5-1.5l-13-5.5l-3.5 0l-4.5-1.5l-2.5 3l11 5.5l3 3l5 3l4 4l2.5 3.5l1 4l0 2l-1.5 3.5l-4.5 6.5l-6.5 7l-45 44.5l-10.5 10l-21.5 17.5l-4 2l-3.5 0.5l-10.5-0.5l-3.5 0.5l-1.5 1.5l-2 5.5l-2 3.5l-3 2.5l-5 2l-5.5 1.5l-6 0.5l-5-0.5l-7-1.5l-6-2.5l-6.5-4l-4-4.5l-2-3.5l-1-5l2.5-5l3-3l8.5-4.5l0.5-2l-3-2l-6.5-2l-4 1.5l-9.5 9l-13 9l-6.5 5l-4-1.5l20-14l11.5-11.5l1.5-1.5l3.5-0.5l6.5 1.5l8.5 3l21.5 11.5l14 5l11.5 2.5l6-1l4-2.5l19.5-14l11-9.5l45-44.5l6.5-7.5l3.5-7l0.5-4l-1.5-2.5l-1.5-2.5l-5-3.5l-13-6.5l-19.5-8l-17-10.5l-2-3.5l-0.5-2.5l1-2l2-3l9-6.5l5.5-1.5l5 0l9.5 3.5l9 5l1.5 2.5l2 7.5l4 4l5.5 3l10 4l8.5 2.5l7 0l6-1.5l8-4.5l8-7l62-61.5l9.5-10.5l3-5l1-3.5l0.5-5l-3-5.5l-6.5-4.5l-7.5-4l-11.5-4.5l-23.5-7l-25.5-13.5l-28.5-10l-26.5-15l-27.5-11l-20.5-12.5l-13.5-6.5l-10-3.5l-13-3.5l-7.5-1l-4.5 1l-5 1.5l-4 2.5l-13 11l-65 64.5l-9.5 10.5l-3 5l-1 3l0.5 2l4 4.5l14 8l18.5 9l5 3.5l1.5 1.5l-0.5 2l-5 6l-2 1.5l-3.5 0.5l-6.5-1l-25.5-11l-14.5-4.5l-5-0.5l-4 1l-3 2l-7 5l-25 22l-75 75l-14 14.5l-3-1.5l89-89l27-25.5l5-4l5-3l13.5-3.5l5.5-5.5l-1-7l2-5.5l7.5-9l76.5-76l11-9.5l6-3.5l4.5-2l6-0.5l4.5 1l12.5 4l16 6l31 16l29 12.5l25.5 13l29.5 12l26 13l36 14l12 7l3 2.5zM545.5 496l0 4l2 3.5l3.5 2l5.5 2.5l5 1l6.5-0.5l5-2l2-3l0-4l-2.5-4l-3.5-2.5l-6-2l-5-0.5l-6 0.5l-4.5 2zM641.5 364l-1 3l1 2l1.5 1l17.5 7.5l5-0.5l2-1l7.5-9l0-2.5l-2-2l-9.5-4.5l-8-3l-3 0.5l-3.5 1.5zM607 249l5 1l12 4.5l3.5 2l2 3.5l-1 4l-9.5 10.5l-4 2l-3.5 1.5l-5.5 0l-4-2l-11.5-7.5l-1.5-1.5l-0.5-2l2-3.5l10-10l3.5-1.5zM625.5 260.5l-1.5-3l-14-5.5l-4.5-0.5l-4 2l-9 9l-1 2l1 2l14 8l4 0l3-0.5l1.5-1.5l10-10zM481.5 400.5l-1 3.5l-10 10l-4 2.5l-4 1l-3 0l-4-1.5l-11.5-7.5l-1.5-1.5l-0.5-2l1.5-3l10-10l5.5-2l3 0l17 5.5l2 2.5zM457 392.5l-2.5 2l-7 7l-2.5 3l1 1.5l14.5 7.5l4 0l11.5-11.5l0.5-2l-1-1l-15.5-6.5z"/><path fill="#f05010" d="M830.5 283.5l0 3l-2 5.5l-4.5 6.5l-6.5 7.5l-78 77.5l-10 8l-10.5 5.5l-4.5 4.5l-2.5 3l-2 5.5l-2 3l-6.5 8l-78 77l-2.5 3.5l-0.5 1.5l0.5 1.5l3 2.5l-33 33l-85.5-39l6.5-5l13-9l9.5-9l4-1.5l6.5 2l3 2l-0.5 2l-8.5 4.5l-3 3l-2.5 5l1 5l3 5l4.5 4l5 3l8.5 3l11 1.5l10-2l5-2l3-2.5l2-3.5l2-5.5l1.5-1.5l17-0.5l4.5-2l4-2.5l28-25l45-44.5l6.5-7l4.5-6.5l1.5-3.5l0-2l-2.5-6l-3.5-4l-6.5-4.5l-3-3l-11-5.5l2.5-2.5l4.5 1l3.5 0l13 5.5l9.5 1.5l10.5 0l7.5-3l7.5-5l9-8.5l61-60l8-9l4.5-6.5l3-5l0.5-3.5l-0.5-4l-2-3.5l-3-2.5l-6.5-4.5l-7.5-3.5l-34-13l-26-13l-27.5-11l-25.5-13l-29-12.5l-25.5-13.5l-11.5-5l-24.5-8.5l-7.5-1l-5 1l-8.5 5l-11 9.5l-76.5 76l-7.5 9l-2 5.5l1 7l-5.5 5.5l-13.5 3.5l-8 5.5l-29 27l-89 89l-5-2l116-115l6-5.5l10.5-8l6-5.5l5.5-8l7-7.5l82-81.5l14.5-12.5l5.5-3.5l5.5-2l6 0l4.5 1l23.5 9.5l94.5 44l90 40l11 5l7 4.5l4.5 4zM625.5 260.5l-0.5 2l-10 10l-1.5 1.5l-3 0.5l-4 0l-14-8l-1-2l1-2l9-9l4-2l4.5 0.5l14 5.5zM641.5 364l7.5-7l3.5-1.5l3-0.5l8 3l9.5 4.5l2 2l0 2.5l-7.5 9l-2 1l-5 0.5l-17.5-7.5l-1.5-1l-1-2zM457 392.5l3 0l15.5 6.5l1 1l-0.5 2l-11.5 11.5l-4 0l-14.5-7.5l-1-1.5l2.5-3l7-7z"/><path fill="#d80000" d="M850 283l-226 224l-3-2.5l-0.5-1.5l0.5-1.5l2.5-3.5l78-77l6.5-8l5-10l6-6l10.5-5.5l10-8l75-74.5l8.5-9l4.5-6.5l2.5-5l0.5-4l-1-3l-4-4.5l-8.5-5.5l-11-5l-90-40l-94.5-44l-23.5-9.5l-4.5-1l-6 0l-5.5 2l-5.5 3.5l-13 11l-83.5 83l-7 7.5l-5.5 8l-6 5.5l-10.5 8l-6 5.5l-116 115l-2-1l259-257z"/></g><path d="M774 292.5l-4 0l-3 1l-30.5 30l-30 30.5l-0.5 3l1 2l4.5 1.5l3.5-1l1.5-1l61-60.5l0.5-1l-1-2.5l-1-1.5M604 216.5l-2-0.5l-4 0.5l-5 4l-56.5 56l-2 3.5l1 2.5l3 1.5l3 0l3-0.5l3-2l13-13l5.5-8l7-7l11.5-11.5l13.5-11l8.5-8.5l0.5-1.5l-0.5-2.5M567.5 332.5l-2 1.5l2.5 1l1.5-1.5M657 408.5l-4.5 0.5l-2.5 1l-43.5 43l-0.5 2l1.5 2.5l3.5 1.5l3.5-0.5l2.5-1l43-43l1-1.5l-1.5-3M464.5 349.5l-3 0l-4 2l-72 72l-2.5 3l1 2.5l1.5 1.5l3 1l5.5-1l2.5-2l17-17l8.5-13l17.5-17.5l16-11.5l12-11l2.5-3.5l0-2l-1.5-2M566.5 413.5l-1 0.5l0 1.5l3 1.5l2.5-1l-0.5-1.5l-1.5-1M541.5 435.5l-4 0.5l-5.5 6l-1 1.5l2 3l2 1l4.5 0l7.5-7l0-2.5M773.5 290l-4 0.5l-4.5 2l-61 60l-1.5 4l1.5 3l3 2l5 1l5.5-1.5l3-3l59-59l1.5-3.5l-1-2.5l-2-1.5M603.5 214l-6 0.5l-4.5 2l-58 57.5l-3.5 4.5l-0.5 2l2 3.5l3.5 2l5 0.5l5.5-1l3.5-2.5l11-11.5l13.5-17l11.5-11.5l15.5-12l7.5-7l1-3l-0.5-3l-2.5-2M711.5 269.5l-2 0l-3 0.5l-1 1.5l1 3l3.5 2l2.5 0.5l3.5-0.5l2-1.5l0-1.5l-2.5-3M682.5 298l-2 0l-2 1.5l0.5 2l4 2l3-0.5l1-2l-0.5-1M565 329.5l-3 0.5l-1.5 1.5l0 2.5l3 2.5l4 1.5l3 0l2.5-1l1.5-1l0-2.5l-2.5-2.5l-4-1.5M603 380l-6-0.5l-2 1l-0.5 2l2.5 3l2 1l5 0.5l2.5-1l1-2l-1-2M656.5 406.5l-4.5 0l-4.5 2l-43.5 43l-1 4l1 3l3.5 2l3.5 0.5l4.5-0.5l4-2l42-41.5l2-3l0.5-2l-1.5-3l-2-1.5M466.5 347.5l-5.5 0l-4 1.5l-2.5 1.5l-73.5 73l-1 2l0 2.5l2 3l2 1.5l4 1l5 0l5-2.5l17-17l9.5-14.5l4-4.5l11.5-11.5l18.5-12.5l13-13l2-3.5l-0.5-2.5l-2.5-3M569 410.5l-5 0l-2.5 1l-1 1.5l0.5 2.5l1.5 1.5l3.5 2l4.5 0.5l3-0.5l2-1l0-3l-2.5-3M541 433l-4.5 0.5l-2 1l-7 7.5l0 2l2 3l5.5 2.5l5.5 0l4-2l6-5.5l0.5-2.5l-0.5-1.5l-1.5-2l-3.5-2M454.5 442l-2.5-0.5l-3 0.5l-1.5 1.5l0 2l2 1.5l4 1.5l4-0.5l1.5-1.5l-1-2.5M775 288.5l-5.5 0l-4 1.5l-2.5 1.5l-61 60.5l-1.5 2l0 3l2 4l3 2l4.5 1l7-1l4-2.5l55-54.5l6.5-7.5l0.5-4l-0.5-2l-3.5-2.5M603 212.5l-6 0l-6 3l-55 54.5l-7 7.5l-0.5 4l1.5 3l3 2.5l7 1.5l6.5-1l6-3.5l11-12l9-12.5l4-4.5l11.5-11.5l16-11.5l7.5-7l2-4l-1.5-4l-3-2.5M711 267l-5.5 0.5l-2 1l-1.5 1.5l0 2l1 3l5 3l4.5 1l4.5 0l2.5-1l1.5-1.5l0.5-1.5l0-2l-2.5-3l-3.5-2M682 295.5l-5 1l-2 1l-0.5 2l1 2.5l3.5 2.5l4 1l4.5 0l2.5-1l1-1.5l0-2.5l-1-1.5l-3.5-2M655.5 330.5l-1.5-0.5l-2 1l1 1.5l3.5 0.5l1-1.5M567 327.5l-5 0.5l-4 2.5l-0.5 1.5l1.5 3.5l3 2.5l4 1.5l5 0.5l5-1.5l1.5-1.5l0.5-2l-1.5-3l-5-3.5M602.5 377.5l-5.5-0.5l-3 1l-2 1.5l-0.5 1.5l0 2.5l4 3.5l4 1.5l5.5 0.5l4-1.5l1.5-2l0-2l-1-2l-3-2.5M658 405l-5.5 0l-4 1l-3 1.5l-42 42l-2.5 3l-0.5 4l2 3.5l3.5 2l4.5 1l3.5-0.5l5-2l3.5-2.5l42-41.5l1.5-3.5l0-2.5l-1.5-2.5l-2.5-2M468 346l-5-0.5l-3 0.5l-3.5 1l-4 2.5l-73.5 73l-1 2l-0.5 3l1.5 4l5 3l5 1l6.5-1l6-3.5l15.5-16l9-15l4-4.5l11.5-11.5l19-12.5l13.5-12.5l2-3.5l-0.5-4l-2-3M570.5 409l-5-0.5l-4.5 0.5l-2 1.5l-1 1.5l-0.5 2l1 2l2.5 2.5l6 2.5l5 0.5l4.5-1l1.5-1.5l1-1.5l-0.5-2.5l-2.5-3M542.5 431.5l-6 0l-2.5 1l-3.5 2.5l-5.5 6l-0.5 2.5l2.5 3.5l5 3.5l7.5 1l6-1.5l5.5-5.5l2.5-3l0.5-2l-1.5-3l-4-3M454 440l-5.5-0.5l-2.5 1l-1.5 1.5l-0.5 2l1 2.5l4.5 3l4.5 1l4 0l2.5-1l1.5-1.5l0-2l-1-2.5l-3-2M607.5 210.5l-4.5-1l-6.5 0l-5.5 2l-5 4l-59.5 58.5l-2 3.5l-0.5 4l1 2.5l2 3l5.5 3l4.5 1.5l4.5 0l4-0.5l5.5-1.5l5-4l11-12l7-11.5l4.5-6l12-11.5l17-11l5-4l4-4.5l1-3.5l-1-5l-3.5-3.5M775 286l-5.5 0l-6.5 1.5l-3.5 2.5l-58 57.5l-4 4.5l-1 3.5l1 4.5l2.5 3.5l5 3l5 0.5l6.5-1l5.5-3l61-60l2.5-3l1.5-4l0-2l-1-2.5l-4.5-3.5M713.5 264.5l-8-0.5l-3.5 1l-3 1.5l-2 3.5l0 2l1 2.5l4 4.5l8 3l8 0l6-2l2.5-3l0.5-2l-1.5-3l-4-4.5M657 241l-5-0.5l-3 1.5l-1 1.5l0.5 2.5l1.5 1.5l4 2l3.5 0.5l3-1l1.5-1l0.5-2l-2-3M682.5 292.5l-5 0l-3 0.5l-4 2.5l-1 1.5l0 2.5l2 4l5 3.5l6.5 1.5l6.5 0l5-2l1.5-3.5l0-2l-2-3l-5-3.5M652.5 325l-4 0.5l-4 2l-1 2l0.5 2l2 3.5l5 2.5l5 0.5l5.5-0.5l2.5-1l1.5-1.5l0.5-1.5l-0.5-2l-2.5-3l-5.5-3M592.5 302l-3 1l0.5 1.5l2 1l3.5 0l-0.5-2M571.5 325.5l-7-1l-6.5 1.5l-3.5 2.5l-1 2l-0.5 2l1 2.5l4 4.5l5.5 2.5l8 1l6.5-1.5l3.5-2.5l1-2l0-2l-1-2.5l-4-4M600 374.5l-5 0l-3 0.5l-4 2.5l-1.5 3.5l0.5 2.5l1.5 2l5 4l7.5 2l5 0.5l3.5-0.5l4.5-2.5l1.5-3l0-2.5l-2-3l-3-2.5l-3.5-2M544 350.5l-4.5 1l-1.5 1l0 2l2 2.5l3.5 2l4.5 0.5l2.5-1l1.5-1.5l-0.5-3l-3-2.5M658 402l-5.5 0l-3.5 0.5l-7 3.5l-29 29l-15.5 16l-1 3.5l0 2l2 4.5l5 3.5l4.5 1l5.5 0l6.5-2.5l5.5-3.5l43-43.5l1.5-3.5l0-2l-1-3l-3-2.5l-3.5-2M473 344l-7-1.5l-5.5 0l-5.5 1.5l-6 4l-73.5 73l-2 3.5l-0.5 4l1 2.5l2 3l5.5 3.5l4.5 1l4.5 0l8.5-2l6-4l15.5-16l2-3.5l4.5-10.5l5-6l13.5-12.5l14.5-8.5l5.5-3.5l13-13l1.5-3.5l0-5l-2-3M516.5 380.5l-5-1l-4.5 1l-2 1l-0.5 2l0.5 2l1.5 2l3.5 2l4.5 1l4.5-0.5l2-1l1-1.5l0-2.5l-2-2.5M568 406l-8.5 0l-4.5 2.5l-2 3.5l0 2l1.5 3l4.5 4l8 3l8 0l5.5-2l2.5-3l0.5-1.5l-0.5-2.5l-1.5-3l-5-3.5M549 430.5l-9.5-1.5l-4 0l-5.5 1.5l-9 8.5l-1 3.5l1 3l2 2.5l3 2.5l8 3l8 0.5l3-0.5l4-1.5l7.5-7l1.5-3.5l-0.5-3l-2-3.5l-3-2.5M453.5 437l-6 0l-5.5 2l-2.5 3l0 2l1.5 3l4.5 3.5l6 2.5l8.5 0l4.5-2l2-3l0-2l-1.5-3l-5-4M504.5 469l-3.5 1l-1.5 1l0 3l2.5 2.5l4.5 1.5l3 0l2.5-1l1.5-1.5l0.5-2l-2.5-3M779.5 284.5l-7.5-1l-3.5 0l-6 1.5l-6.5 3.5l-60.5 60.5l-1.5 3.5l-0.5 4l1.5 4.5l3 4.5l3 2l6.5 2l5-0.5l4.5-1l7.5-4l59.5-59l5-6l1-3.5l-0.5-4.5l-4.5-4M605 207.5l-9.5-0.5l-5.5 2l-4 2l-62.5 61.5l-3 5l-0.5 2l0.5 3.5l3 5.5l3 2l6 2.5l4.5 1l5.5 0l9.5-2l4.5-2l3-3l9.5-10.5l2-3l4.5-10.5l5-6.5l13.5-12.5l18.5-10.5l7.5-7l1.5-3.5l0-4.5l-2-3.5l-3-2.5l-3-2.5M658 237.5l-7-1l-6.5 1.5l-3 2.5l0 2l0.5 2.5l3.5 4.5l5.5 3l6.5 1.5l7-1l3.5-2.5l1-1.5l0-2l-0.5-2.5l-1.5-2.5l-3.5-2M713.5 262l-5-0.5l-6.5 0.5l-3.5 1l-3.5 2l-2 3l-0.5 2l0 2l1.5 3.5l2.5 3l3.5 2.5l5.5 2.5l4.5 1l5 0.5l5.5-0.5l4.5-1l3-1.5l2.5-3l0.5-2l0-2.5l-2-3.5l-2.5-3l-3-2l-6-3M682 290l-9 0.5l-4 1.5l-2.5 2l-1 1.5l-0.5 3l1.5 3.5l1.5 2l6.5 5l8.5 2l8 0l3-0.5l4-2.5l2-2.5l0.5-2.5l-1-3l-2-3l-6.5-4.5M655.5 322l-9 0.5l-3.5 1l-3 2l-1 2l0 3l0.5 2l2.5 3l5 3.5l7 1.5l9 0l3-1l4-2.5l1-3.5l-0.5-2.5l-2-2.5l-5-3.5M599 298.5l-6.5-1.5l-6.5 0l-4.5 2l-1 2l0 2l2 3.5l5 3.5l7 1.5l4-0.5l4.5-2l1.5-1.5l0-2l-1-3M569 322.5l-5-0.5l-4.5 0.5l-2.5 1l-4 2.5l-2.5 3l-1 1.5l0.5 3l1.5 4l2.5 3l3.5 2l8.5 2.5l10.5 0l3-1l4-2l2.5-3l0.5-2l-0.5-3.5l-2.5-3.5l-6-4.5M606.5 373.5l-9.5-2l-6 0.5l-5 2.5l-3 3l-0.5 3.5l0.5 2.5l2 3l3 2.5l7.5 4l9.5 1.5l8.5-1.5l2-1l3.5-2.5l0.5-4l-0.5-2.5l-2-3.5l-3-2.5M544.5 347l-5 0l-5 2l-2.5 3l0 2l1 2.5l4 3.5l6 2.5l8 0l5-1.5l2-3.5l0-2l-2-3.5l-4.5-3.5M662.5 400.5l-7.5-1l-6 0.5l-6.5 2.5l-5 3.5l-43 43.5l-1.5 3.5l-0.5 4l1 3.5l2.5 3l3 2.5l4 1.5l7.5 1l8-2l7.5-5l42-41.5l4-4.5l1-4l-0.5-4.5l-4.5-4M469 339.5l-9.5 0.5l-8 2.5l-5.5 4l-74 73l-2 3.5l-1 4.5l1 4.5l2.5 3.5l3 2.5l3.5 1.5l8.5 1.5l4 0l6.5-1l7-3.5l9-8.5l8.5-8.5l3-5l4.5-12.5l2-3.5l10-10l7-5l17.5-9l11-9.5l4.5-4.5l1.5-3l1-4l-1-4l-2-3.5l-2.5-2.5l-5.5-3M512.5 376l-5.5 0l-3 1l-4 2.5l-1 1.5l-0.5 2l1 2.5l2 3l6 4l6.5 1.5l8-0.5l4-2.5l2-3l0-2.5l-2-3.5l-5-3.5l-4-1.5M568 403.5l-9.5 0l-3 1l-4 2.5l-2.5 3l0 2l1 4l2 3l3 3l3.5 2l8.5 2.5l9 0l3.5-0.5l4.5-2l3-3l0.5-2l-0.5-4l-2-3.5l-6.5-4.5l-6-2.5M546.5 427.5l-4.5-1l-7 0l-5 1l-3.5 1.5l-7.5 7l-2.5 3l0 4.5l1 2.5l3 3.5l4 3l5.5 2.5l4.5 1l5 0.5l5.5 0l4-1l3.5-2l8.5-8.5l1-2l0-3l-2-4l-4-4.5l-3-2M453 435l-8 0l-6.5 2l-2.5 3l-0.5 2l0.5 2.5l1.5 3l3 3l3.5 2l8 3l8.5 0l3-0.5l4.5-2.5l2.5-3l0-2l-0.5-2l-2-3.5l-2.5-2.5l-3.5-2M509 467l-6-0.5l-6 1.5l-1.5 1.5l-0.5 2l0.5 2l2.5 3.5l4.5 2.5l4.5 1l5.5-1.5l3-2.5l1-3.5l-1.5-3M779 282l-7-1l-6.5 0.5l-6.5 2l-4 2.5l-60 58.5l-3.5 4.5l-1 4l0.5 4.5l1.5 4.5l3.5 5l3.5 2.5l4 1.5l7.5 0.5l7-1.5l6.5-3.5l5-4.5l57.5-57.5l4-4.5l1.5-3.5l0.5-4l-0.5-2l-2.5-3l-3-2.5M604.5 205l-5.5-0.5l-7 1l-5.5 2l-4 2l-62.5 62l-3 4.5l-0.5 4l0 4l3.5 5l3 2.5l5.5 3l6.5 1.5l5 0.5l7.5-0.5l5.5-1.5l7-3l3-3l9-10.5l2-3.5l3.5-11l4.5-6l13.5-13l20-9.5l6.5-5.5l2.5-3l1-3.5l0-3l-1.5-4l-2.5-3l-3-2.5l-5-3M721.5 262l-11-2.5l-5.5-0.5l-7 1l-5 2l-3 2.5l-1.5 3.5l0.5 4.5l1.5 4l4 4l5 3.5l4 1.5l6.5 1.5l5 0.5l6 0l6.5-1.5l4-2.5l2.5-3l1-3.5l0-2.5l-2.5-4l-2.5-3l-3-2.5M655.5 234l-7.5-0.5l-8 2l-3 3l-0.5 2l0 2l2 3.5l6.5 7l3.5 2l4 1.5l5 0.5l5.5 0l4-1l4-2l2.5-3l0.5-2l0-3l-2-3.5l-6-5l-6-2.5M689 289l-7-1.5l-5.5 0l-4 0.5l-5.5 2l-3.5 2.5l-2 3l0 2l1 4l2 3.5l3 2.5l3 2.5l6 2l4.5 1.5l6.5 0.5l4.5-0.5l5.5-1.5l4-2.5l2-3l0.5-4l-0.5-2.5l-2.5-4l-3-2.5l-3-2M655.5 319.5l-6.5 0l-5 0.5l-4.5 1.5l-3.5 2.5l-1.5 3.5l0 2l1 4l2.5 3l3 2.5l4 2l7 1l15 0l3-0.5l4-2.5l1.5-3.5l0-2l-1-2.5l-2.5-3.5l-3-2.5l-5-3M593 293.5l-9.5 0l-3 1l-4 2.5l-1.5 3l0 2.5l1 2.5l2.5 3l6.5 4.5l9 2l7-0.5l3-0.5l4-2.5l2-3l0-2l-0.5-2.5l-1.5-2.5l-3-3l-3.5-2M569 320l-6.5 0l-5.5 0.5l-5 3l-3.5 2.5l-2 3.5l0 4l0.5 3l2 4.5l0 2l-14 2l-3.5 1.5l-2.5 2l-1.5 3.5l0 2l1.5 3l2.5 3l5 3l6.5 2l5.5 0.5l7-0.5l4.5-2.5l2.5-3l0-4l-2-5l0-2.5l3.5-0.5l10.5 0l5.5-1l5-1.5l3.5-3l1.5-3.5l0-3.5l-1.5-3.5l-2.5-3l-6.5-5l-6-2.5M606.5 370.5l-7-1l-5.5 0l-4.5 0.5l-5.5 1.5l-3.5 2.5l-2 3.5l0 4l1 2.5l2 3l4.5 4l5.5 3l4 1.5l7 1l9 0l5.5-1.5l4-2.5l2-3.5l0.5-4l-1-2.5l-2.5-3.5l-4-4l-3.5-2M662 398l-7.5-0.5l-7.5 0.5l-5.5 2l-5.5 3.5l-44.5 44.5l-2.5 5.5l0 3.5l1 4l2.5 3.5l2.5 2.5l3.5 2l4.5 1.5l6.5 0.5l5-1l4-1.5l4.5-2l5-4l42-41.5l5-6l1-3.5l0-2.5l-1.5-4l-4.5-3.5M473.5 337.5l-7.5-0.5l-9 1l-9 3l-5 4l-74 73l-3 5l-0.5 4l0 4.5l3.5 5.5l4 3.5l4 1.5l6.5 1.5l5.5 0.5l7-1l6-1.5l4.5-2l5-4l10-10l5-6.5l1.5-3.5l2.5-11l4.5-6.5l10-10l3.5-3l6.5-3l12.5-5l4-2l8-7l6.5-7.5l2-3.5l0.5-3.5l-0.5-2.5l-1.5-4l-2-3.5l-3-2.5M517 374l-10-0.5l-7.5 1.5l-3.5 2.5l-1.5 1.5l0 4l1 2.5l2 3l4 4l7.5 3.5l5 1l6.5 0l3-0.5l5-2l3-3l1-1.5l0-3.5l-1.5-3.5l-3-3.5l-3-2M574.5 402.5l-7-1.5l-8.5 0l-7 2l-4 2.5l-2.5 3l-0.5 4l1.5 4l3.5 6.5l-1.5 1.5l-12.5-0.5l-5.5 0.5l-7.5 3l-7.5 7l-2.5 3l-0.5 4.5l2.5 5.5l3 3l4.5 3.5l5.5 2.5l4.5 1.5l7.5 0.5l5.5 0l6-1.5l4.5-2l8.5-8.5l1-4l-0.5-4.5l-4-8l2-1l12.5 0l7.5-1.5l4.5-2l1.5-1.5l2-3.5l0-4l-0.5-2l-3.5-5l-5-3.5M459.5 434l-7-1.5l-6 0l-5.5 0.5l-4 1.5l-2 1l-2.5 3l-0.5 3.5l0.5 3l2 3l2.5 3l3 2.5l6 2.5l10.5 2l4.5 0l6-1.5l4.5-2.5l2-3l0.5-4l-0.5-2l-2-3.5l-3-2.5l-3-2.5M511 465.5l-8-1l-7 1l-3.5 2.5l-1 1.5l0.5 4l3.5 4.5l5.5 3l4.5 1l6.5-1l5-4l2-3l0-2.5l-1-2l-1.5-1.5M780.5 280.5l-9.5-1.5l-10 1l-5.5 2l-4 2.5l-6.5 5l-12.5 13.5l-43.5 43l-1.5 3.5l0 4l3.5 10l2 3.5l5 4l8.5 2.5l6.5 0l8-2.5l9-6.5l60.5-60.5l4.5-6.5l1-3.5l0-2l-2.5-5l-5-3.5M604.5 202.5l-6-0.5l-7.5 1l-5.5 1.5l-4 2.5l-5 4l-58 57.5l-3.5 4.5l-2.5 5.5l0 4l1.5 4.5l2.5 3l4.5 3.5l5.5 2.5l6.5 2l7 1l11.5-1l11-3.5l4.5-2l9.5-14.5l2.5-13.5l1.5-3.5l2.5-3l10.5-10l3.5-2.5l6-3l16-6l6-3.5l3-3l1.5-5.5l-0.5-4l-2-5l-2-3l-4.5-4l-5.5-3M662 233l-11.5-2l-10.5 0.5l-5.5 2l-1.5 1l-2 3.5l0.5 2l2 5l9.5 9.5l5 3.5l4.5 1.5l4.5 0.5l11.5-1l5-1.5l3.5-3l2-3.5l-0.5-4l-1.5-4l-4-4l-5-3.5M719 259l-9-2l-9.5 0l-6.5 1l-7 3.5l-1 1.5l-1.5 3.5l0 5l2.5 5.5l5.5 8l-2 1l-11.5-1l-7.5 0.5l-6 1.5l-4 2.5l-3 3l-1 3.5l0.5 4.5l3 5l4.5 4l5 3l11 3.5l7.5 0l7-0.5l5-1.5l4-2.5l2.5-3.5l0.5-5l-2.5-6l-4.5-6.5l1.5-1.5l15.5 1l11-1.5l6.5-3l3-3l0.5-2l0-4l-0.5-2.5l-3.5-6l-6.5-5M660 318l-7.5-1.5l-5.5 0l-6 1l-5 2l-3.5 2.5l-2 3.5l-0.5 4l2 5l5.5 5.5l3.5 2l4 1.5l22 1l4-0.5l5.5-1.5l2.5-3l1-4l-1-3.5l-2-3.5l-2.5-3l-4.5-4l-6-2.5M599.5 292.5l-11.5-2l-7 0l-6.5 1.5l-2.5 1l-1.5 1l-1 2l0.5 6.5l2 3.5l4 4.5l4.5 3.5l4 2l6.5 1.5l5.5 0l9.5-1l4.5-2l3-3l1.5-3.5l-0.5-3l-1.5-4l-4-4l-3.5-2.5M575.5 319l-7-1.5l-8 0l-5.5 1l-6 3.5l-3 3l-2 3l-1 4l0 6l-0.5 2l-14 4l-3.5 2.5l-1 2l-1 3.5l0.5 2l3 5.5l6 5l8 3l9 1l7.5-1l5-2l3.5-2.5l1.5-3.5l0-6.5l1-1.5l2.5-1l13.5-2l6.5-3.5l2.5-3l1-3.5l-0.5-4l-1.5-3.5l-3-3.5l-4-4l-5.5-3M604 367.5l-7.5-0.5l-7.5 0.5l-6 1.5l-4.5 2l-3 3l-1 3.5l0.5 4.5l2 4l4 4.5l4.5 3.5l6 2.5l6.5 2l7.5 0.5l7 0l6-1.5l4.5-2l3-3l1.5-3.5l-0.5-4.5l-2.5-4l-4-4.5l-4.5-4l-5.5-2.5M663.5 396.5l-9-1.5l-8 0.5l-8.5 2.5l-5.5 4l-30.5 30l-12.5 13l-2.5 3l-2 5.5l0 4.5l1.5 4l3 5l5 3.5l4 2l4.5 1l5 0l7-1.5l4.5-1.5l5.5-3l5-4l43.5-43l4.5-6.5l1-5.5l-1.5-4l-3-2.5l-3-2M515 371l-6.5-0.5l-7.5 0.5l-3.5 1l-4.5 2l-3 3l-0.5 1.5l0.5 4.5l1.5 3l4 4.5l4 4l5.5 3l4 1l7.5 1l5.5 0l6.5-1l4.5-2l3-3l1-3.5l-0.5-4.5l-2-4l-2.5-3l-4.5-3.5l-6-2.5M574 400l-7-1l-8-0.5l-8.5 1.5l-5 2l-2.5 3l-1.5 3.5l0 4.5l1 6.5l-1.5 1.5l-11.5 1l-8 2.5l-4 2.5l-7 7.5l-1.5 3.5l-0.5 2.5l1 4l2.5 3.5l4 4.5l4.5 3.5l6 2.5l6.5 1.5l8 1l8.5-0.5l6-1.5l4-2.5l7-7l2.5-3.5l0.5-3.5l-1.5-7l0.5-2l2-1.5l10.5-1l6-1.5l6-4l2-3l0-4l-0.5-2.5l-2-4l-2-3l-6.5-5M459 432l-7.5-1.5l-7.5 0l-5.5 0.5l-5 1.5l-3.5 3l-2 3.5l0.5 4l0.5 2.5l3.5 4.5l2.5 3l5 3l6 2.5l7 1.5l5 0l7-0.5l5.5-1.5l4-2.5l2.5-3l1-3.5l-1-4.5l-2.5-3.5l-4-4l-5-3M510.5 463.5l-10-1l-8 1.5l-2 1l-2.5 3l0 2l1 3.5l2 3.5l3 2.5l7.5 4l5 0.5l3-0.5l4-2l3.5-2.5l3-3l1-3.5l0-2l-1.5-2.5l-1.5-1.5M385.5 446.5l8.5-0.5l6-1l7.5-3l6-3.5l9-8.5l6.5-7.5l2-5.5l0.5-8l1.5-6l2-3l10-10l5-4l4.5-2.5l14-4l6.5-3l7-5.5l5.5-5.5l3-5l1.5-3.5l0-7l-1.5-4l-2.5-3.5l-2.5-3l-5-3l-9-2.5l-11 0.5l-11 3l-8 4.5l-76 75.5l-2.5 4l-1.5 5.5l0.5 5l2 4.5M615 203l-11-3l-10.5 0l-9 2l-6.5 3.5l-7.5 7l-55 54.5l-5 6l-2 5.5l0 5.5l3 5l4.5 4l9 5l13 3.5l8 0.5l15-1.5l3.5 2l5.5 8l1 2.5l-2 1.5l-12 0.5l-3.5 1l-4 2l-7.5 7l-2 4.5l-1.5 6.5l-1 1.5l-11 3.5l-5.5 4l-2 3l-0.5 2l1 5.5l4.5 6.5l6 5l8.5 2.5l12.5 1.5l11-1l7.5-3l2-3.5l0.5-8l1.5-1.5l12-3l5.5-1.5l3.5-2.5l2.5-3l1.5-3.5l-0.5-5l-2-4l-4.5-7l-0.5-2.5l2-1l11.5-1l6-1.5l4.5-2l3-3l1.5-3.5l0-4.5l-2.5-5.5l-4-4.5l-3-2l-6-2.5l-9-2.5l-14-2.5l-1.5-1l1-7.5l-0.5-9.5l2-6.5l2.5-3l12-11.5l6-3l6.5-2l10-2l5.5 0.5l1.5 1l18 17.5l5.5 3l10 1l15-0.5l2 0l1.5 1.5l5 16.5l-1.5 1.5l-11.5 1l-8.5 2l-4 2.5l-4 4.5l-0.5 4l1.5 5.5l3 5l5.5 6.5l-2 1.5l-11-0.5l-7.5 0.5l-9 2l-4 2.5l-2.5 3l-1.5 3.5l0.5 4l1 4l3.5 5l4.5 4l3.5 2l7 1l35 1l1.5 1.5l9 19.5l3.5 3.5l8 3.5l7 1l6.5-0.5l5-2l7.5-5l62.5-61.5l6-8l1.5-5.5l-1-4.5l-4-4.5l-7-4l-8.5-2.5l-10.5-1l-7.5 1l-10 3l-3 0l-1.5-1l-4.5-8.5l-4-5l-5-3.5l-7-4l-8.5-2.5l-7.5-1.5l-7-0.5l-14.5 0.5l-2-1l-2-6.5l-3-5l-2.5-2.5l-4.5-4l-7.5-3.5l-6-2.5l-9-1.5l-11-0.5l-4-1l-4-9l-4-5.5l-6-5M728 292.5l4.5 0l1.5 1l-1.5 3l-3.5 5l-6 5.5l-10 8l-7 9l-10.5 10l-6.5 4.5l-2.5-0.5l-4.5-9l-6.5-8l-0.5-2.5l18.5 0l7-1l8-2.5l3.5-2.5l1-4l-0.5-4l-2.5-9.5l2-1.5M510 461l-11.5-1l-5 1l-4.5 1l-2 1.5l-2.5 3l0 4l1 3.5l5 6l7 4.5l7 1l3 0l5.5-2l3.5-2.5l4.5-4l2-4.5l0.5-3l-0.5-2l-3-3l-3.5-2M392 449.5l12.5-2.5l16-7l2 1l4.5 8l4.5 4.5l6.5 4.5l6 2.5l9.5 2l11 0l7.5-1.5l6.5-3.5l3-5l0.5-4l-0.5-2.5l-3.5-5.5l-5.5-5.5l-5-3l-6.5-2l-9.5-1.5l-16-0.5l-2-1l-0.5-2.5l2-5.5l-1.5-11l0.5-4l2-3.5l11.5-11.5l3.5-2.5l7.5-3l13.5-2.5l7-1.5l2.5-0.5l2 1l12.5 15l6.5 4.5l6.5 2l7.5 1l17.5-1l2 0.5l0.5 2.5l1 10.5l-0.5 2l-2 1.5l-13 2.5l-5 1.5l-3.5 2.5l-6 6l-3 5l0 4l1.5 5.5l5 6.5l5.5 5l7.5 3.5l7 1.5l15 1l10.5-1.5l6.5-3l9.5-8.5l1.5-3.5l-0.5-8.5l0.5-2l2-1l15-2l1.5 1l-2.5 5l-7 7.5l-2.5 5l0 6.5l3 7l5 6l5 3.5l4 1l7.5 1l11-2.5l7-3l7-5.5l47.5-47.5l3-4.5l1.5-5l-1.5-3.5l-3-3.5l-5-3l-7.5-3l-7-2l-7.5-0.5l-5 0l-10.5 1.5l-2-0.5l-1.5-7.5l-3-5l-7-9l-7-4.5l-6-2l-7-1.5l-14 0l-12.5 3l-3.5 2.5l-1 3.5l0 6.5l2 5.5l4.5 6l7 7l4 1.5l12.5 1.5l9 0.5l13.5-1l1.5 1l-3 5.5l-5 6l-8 7l-5 2.5l-2-0.5l-3-8l-3.5-5l-3.5-4.5l-6-5.5l-4-1.5l-14.5-2l-8 0l-15 1l-2-1l-0.5-8l-2-6l-3.5-4.5l-6-5l-6-2.5l-4.5-1l-9.5-1.5l-13.5 0l-2-1l0-3l2-8.5l-0.5-7l-3.5-7l-2.5-3l-5-3.5l-6-2.5l-7-1l-8 0l-8 1l-10 4l-7.5 5l-75.5 74.5l-3.5 4.5l-1.5 3.5l-1 5l0.5 5.5M620 243l5 2l8 6l4 4l5 6.5l3 2.5l4 1.5l4.5 1l16 0.5l3.5 2l2 3.5l1 4.5l-1.5 1.5l-15.5 3.5l-6.5 3.5l-3 2.5l-1.5 4l0 4l1.5 4.5l3 8l-1 1.5l-22 2.5l-2-1l-5-11.5l-2-3.5l-4.5-4l-7.5-3.5l-19.5-5l-3-2.5l-4-12.5l0.5-5l3-5l10.5-10l6-3.5l8-2M718.5 298.5l3-0.5l0 2l-2.5 0M692.5 322.5l4 0l1.5 1.5l-4.5 5l-1.5 1l-2.5-0.5l-4-4l0-2l2.5-1M558 374.5l3 0l2 1l1 1.5l6 13l0 2l-3.5 1l-12.5-0.5l-4.5-1l-1-1.5l-6.5-12.5l-0.5-2.5l3-0.5M608 405.5l4.5 0.5l1 2l-3.5 4.5l-3 1.5l-2.5 0l-2.5-3l-2-3l0-2l3-1M477.5 384l4 1l7.5 6l7.5 9l3.5 2.5l8 2.5l18 1.5l2.5 0.5l1.5 1.5l1 1.5l0.5 2.5l-0.5 2l-2 1l-12.5 3l-5 1.5l-3.5 3l-8 8.5l-1 4l0 4l3 7.5l6.5 9.5l-2.5 1l-17.5 0l-2-1l0-8l-2-6l-5-6.5l-4.5-3.5l-7.5-3.5l-23.5-4l-3.5-2l-2-6.5l-3.5-7.5l0.5-4.5l3-5l10.5-10l6-3.5l7.5-1.5M398 452l9-2l9-3l3 0l1.5 1l11.5 10.5l9.5 4.5l9 2l8 0.5l18-1.5l2 1l2.5 8.5l2 3l4 4.5l6.5 4.5l6.5 2l5.5 0l4-1l8.5-5l4-4l2.5-3.5l2.5-9l3.5-0.5l16.5 1l8.5-0.5l6-1l9-4.5l2.5-0.5l1.5 1l7.5 12l4.5 4l3.5 2l6.5 1.5l5 0.5l6.5-1l8.5-2.5l8.5-5l7-5l45-44.5l3.5-4.5l3-5l1-3.5l0-2.5l-1.5-2.5l-4-3.5l-11-6l-12.5-3l-13-1.5l-4.5-1l-16-20l-6.5-4.5l-11-2.5l-8-1l-13.5 0l-2.5 0l-1.5-1.5l0-1l0.5-1.5l16.5-5l4-2.5l2.5-3l1-4l0-4l-4-10l0-2.5l1.5-1.5l15.5-2l2 1l1 1.5l2.5 8.5l3 5l4 4.5l3 2.5l6 2l22.5 0l16.5 2.5l3 2.5l3.5 5l4.5 9.5l3.5 4.5l5.5 3l8.5 2.5l5 0.5l5.5-0.5l5-2l4-2.5l8.5-6.5l57.5-57.5l7-7.5l3-6.5l0.5-4.5l-1-2l-3.5-4.5l-7-4l-8-3l-9.5-2l-8 0l-12 1l-2.5-0.5l-1.5-1l-9.5-10l-10-6.5l-8-3l-6.5-1.5l-22.5-3l-3-2.5l-7-9l-4.5-4l-5.5-3l-12-4.5l-18.5-3.5l-3-2.5l-4-7l-4.5-4l-4.5-4l-7-3.5l-8-3l-9.5-2l-8.5 0l-9.5 2l-8.5 4.5l-7.5 7l-56.5 56l-3.5 4.5l-3 5l-0.5 6l2 4.5l4 4l6.5 4.5l9.5 4.5l11 4l7.5 1l12.5 0l2 0.5l1.5 1l1.5 2.5l-1 1.5l-8.5 2.5l-6 3.5l-7 7.5l-5 10l-1.5 1.5l-12.5 4.5l-3.5 3l-2.5 3l-0.5 4l1 5l3.5 7.5l-1 1.5l-9.5 0l-4-1l-1-1.5l-0.5-10.5l-3-8.5l-4-6.5l-4.5-4l-3.5-2l-6.5-2l-10-1l-12 1l-9.5 3l-6.5 3l-7 5.5l-75.5 74.5l-3.5 4.5l-3 5l-1 4.5l-0.5 3.5M614.5 245l8.5 2l8.5 5.5l3.5 4l4.5 10l2.5 3l4.5 1l15 1.5l2 1l1 1l-2 1.5l-14.5 3.5l-4 2.5l-3 3l-1 1.5l-0.5 4l1 4.5l3 10l-1.5 1l-4 1l-4.5-1l-2.5-3l-6-10.5l-4.5-4l-4-1l-14.5-2.5l-8-3l-3-2.5l-6-7.5l-1.5-4.5l1-4l2.5-3.5l10-10l4-2l4-1.5l6.5-1M552.5 380.5l3-0.5l3 2.5l1.5 3l-1.5 1.5l-1.5 0l-3-2l-1.5-2.5M475 387l6 1.5l4.5 3l4 4.5l5 9l2.5 3l10.5 3.5l0.5 0.5l-7 3.5l-3.5 2.5l-7 7l-3.5 7l-2.5-1l-5-3l-4-1.5l-18.5-2l-8-1.5l-3.5-2.5l-8-11l-0.5-4.5l1.5-3.5l13.5-12.5l4.5-2l4.5-1M406.5 456l7.5-1.5l2.5 0l2.5 1l10 8.5l4 2l6 2l13 1.5l19 0l3.5 2l5.5 8.5l5 6l5 3l4 1.5l9-0.5l10.5-4l8.5-6.5l3.5-5l4-6.5l2-1l3.5-0.5l19 2l14.5 0l3.5 2l5.5 6l4.5 3.5l5.5 3l5.5 1.5l4 0l6.5-0.5l11.5-4.5l12-7l9.5-8l43.5-43l6-8l1.5-5.5l-0.5-2l-2-3.5l-4.5-3.5l-5.5-3l-9.5-4l-20-5l-4-1.5l-11-11l-6-10.5l-3-3l-3.5-2l-8-2.5l-0.5-0.5l0.5-2l3-5l0-4l-1-4.5l-2.5-7.5l0-2.5l1.5 0l2 1l10 14.5l2.5 3l3.5 2l5 0.5l15.5-2.5l7-0.5l5 0.5l11.5 2.5l3.5 2l4.5 4l2 3l4.5 9.5l4.5 4l7.5 3l6.5 2l6.5 0.5l5-1l7.5-3.5l8.5-7l59.5-58.5l6.5-7.5l3.5-5l1-3.5l0.5-3.5l-0.5-2.5l-3.5-4.5l-9-5.5l-8-3l-8.5-2l-21-1.5l-3.5-1.5l-12.5-10l-9-5l-12.5-4l-16.5-3l-4-1l-3.5-2.5l-8-8l-6.5-5l-11.5-5l-17.5-4.5l-4-1.5l-14.5-13.5l-6.5-4l-7.5-3.5l-11-3.5l-9.5-1l-8.5 0l-6.5 2l-8 4.5l-8 7l-57.5 57.5l-5.5 6l-3 5l-1 4l1 4l2.5 3.5l4.5 4l12 7l21.5 9l3.5 2l0.5 2.5l-2.5 4l-10.5 14l-3.5 2.5l-18 5.5l-2.5-0.5l-1.5-1l-6-6l-5.5-4.5l-6-2.5l-6.5-2l-7.5-0.5l-9 1l-10.5 2.5l-7 3l-8 5l-6.5 5l-75.5 75l-7 9l-3 7M615 247.5l8 2.5l5.5 2.5l3 3l2 3.5l0.5 3.5l-1 5.5l-2 3.5l-3.5 4.5l-3 3l-4.5 2l-6 1.5l-4.5 0l-5-0.5l-4.5-1l-5-3.5l-7-6.5l-2.5-3.5l0.5-4l2.5-3l12-11.5l6.5-2M470 389l6.5 1l5.5 2.5l4 3.5l2 5l-0.5 4l-1.5 3.5l-10 10l-4.5 2.5l-6 1l-10-0.5l-5.5-2.5l-10-9.5l-1.5-3.5l1.5-4l11.5-11.5l4-2l4-1l3 0M455 478l5 0l4.5 0.5l3 2.5l0.5 3M496 496.5l15-7.5l7.5-5l6-5.5l6-8l1.5-1l3-1l8 0.5l20 5.5l19 11l6 2.5l7 1.5l4.5 0l5.5-1.5l11-6l11.5-7l9.5-8l45-45l6-7.5l2-3.5l0.5-2.5l-0.5-3.5l-1.5-2.5l-6.5-5l-11-5.5l-23-7.5l-7-4l-7.5-6.5l-2.5-4l-1-5l1-3.5l1-2l5-3.5l9-4.5l6.5-1.5l7.5 0.5l11 3l7 4l3.5 4.5l2.5 6.5l2 3l6.5 4.5l10 4l6.5 1.5l7-0.5l5.5-1.5l7.5-5l8-7l60.5-60l6.5-7.5l3.5-7l0-3.5l-0.5-3l-2-3l-2.5-2.5l-9-5l-14.5-5l-23.5-4.5l-3.5-1.5l-11.5-8l-9-5l-10-3.5l-18-4.5l-4-1.5l-14-10.5l-9-5l-7.5-3.5l-17-5l-3.5-2l-15.5-12l-7-4l-7.5-3.5l-10.5-3.5l-11.5-2.5l-8 0l-7 1.5l-8.5 4.5l-8 7l-60.5 60l-7 7.5l-4 6.5l-1 3.5l0.5 2.5l2 3l4 3.5l12 7.5l20.5 9.5l5 3.5l0.5 2.5l-0.5 3l-7.5 9l-4 2.5l-4.5 1.5l-8 0l-4.5-1.5l-18.5-9l-8.5-2.5l-9-2l-4 0l-5 1l-10 4.5l-12 7.5l-11 9.5l-75.5 74.5l-6.5 7.5l-5.5 8M616 250l7 2.5l5.5 3l2 3l0.5 2.5l-0.5 2l-1.5 3l-10 10.5l-4 2l-3 1l-7.5-0.5l-7-4l-8-5.5l-1.5-1.5l-0.5-2l1-3.5l11.5-11.5l4.5-2l3.5-1M472 392l6 1.5l3.5 2l2 3.5l0.5 2.5l-0.5 1.5l-2.5 3.5l-8.5 8.5l-3.5 2.5l-6 1.5l-5 0l-2-0.5l-14.5-10.5l-0.5-3.5l1-2.5l9-9.5l4-2.5l5.5-1M560 494l-5 0.5l-2.5 1l-1 1.5l-0.5 1.5l1 3l3.5 2.5l4 1.5l5.5 0l3-1l1.5-1.5l0.5-2l-1-2.5l-3-2.5M500 498.5l20.5-13.5l4.5-4.5l6.5-7.5l4-2l6 0l10.5 3.5l8 3l21.5 11.5l10.5 3.5l7 1l4-0.5l5-2l20-13.5l11.5-9.5l44.5-45l7.5-9l2-3.5l0.5-3l-0.5-3l-2-3l-6-4.5l-11.5-5.5l-20-7.5l-7-4l-9.5-7l-2.5-3l-1-3l0.5-2l1.5-3.5l5-4l5.5-3.5l5.5-2l6.5 0l10.5 3.5l8.5 5l2.5 3.5l1.5 6.5l1 1.5l3 2.5l7.5 4l10 4l6.5 1.5l7-0.5l7.5-3l7.5-5l7.5-7l61-60l7.5-9l3-5l1-4l-0.5-4.5l-1-2l-2.5-3l-3-2.5l-9-4.5l-12-5l-26-7l-15.5-9l-7.5-3.5l-10-4l-19-6l-26-15.5l-26-10l-22-14l-13-6l-10.5-3.5l-11-3l-7.5-0.5l-6.5 0.5l-7.5 4l-11.5 9.5l-64 63l-8 9l-4.5 6.5l-0.5 4l0.5 2l4 4l14 8.5l18.5 9l6.5 4.5l0.5 2.5l-0.5 1.5l-7 7.5l-3 1l-3 0.5l-5-0.5l-6.5-2l-19-8.5l-14.5-5l-7.5-0.5l-6.5 2l-18.5 14.5l-12.5 11.5l-75.5 74.5l-13 15M607 250l4 1l12 4.5l3.5 2l1 2l-0.5 3.5l-10 10.5l-3 2l-4 1l-5-0.5l-13.5-8.5l-1.5-2l0.5-2l1-1.5l10-10l2.5-1.5M462.5 391.5l15 5.5l1.5 1.5l0.5 2l-1 2.5l-10 10l-4 2.5l-3 0.5l-4.5-1.5l-12-7l-1.5-1.5l0-2l11-12l4.5-1M503.5 500l19-14l12-11.5l3-0.5l6 0.5l6 2.5l6 3l5.5 4.5l-1.5 1.5l-10 1.5l-5 2l-3 3l-1.5 3.5l0.5 4.5l3 4l5 3.5l7.5 3.5l5 0.5l6 0.5l3.5-0.5l5-2l2-1l2.5-3.5l1-3.5l-1-6.5l2.5-1l13.5 2.5l7 0.5l6-1.5l5.5-4l24.5-20l45-44.5l9.5-10.5l3-5l1.5-3.5l0-2.5l-1.5-4l-2.5-3l-3-2l-9-5l-25-11l-17-10.5l-1.5-1.5l-0.5-2l1.5-4l10-8l4.5-1l3 0l10 3.5l9 5l1.5 3l0 6.5l1 1.5l6.5 4.5l7.5 3.5l12.5 4.5l7 1l6-0.5l7.5-3l7-5l9.5-8.5l60.5-60.5l5.5-6l4.5-6l3-5l0.5-3.5l0-2.5l-1.5-4l-5.5-5.5l-11-5.5l-12-5l-22.5-7.5l-25.5-13l-28-11l-27-14l-27.5-11.5l-21.5-12l-13-6l-12-4.5l-13-4l-7-1l-5 1l-4.5 2l-6 4l-12.5 11l-66.5 66l-9.5 10l-3 5l-0.5 2.5l0 2.5l2 3.5l3 2.5l10.5 6l21 9.5l3 2l1.5 2.5l-5.5 6l-2.5 1l-4.5-1l-25-10.5l-12.5-4.5l-8 0l-7 2.5l-7 5.5l-24.5 22l-76.5 76.5l-14 14.5M605 253l3 0.5l14 6l0.5 1.5l-10 10.5l-2.5 1l-3-1l-13-6.5l0.5-2M654 357.5l11 4.5l2 3l-6.5 1.5l-6.5 3l-8.5-2l-1-1.5l0-0.5l7-7.5M510 503.5l6-4.5l4-1l2 0.5l8.5 11l9.5 6.5l8 3.5l6.5 1.5l9.5 1.5l5.5 0.5l12-2l7.5-3l5-4l5.5-8l2-1l8-2.5l6-4l29-26.5l53-53l4-4.5l2.5-5l1-4l-0.5-6.5l5.5-6l14-4l4.5-2l6.5-5.5l68.5-67l12.5-13.5l4.5-6.5l2.5-5l0-4l-0.5-2.5l-2.5-3.5l-2.5-2.5l-7-4.5l-9-4.5l-31.5-12.5l-28-13.5l-29.5-12.5l-25.5-12.5l-29-12.5l-24-12l-13.5-6l-24-9l-4.5-1l-7 1l-4.5 2l-6 3.5l-15.5 14l-76.5 76l-6 7.5l-3 7l-2.5 3.5l-4 4l-10.5 6l-10 8l-26.5 25.5l-88 88" fill="none" stroke="#101010" stroke-width="0.4"/><g fill="none" stroke-linecap="round"><path d="M586.0 163.0L601.0 152.8M601.0 152.8L620.5 178.7M620.5 178.7L640.0 170.6M640.0 170.6L659.5 196.4M659.5 196.4L679.0 188.3M679.0 188.3L698.5 214.1M698.5 214.1L718.0 206.0M718.0 206.0L737.5 231.9M737.5 231.9L757.0 223.7M757.0 223.7L776.5 249.6M776.5 249.6L796.0 241.4M796.0 241.4L815.5 267.3M815.5 267.3L835.0 259.2M835.0 259.2L850.0 283.0M327.0 420.0L342.0 409.8M342.0 409.8L361.5 435.7M361.5 435.7L381.0 427.6M381.0 427.6L400.5 453.4M400.5 453.4L420.0 445.3M420.0 445.3L439.5 471.1M439.5 471.1L459.0 463.0M459.0 463.0L478.5 488.9M478.5 488.9L498.0 480.7M498.0 480.7L517.5 506.6M517.5 506.6L537.0 498.4M537.0 498.4L556.5 524.3M556.5 524.3L576.0 516.2M576.0 516.2L591.0 540.0M586.0 163.0L571.6 160.3M571.6 160.3L557.2 191.6M557.2 191.6L542.8 188.8M542.8 188.8L528.4 220.1M528.4 220.1L514.1 217.4M514.1 217.4L499.7 248.7M499.7 248.7L485.3 245.9M485.3 245.9L470.9 277.2M470.9 277.2L456.5 274.5M456.5 274.5L442.1 305.8M442.1 305.8L427.7 303.1M427.7 303.1L413.3 334.3M413.3 334.3L398.9 331.6M398.9 331.6L384.6 362.9M384.6 362.9L370.2 360.2M370.2 360.2L355.8 391.4M355.8 391.4L341.4 388.7M341.4 388.7L327.0 420.0M850.0 283.0L835.6 280.3M835.6 280.3L821.2 311.6M821.2 311.6L806.8 308.8M806.8 308.8L792.4 340.1M792.4 340.1L778.1 337.4M778.1 337.4L763.7 368.7M763.7 368.7L749.3 365.9M749.3 365.9L734.9 397.2M734.9 397.2L720.5 394.5M720.5 394.5L706.1 425.8M706.1 425.8L691.7 423.1M691.7 423.1L677.3 454.3M677.3 454.3L662.9 451.6M662.9 451.6L648.6 482.9M648.6 482.9L634.2 480.2M634.2 480.2L619.8 511.4M619.8 511.4L605.4 508.7M605.4 508.7L591.0 540.0" stroke="#5a5f5f" stroke-width="0.6"/><path d="M586.0 163.0L586.0 146.0M601.0 169.8L601.0 152.8M620.5 178.7L620.5 161.7M640.0 187.6L640.0 170.6M659.5 196.4L659.5 179.4M679.0 205.3L679.0 188.3M698.5 214.1L698.5 197.1M718.0 223.0L718.0 206.0M737.5 231.9L737.5 214.9M757.0 240.7L757.0 223.7M776.5 249.6L776.5 232.6M796.0 258.4L796.0 241.4M815.5 267.3L815.5 250.3M835.0 276.2L835.0 259.2M850.0 283.0L850.0 266.0M327.0 420.0L327.0 403.0M342.0 426.8L342.0 409.8M361.5 435.7L361.5 418.7M381.0 444.6L381.0 427.6M400.5 453.4L400.5 436.4M420.0 462.3L420.0 445.3M439.5 471.1L439.5 454.1M459.0 480.0L459.0 463.0M478.5 488.9L478.5 471.9M498.0 497.7L498.0 480.7M517.5 506.6L517.5 489.6M537.0 515.4L537.0 498.4M556.5 524.3L556.5 507.3M576.0 533.2L576.0 516.2M591.0 540.0L591.0 523.0M586.0 163.0L586.0 146.0M571.6 177.3L571.6 160.3M557.2 191.6L557.2 174.6M542.8 205.8L542.8 188.8M528.4 220.1L528.4 203.1M514.1 234.4L514.1 217.4M499.7 248.7L499.7 231.7M485.3 262.9L485.3 245.9M470.9 277.2L470.9 260.2M456.5 291.5L456.5 274.5M442.1 305.8L442.1 288.8M427.7 320.1L427.7 303.1M413.3 334.3L413.3 317.3M398.9 348.6L398.9 331.6M384.6 362.9L384.6 345.9M370.2 377.2L370.2 360.2M355.8 391.4L355.8 374.4M341.4 405.7L341.4 388.7M327.0 420.0L327.0 403.0M850.0 283.0L850.0 266.0M835.6 297.3L835.6 280.3M821.2 311.6L821.2 294.6M806.8 325.8L806.8 308.8M792.4 340.1L792.4 323.1M778.1 354.4L778.1 337.4M763.7 368.7L763.7 351.7M749.3 382.9L749.3 365.9M734.9 397.2L734.9 380.2M720.5 411.5L720.5 394.5M706.1 425.8L706.1 408.8M691.7 440.1L691.7 423.1M677.3 454.3L677.3 437.3M662.9 468.6L662.9 451.6M648.6 482.9L648.6 465.9M634.2 497.2L634.2 480.2M619.8 511.4L619.8 494.4M605.4 525.7L605.4 508.7M591.0 540.0L591.0 523.0M659.9 196.6L659.9 179.6M631.1 225.2L631.1 208.2M602.4 253.7L602.4 236.7M573.6 282.3L573.6 265.3M544.8 310.8L544.8 293.8M516.0 339.4L516.0 322.4M487.3 367.9L487.3 350.9M458.5 396.5L458.5 379.5M429.7 425.0L429.7 408.0M400.9 453.6L400.9 436.6M719.3 223.6L719.3 206.6M690.5 252.2L690.5 235.2M661.8 280.7L661.8 263.7M633.0 309.3L633.0 292.3M604.2 337.8L604.2 320.8M575.4 366.4L575.4 349.4M546.7 394.9L546.7 377.9M517.9 423.5L517.9 406.5M489.1 452.0L489.1 435.0M460.3 480.6L460.3 463.6M778.7 250.6L778.7 233.6M749.9 279.2L749.9 262.2M721.2 307.7L721.2 290.7M692.4 336.3L692.4 319.3M663.6 364.8L663.6 347.8M634.8 393.4L634.8 376.4M606.1 421.9L606.1 404.9M577.3 450.5L577.3 433.5M548.5 479.0L548.5 462.0M519.7 507.6L519.7 490.6" stroke="#3d4343" stroke-width="2"/><path d="M586.0 163.0L850.0 283.0M327.0 420.0L591.0 540.0M586.0 163.0L327.0 420.0M850.0 283.0L591.0 540.0M586.0 146.0L327.0 403.0M659.9 179.6L400.9 436.6M719.3 206.6L460.3 463.6M778.7 233.6L519.7 490.6M850.0 266.0L591.0 523.0" stroke="#3d4343" stroke-width="2"/><path d="M586.0 146.0L850.0 266.0M571.6 160.3L835.6 280.3M557.2 174.6L821.2 294.6M542.8 188.8L806.8 308.8M528.4 203.1L792.4 323.1M514.1 217.4L778.1 337.4M499.7 231.7L763.7 351.7M485.3 245.9L749.3 365.9M470.9 260.2L734.9 380.2M456.5 274.5L720.5 394.5M442.1 288.8L706.1 408.8M427.7 303.1L691.7 423.1M413.3 317.3L677.3 437.3M398.9 331.6L662.9 451.6M384.6 345.9L648.6 465.9M370.2 360.2L634.2 480.2M355.8 374.4L619.8 494.4M341.4 388.7L605.4 508.7M327.0 403.0L591.0 523.0" stroke="#3d4343" stroke-width="3.3"/><path d="M586.0 146.0L850.0 266.0M571.6 160.3L835.6 280.3M557.2 174.6L821.2 294.6M542.8 188.8L806.8 308.8M528.4 203.1L792.4 323.1M514.1 217.4L778.1 337.4M499.7 231.7L763.7 351.7M485.3 245.9L749.3 365.9M470.9 260.2L734.9 380.2M456.5 274.5L720.5 394.5M442.1 288.8L706.1 408.8M427.7 303.1L691.7 423.1M413.3 317.3L677.3 437.3M398.9 331.6L662.9 451.6M384.6 345.9L648.6 465.9M370.2 360.2L634.2 480.2M355.8 374.4L619.8 494.4M341.4 388.7L605.4 508.7M327.0 403.0L591.0 523.0" stroke="#646c6c" stroke-width="1" transform="translate(0.1 -0.3)"/></g><path d="M605.9 254.9L619.0 260.8L609.6 270.1L596.6 264.1z" fill="#f4f4f4" stroke="#555" stroke-width="0.5"/><path d="M607.1 257.4L601.7 264.4M611.5 259.4L606.0 266.4M615.8 261.4L610.4 268.4" stroke="#666" stroke-width="0.9"/><path d="M476.4 291.6L501.8 303.1L496.1 308.7L470.7 297.2z" fill="#f4f4f4" stroke="#555" stroke-width="0.5"/><path d="M477.8 293.4L474.8 297.8M481.4 295.1L478.4 299.5M485.0 296.7L482.1 301.1M488.6 298.3L485.7 302.8M492.2 300.0L489.3 304.4M495.9 301.6L492.9 306.1M499.5 303.3L496.6 307.7" stroke="#666" stroke-width="0.9"/><path d="M458.2 395.0L471.3 400.9L461.9 410.1L448.9 404.2z" fill="#f4f4f4" stroke="#555" stroke-width="0.5"/><path d="M459.4 397.5L454.0 404.5M463.8 399.5L458.3 406.5M468.1 401.5L462.6 408.4" stroke="#666" stroke-width="0.9"/><path d="M654.1 359.6L669.1 366.4L662.9 372.6L647.9 365.7z" fill="#f4f4f4" stroke="#555" stroke-width="0.5"/><path d="M656.2 361.9L652.9 366.7M661.2 364.1L657.9 368.9M666.2 366.4L662.9 371.2" stroke="#666" stroke-width="0.9"/><path d="M688.6 383.2L715.0 395.2L709.3 400.8L682.9 388.8z" fill="#f4f4f4" stroke="#555" stroke-width="0.5"/><path d="M690.0 385.0L687.1 389.5M693.8 386.7L690.9 391.2M697.6 388.5L694.7 392.9M701.4 390.2L698.4 394.6M705.1 391.9L702.2 396.3M708.9 393.6L706.0 398.0M712.7 395.3L709.7 399.8" stroke="#666" stroke-width="0.9"/><g fill="none" stroke="#1a1a1a"><path d="M347 436L520 514M576 538L590 544" stroke-width="0.7" stroke-dasharray="2.5 2.5"/><path d="M336.5 452.5L585 565M338 455.5L583.5 567.5" stroke-width="0.8"/><path d="M336.5 452.5L350 444M348.5 456L359 443" stroke-width="0.7"/><path d="M338.0 452.7l1.2 -2.6M360.1 462.8l1.2 -2.6M392.1 477.4l1.2 -2.6M426.6 493.1l1.2 -2.6M461.0 508.8l1.2 -2.6M493.0 523.4l1.2 -2.6M525.0 538.0l1.2 -2.6M554.5 551.5l1.2 -2.6M584.0 565.0l1.2 -2.6" stroke-width="0.7"/><path d="M373.2 468.9l3.4 1.5M442.1 500.4l3.4 1.5M474.1 515.0l3.4 1.5M538.0 544.2l3.4 1.5M570.0 558.8l3.4 1.5" stroke-width="1.6"/><path d="M606 551L854 310M608.5 553.5L857 312.5" stroke-width="0.8"/><path d="M850.5 266V297M852.5 281L857 313" stroke-width="0.8"/><path d="M606.0 551.0l-2.4 -2.2M620.6 536.8l-2.4 -2.2M635.2 522.6l-2.4 -2.2M649.8 508.5l-2.4 -2.2M664.4 494.3l-2.4 -2.2M678.9 480.1l-2.4 -2.2M693.5 465.9l-2.4 -2.2M708.1 451.8l-2.4 -2.2M722.7 437.6l-2.4 -2.2M737.3 423.4l-2.4 -2.2M751.9 409.2l-2.4 -2.2M766.5 395.1l-2.4 -2.2M781.1 380.9l-2.4 -2.2M795.6 366.7l-2.4 -2.2M810.2 352.5l-2.4 -2.2M824.8 338.4l-2.4 -2.2M839.4 324.2l-2.4 -2.2M854.0 310.0l-2.4 -2.2" stroke-width="0.7"/><path d="M617.6 538.0l3 -2.9M646.8 509.7l3 -2.9M675.9 481.3l3 -2.9M705.1 453.0l3 -2.9M734.3 424.6l3 -2.9M763.5 396.3l3 -2.9M792.6 367.9l3 -2.9M821.8 339.6l3 -2.9M851.0 311.2l3 -2.9" stroke-width="1.6"/></g><g fill="none" stroke="#222" stroke-width="0.75"><ellipse cx="624.7" cy="549.1" rx="1.3" ry="1.9" transform="rotate(35 624.7 549.1)"/><ellipse cx="639.3" cy="534.9" rx="1.3" ry="1.9" transform="rotate(35 639.3 534.9)"/><ellipse cx="653.9" cy="520.7" rx="1.3" ry="1.9" transform="rotate(35 653.9 520.7)"/><ellipse cx="668.5" cy="506.5" rx="1.3" ry="1.9" transform="rotate(35 668.5 506.5)"/><ellipse cx="683.1" cy="492.4" rx="1.3" ry="1.9" transform="rotate(35 683.1 492.4)"/><ellipse cx="697.7" cy="478.2" rx="1.3" ry="1.9" transform="rotate(35 697.7 478.2)"/><ellipse cx="712.2" cy="464.0" rx="1.3" ry="1.9" transform="rotate(35 712.2 464.0)"/><ellipse cx="726.8" cy="449.8" rx="1.3" ry="1.9" transform="rotate(35 726.8 449.8)"/><ellipse cx="741.4" cy="435.7" rx="1.3" ry="1.9" transform="rotate(35 741.4 435.7)"/><ellipse cx="756.0" cy="421.5" rx="1.3" ry="1.9" transform="rotate(35 756.0 421.5)"/><ellipse cx="770.6" cy="407.3" rx="1.3" ry="1.9" transform="rotate(35 770.6 407.3)"/><ellipse cx="785.2" cy="393.1" rx="1.3" ry="1.9" transform="rotate(35 785.2 393.1)"/><ellipse cx="799.8" cy="379.0" rx="1.3" ry="1.9" transform="rotate(35 799.8 379.0)"/><ellipse cx="814.4" cy="364.8" rx="1.3" ry="1.9" transform="rotate(35 814.4 364.8)"/><ellipse cx="828.9" cy="350.6" rx="1.3" ry="1.9" transform="rotate(35 828.9 350.6)"/><ellipse cx="843.5" cy="336.4" rx="1.3" ry="1.9" transform="rotate(35 843.5 336.4)"/><ellipse cx="858.1" cy="322.3" rx="1.3" ry="1.9" transform="rotate(35 858.1 322.3)"/><ellipse cx="334.0" cy="456.5" rx="1.3" ry="1.9" transform="rotate(35 334.0 456.5)"/><ellipse cx="347.0" cy="469.0" rx="1.3" ry="1.9" transform="rotate(35 347.0 469.0)"/><ellipse cx="392.0" cy="483.0" rx="1.3" ry="1.9" transform="rotate(35 392.0 483.0)"/><ellipse cx="450.0" cy="511.0" rx="1.3" ry="1.9" transform="rotate(35 450.0 511.0)"/><ellipse cx="510.0" cy="540.0" rx="1.3" ry="1.9" transform="rotate(35 510.0 540.0)"/><ellipse cx="568.0" cy="561.0" rx="1.3" ry="1.9" transform="rotate(35 568.0 561.0)"/><ellipse cx="355.0" cy="454.0" rx="1.3" ry="1.9" transform="rotate(35 355.0 454.0)"/><ellipse cx="614.5" cy="131.0" rx="1.3" ry="1.9" transform="rotate(35 614.5 131.0)"/><ellipse cx="614.5" cy="151.0" rx="1.3" ry="1.9" transform="rotate(35 614.5 151.0)"/><ellipse cx="864.5" cy="274.0" rx="1.3" ry="1.9" transform="rotate(35 864.5 274.0)"/><ellipse cx="864.5" cy="294.0" rx="1.3" ry="1.9" transform="rotate(35 864.5 294.0)"/><ellipse cx="864.5" cy="310.0" rx="1.3" ry="1.9" transform="rotate(35 864.5 310.0)"/><ellipse cx="866.5" cy="315.0" rx="1.3" ry="1.9" transform="rotate(35 866.5 315.0)"/></g><path d="M605.5 139V172M608.5 142V174M607 150V170" stroke="#222" stroke-width="0.7" fill="none"/><g fill="none" stroke-width="1.1"><path d="M276.5 558.3L275.9 543" stroke="#3030d0"/><path d="M276.5 558.3L286.5 547" stroke="#40d840"/><path d="M276.5 558.3L292 565" stroke="#e04040"/></g><text x="276.6" y="548.5" fill="#3030d0" font-family="Liberation Sans,sans-serif" font-weight="bold" font-size="5.6">Z</text><text x="288.3" y="551.6" fill="#40d840" font-family="Liberation Sans,sans-serif" font-weight="bold" font-size="5.6">Y</text><text x="293.4" y="571" fill="#e04040" font-family="Liberation Sans,sans-serif" font-weight="bold" font-size="5.6">X</text><rect x="778.6" y="114.6" width="8" height="7.2" rx="1" fill="#fff" stroke="#9a9a9a" stroke-width="0.8"/><rect x="780.8" y="116.6" width="3" height="2.8" fill="#c8c8c8" stroke="#888" stroke-width="0.5"/><path d="M783.5 121.5V137.6L787 134.6L789.3 139L791.5 138L789.4 133.6L797.3 133.4z" fill="#fff" stroke="#555" stroke-width="0.8" stroke-linejoin="round"/></svg>
<div style="left:876px;top:105px;width:66.5px;height:23px;background:#fff;border:1px solid #111"></div>
<div style="left:897px;top:127px;width:45.5px;height:205px;background:#fff;border-left:1px solid #111;border-bottom:1px solid #111;border-right:1px solid #888"></div>
<div style="left:898px;top:126px;width:44px;height:3px;background:#fff"></div>
<span class="t" style="left:882px;top:112.13px;font-size:9.3px;color:#111;font-weight:bold;transform:scaleX(0.9713);">Uz-min [mm]</span>
<svg style="left:897px;top:127px" width="45" height="205" viewBox="897 127 45 205"><rect x="926" y="131.00" width="11" height="14.62" fill="#d80000" stroke="#222" stroke-width="0.7"/><rect x="926" y="145.62" width="11" height="14.62" fill="#f05010" stroke="#222" stroke-width="0.7"/><rect x="926" y="160.24" width="11" height="14.62" fill="#ff9c10" stroke="#222" stroke-width="0.7"/><rect x="926" y="174.86" width="11" height="14.62" fill="#f8c848" stroke="#222" stroke-width="0.7"/><rect x="926" y="189.48" width="11" height="14.62" fill="#fff068" stroke="#222" stroke-width="0.7"/><rect x="926" y="204.10" width="11" height="14.62" fill="#c0e860" stroke="#222" stroke-width="0.7"/><rect x="926" y="218.72" width="11" height="14.62" fill="#68d028" stroke="#222" stroke-width="0.7"/><rect x="926" y="233.34" width="11" height="14.62" fill="#10c848" stroke="#222" stroke-width="0.7"/><rect x="926" y="247.96" width="11" height="14.62" fill="#10d8a0" stroke="#222" stroke-width="0.7"/><rect x="926" y="262.58" width="11" height="14.62" fill="#00f0f0" stroke="#222" stroke-width="0.7"/><rect x="926" y="277.20" width="11" height="14.62" fill="#10a8e8" stroke="#222" stroke-width="0.7"/><rect x="926" y="291.82" width="11" height="14.62" fill="#1058e0" stroke="#222" stroke-width="0.7"/><rect x="926" y="306.44" width="11" height="14.62" fill="#2008c8" stroke="#222" stroke-width="0.7"/><path d="M923 131.00h3" stroke="#222" stroke-width="0.8"/><path d="M923 145.62h3" stroke="#222" stroke-width="0.8"/><path d="M923 160.24h3" stroke="#222" stroke-width="0.8"/><path d="M923 174.86h3" stroke="#222" stroke-width="0.8"/><path d="M923 189.48h3" stroke="#222" stroke-width="0.8"/><path d="M923 204.10h3" stroke="#222" stroke-width="0.8"/><path d="M923 218.72h3" stroke="#222" stroke-width="0.8"/><path d="M923 233.34h3" stroke="#222" stroke-width="0.8"/><path d="M923 247.96h3" stroke="#222" stroke-width="0.8"/><path d="M923 262.58h3" stroke="#222" stroke-width="0.8"/><path d="M923 277.20h3" stroke="#222" stroke-width="0.8"/><path d="M923 291.82h3" stroke="#222" stroke-width="0.8"/><path d="M923 306.44h3" stroke="#222" stroke-width="0.8"/><path d="M923 321.06h3" stroke="#222" stroke-width="0.8"/></svg>
<span class="t" style="right:39px;top:127.13px;font-size:8px;color:#111;transform-origin:100% 50%;">5.4</span>
<span class="t" style="right:39px;top:141.75px;font-size:8px;color:#111;transform-origin:100% 50%;">0.0</span>
<span class="t" style="right:39px;top:156.37px;font-size:8px;color:#111;transform-origin:100% 50%;">-5.0</span>
<span class="t" style="right:39px;top:170.99px;font-size:8px;color:#111;transform-origin:100% 50%;">-10.0</span>
<span class="t" style="right:39px;top:185.61px;font-size:8px;color:#111;transform-origin:100% 50%;">-15.0</span>
<span class="t" style="right:39px;top:200.23px;font-size:8px;color:#111;transform-origin:100% 50%;">-20.0</span>
<span class="t" style="right:39px;top:214.85px;font-size:8px;color:#111;transform-origin:100% 50%;">-25.0</span>
<span class="t" style="right:39px;top:229.47px;font-size:8px;color:#111;transform-origin:100% 50%;">-30.0</span>
<span class="t" style="right:39px;top:244.09px;font-size:8px;color:#111;transform-origin:100% 50%;">-35.0</span>
<span class="t" style="right:39px;top:258.71px;font-size:8px;color:#111;transform-origin:100% 50%;">-40.0</span>
<span class="t" style="right:39px;top:273.33px;font-size:8px;color:#111;transform-origin:100% 50%;">-45.0</span>
<span class="t" style="right:39px;top:287.95px;font-size:8px;color:#111;transform-origin:100% 50%;">-50.0</span>
<span class="t" style="right:39px;top:302.57px;font-size:8px;color:#111;transform-origin:100% 50%;">-55.0</span>
<span class="t" style="right:39px;top:317.19px;font-size:8px;color:#111;transform-origin:100% 50%;">-64.6</span>
<div style="left:942px;top:105px;width:15px;height:403px;background:#f0f0f0"></div>
<div style="left:957px;top:104px;width:3px;height:502px;background:#d6e4f8"></div>
<svg style="left:942px;top:105px" width="17" height="402" viewBox="0 0 17 402"><path d="M4.5 10.5l4-4 4 4M4.5 389.5l4 4 4-4" fill="none" stroke="#404040" stroke-width="1.4"/><rect x="1.5" y="194" width="13" height="14.5" fill="#cdcdcd"/></svg>
<div style="left:942.2px;top:507.8px;width:14.5px;height:81.4px;background:repeating-linear-gradient(rgba(0,0,0,0.4) 0,rgba(0,0,0,0.4) 1px,transparent 1px,transparent 2.3px),linear-gradient(#343434,#6f6f6f 45%,#6f6f6f 55%,#343434);border:1.6px solid #1c1c1c;box-shadow:inset 0 0 0 1px #7d7d7d"></div>
<div style="left:250px;top:589px;width:710px;height:16px;background:#f0f0f0"></div>
<div style="left:250px;top:589px;width:1.5px;height:16px;background:#7a7a7a"></div>
<div style="left:250.6px;top:589.6px;width:14.4px;height:14.2px;background:linear-gradient(#ffd9a0,#ffbd60 60%,#ffd590);"></div>
<svg style="left:251.8px;top:590.7px" width="12" height="12" viewBox="0 0 12 12"><path d="M2 5L4.5 2.5H10V8L7.5 10.5H2z M2 5H7.5V10.5M7.5 5L10 2.5" fill="none" stroke="#151515" stroke-width="1.1"/></svg>
<div style="left:265.3px;top:589.6px;width:14.7px;height:14.2px;background:linear-gradient(#ffd9a0,#ffbd60 60%,#ffd590);"></div>
<svg style="left:266.65px;top:590.7px" width="12" height="12" viewBox="0 0 12 12"><path d="M2 5L4.5 2.5H10V8L7.5 10.5H2z" fill="#e4dc20" stroke="#151515" stroke-width="1.1"/><path d="M2 5H7.5V10.5M7.5 5L10 2.5" fill="none" stroke="#151515" stroke-width="0.9"/></svg>
<div style="left:284px;top:589.6px;width:13.8px;height:14.2px;background:linear-gradient(#e2ecfb,#c9dcf6);box-shadow:inset 0 0 0 0.6px #b4c8e6;"></div>
<svg style="left:284.9px;top:590.7px" width="12" height="12" viewBox="0 0 12 12"><path d="M6 3.5L10 9H2z" fill="#e4dc20" stroke="#4a4a10" stroke-width="0.6"/><path d="M1 10H11" stroke="#1c2cc8" stroke-width="1.6"/><circle cx="6" cy="2.5" r="1.4" fill="#1c2cc8"/></svg>
<div style="left:299px;top:589.6px;width:13.8px;height:14.2px;background:linear-gradient(#e2ecfb,#c9dcf6);box-shadow:inset 0 0 0 0.6px #b4c8e6;"></div>
<svg style="left:299.9px;top:590.7px" width="12" height="12" viewBox="0 0 12 12"><path d="M2.5 1V10M0.5 10H11.5" stroke="#1c2cc8" stroke-width="1.2"/><path d="M4.5 9V7L10.5 4V9z" fill="#e4dc20" stroke="#3a3a10" stroke-width="0.8"/></svg>
<div style="left:314px;top:589.6px;width:14px;height:14.2px;background:linear-gradient(#e2ecfb,#c9dcf6);box-shadow:inset 0 0 0 0.6px #b4c8e6;"></div>
<svg style="left:315px;top:590.7px" width="12" height="12" viewBox="0 0 12 12"><rect x="4.5" y="1.5" width="6.5" height="4" fill="#f4c0c0" stroke="#d81818" stroke-width="1.1"/><path d="M1.5 1V11M1.5 8.5H9" stroke="#1c2cc8" stroke-width="1.2" fill="none"/><circle cx="2" cy="9" r="1.2" fill="#1c2cc8"/></svg>
<div style="left:330.3px;top:589.6px;width:14.3px;height:14.2px;background:linear-gradient(#e2ecfb,#c9dcf6);box-shadow:inset 0 0 0 0.6px #b4c8e6;"></div>
<svg style="left:331.45px;top:590.7px" width="12" height="12" viewBox="0 0 12 12"><path d="M0.8 9H11.2" stroke="#1c2cc8" stroke-width="1.3"/><circle cx="6" cy="9" r="1.5" fill="#1c2cc8"/><text x="0.5" y="6" font-size="5.5" font-weight="bold" fill="#1a1a60" font-family="Liberation Sans,sans-serif" textLength="11">ABC</text></svg>
<div style="left:345.6px;top:589.6px;width:14.4px;height:14.2px;background:linear-gradient(#e2ecfb,#c9dcf6);box-shadow:inset 0 0 0 0.6px #b4c8e6;"></div>
<svg style="left:346.8px;top:590.7px" width="12" height="12" viewBox="0 0 12 12"><path d="M1 9L3.5 6.5H11L8.5 9z" fill="#e4dc20" stroke="#151515" stroke-width="0.8"/><path d="M1 9V10.5H8.5L11 8V6.5" fill="#8a8610" stroke="#151515" stroke-width="0.7"/><text x="0.5" y="5.5" font-size="5.5" font-weight="bold" fill="#1a1a60" font-family="Liberation Sans,sans-serif" textLength="11">ABC</text></svg>
<div style="left:363px;top:589.6px;width:14px;height:14.2px;background:linear-gradient(#e2ecfb,#c9dcf6);box-shadow:inset 0 0 0 0.6px #b4c8e6;"></div>
<svg style="left:364px;top:590.7px" width="12" height="12" viewBox="0 0 12 12"><path d="M6 1V5" stroke="#1c2cc8" stroke-width="1"/><path d="M6 5L1 3" stroke="#d81818" stroke-width="1.1"/><path d="M6 5L11 3" stroke="#18b040" stroke-width="1.1"/><path d="M1 6.5H11M1 8.5H11M1 10.5H11" stroke="#333" stroke-width="0.8" stroke-dasharray="1.2 1"/></svg>
<div style="left:380px;top:589.6px;width:14.4px;height:14.2px;background:linear-gradient(#e2ecfb,#c9dcf6);box-shadow:inset 0 0 0 0.6px #b4c8e6;"></div>
<svg style="left:381.2px;top:590.7px" width="12" height="12" viewBox="0 0 12 12"><path d="M3 1V9.5M1.2 7.5L3 10l1.8-2.5" fill="none" stroke="#14146a" stroke-width="1.4"/><rect x="5" y="2" width="6" height="7.5" fill="#c4c8d0" stroke="#14146a" stroke-width="0.9"/><path d="M8 2V9.5M5 5.5H11" stroke="#14146a" stroke-width="0.6"/></svg>
<div style="left:397px;top:589.6px;width:14px;height:14.2px;background:linear-gradient(#e2ecfb,#c9dcf6);box-shadow:inset 0 0 0 0.6px #b4c8e6;"></div>
<svg style="left:398px;top:590.7px" width="12" height="12" viewBox="0 0 12 12"><rect x="0.8" y="3.5" width="8" height="7.5" fill="#e4dc20" stroke="#1c2cc8" stroke-width="1.1"/><path d="M0.8 6H8.8M0.8 8.5H8.8M3.5 3.5V11M6.2 3.5V11" stroke="#1c2cc8" stroke-width="0.7"/><rect x="7" y="1" width="4.2" height="5.5" rx="1.5" fill="#b8c0d8" stroke="#1c2cc8" stroke-width="0.8"/></svg>
<div style="left:412.3px;top:589.6px;width:14px;height:14.2px;background:linear-gradient(#e2ecfb,#c9dcf6);box-shadow:inset 0 0 0 0.6px #b4c8e6;"></div>
<svg style="left:413.3px;top:590.7px" width="12" height="12" viewBox="0 0 12 12"><rect x="0.8" y="3.5" width="8" height="7.5" fill="#f0d8a0" stroke="#8a98d8" stroke-width="1.1"/><path d="M0.8 6H8.8M0.8 8.5H8.8M3.5 3.5V11M6.2 3.5V11" stroke="#8a98d8" stroke-width="0.7"/><rect x="7" y="1" width="4.2" height="5.5" rx="1.5" fill="#d4daec" stroke="#9aa8d8" stroke-width="0.8"/></svg>
<div style="left:427.6px;top:589.6px;width:14.4px;height:14.2px;background:linear-gradient(#e2ecfb,#c9dcf6);box-shadow:inset 0 0 0 0.6px #b4c8e6;"></div>
<svg style="left:428.8px;top:590.7px" width="12" height="12" viewBox="0 0 12 12"><rect x="0.8" y="0.8" width="10.4" height="10.4" fill="#fff"/><path d="M0.8 6H6V11.2H0.8z" fill="#1c2cc8"/><path d="M4.5 2.2H11M4.5 4.6H11M4.5 7H11M5.5 1V8M8 1V8M10.4 1V8" stroke="#d81818" stroke-width="1.1"/><circle cx="3" cy="8.5" r="1" fill="#fff"/></svg>
<svg style="left:444px;top:589px" width="380" height="16" viewBox="444 589 380 16"><path d="M451.5 593l-3.5 3.8 3.5 3.8M808 593l3.5 3.8-3.5 3.8" fill="none" stroke="#333" stroke-width="1.3"/><rect x="622.5" y="590.5" width="15" height="13" fill="#cdcdcd"/></svg>
<div style="left:817.8px;top:589.2px;width:62px;height:15px;background:repeating-linear-gradient(90deg,rgba(0,0,0,0.4) 0,rgba(0,0,0,0.4) 1px,transparent 1px,transparent 2.3px),linear-gradient(90deg,#343434,#747474 45%,#747474 55%,#343434);border:1.6px solid #1c1c1c;box-shadow:inset 0 0 0 1px #7d7d7d"></div>
<div style="left:881px;top:589.2px;width:61px;height:15px;background:repeating-linear-gradient(90deg,rgba(0,0,0,0.4) 0,rgba(0,0,0,0.4) 1px,transparent 1px,transparent 2.3px),linear-gradient(90deg,#343434,#747474 45%,#747474 55%,#343434);border:1.6px solid #1c1c1c;box-shadow:inset 0 0 0 1px #7d7d7d"></div>
<div style="left:0px;top:609px;width:960px;height:18.5px;background:linear-gradient(#c3dbf9,#cfe2fa 50%,#d8e7fc)"></div>
<span class="t" style="left:-1.5px;top:613.90px;font-size:9.8px;color:#2a5aa8;transform:scaleX(0.8894);">Befehlszeile</span>
<svg style="left:929px;top:612px" width="10" height="13" viewBox="0 0 10 13"><path d="M3 2h4M3.8 2v4.5M6.2 2v4.5M2 6.5h6M5 6.5v4.5" stroke="#3a63a8" stroke-width="1" fill="none"/></svg><svg style="left:945.1px;top:614.2px" width="8.4" height="8.4" viewBox="0 0 8.4 8.4"><path d="M1 1L7.4 7.4M7.4 1L1 7.4" stroke="#3a63a8" stroke-width="1.2" fill="none"/></svg>
<div style="left:0px;top:627px;width:960px;height:59px;background:#c1d9f8"></div>
<div style="left:0px;top:629px;width:333.5px;height:17.8px;background:linear-gradient(#e0ebfc,#d0e1f9 50%,#c2d7f5);border-radius:0 2.5px 2.5px 0;box-shadow:0 1px 0 #a9c3ea"></div>
<div style="left:13px;top:630px;width:1px;height:16px;background:#f4f8fe"></div>
<div style="left:12px;top:630px;width:1px;height:16px;background:#a8c0e4"></div>
<svg style="left:2px;top:632px" width="8" height="12" viewBox="0 0 8 12"><path d="M0.8 0.8V9.2L2.8 7.4L4.3 10.8L5.6 10.2L4.1 6.9H6.8z" fill="#dfe6f0" stroke="#8a94a4" stroke-width="0.9"/></svg>
<svg style="left:17.1px;top:631.8px" width="12" height="12.5" viewBox="0 0 12 12.5"><text x="6" y="5" font-size="5.6" font-weight="bold" fill="#14148a" text-anchor="middle" font-family="Liberation Sans,sans-serif">N</text><rect x="0.7" y="7.2" width="10.6" height="2.3" fill="#e4dc20" stroke="#14148a" stroke-width="0.7"/></svg>
<svg style="left:32.1px;top:631.8px" width="12" height="12.5" viewBox="0 0 12 12.5"><text x="6" y="5" font-size="5.6" font-weight="bold" fill="#14148a" text-anchor="middle" font-family="Liberation Sans,sans-serif">Vy</text><path d="M0.7 10.5L10.5 6.8V8.6L0.7 12z" fill="#e4dc20" stroke="#14148a" stroke-width="0.7"/><path d="M0.5 10.8h3" stroke="#14148a" stroke-width="1.2"/></svg>
<svg style="left:47.1px;top:631.8px" width="12" height="12.5" viewBox="0 0 12 12.5"><text x="6" y="5" font-size="5.6" font-weight="bold" fill="#14148a" text-anchor="middle" font-family="Liberation Sans,sans-serif">Vz</text><path d="M0.7 10.5L10.5 6.8V8.6L0.7 12z" fill="#e4dc20" stroke="#14148a" stroke-width="0.7"/><path d="M0.5 10.8h3" stroke="#14148a" stroke-width="1.2"/></svg>
<svg style="left:62.7px;top:631.8px" width="12" height="12.5" viewBox="0 0 12 12.5"><text x="6" y="5" font-size="5.6" font-weight="bold" fill="#14148a" text-anchor="middle" font-family="Liberation Sans,sans-serif">Mx</text><path d="M1 3.5Q1.5 11 6 11Q10.5 11 11 3.5" fill="none" stroke="#14148a" stroke-width="1.2"/><path d="M2.5 8.5H9.5L8 10.5H4z" fill="#e4dc20"/></svg>
<svg style="left:77.7px;top:631.8px" width="12" height="12.5" viewBox="0 0 12 12.5"><text x="6" y="5" font-size="5.6" font-weight="bold" fill="#14148a" text-anchor="middle" font-family="Liberation Sans,sans-serif">My</text><path d="M1 3.5Q1.5 11 6 11Q10.5 11 11 3.5" fill="none" stroke="#14148a" stroke-width="1.2"/><path d="M2.5 8.5H9.5L8 10.5H4z" fill="#e4dc20"/></svg>
<svg style="left:92.7px;top:631.8px" width="12" height="12.5" viewBox="0 0 12 12.5"><text x="6" y="5" font-size="5.6" font-weight="bold" fill="#14148a" text-anchor="middle" font-family="Liberation Sans,sans-serif">Mz</text><path d="M1 3.5Q1.5 11 6 11Q10.5 11 11 3.5" fill="none" stroke="#14148a" stroke-width="1.2"/><path d="M2.5 8.5H9.5L8 10.5H4z" fill="#e4dc20"/></svg>
<svg style="left:107.5px;top:631.8px" width="12" height="12.5" viewBox="0 0 12 12.5"><text x="6" y="5" font-size="5.6" font-weight="bold" fill="#14148a" text-anchor="middle" font-family="Liberation Sans,sans-serif">ux</text><path d="M0.5 7.5H11.5L9.5 10.5H2.5z" fill="#e4dc20" stroke="#14148a" stroke-width="0.8"/></svg>
<svg style="left:123px;top:631.8px" width="12" height="12.5" viewBox="0 0 12 12.5"><text x="6" y="5" font-size="5.6" font-weight="bold" fill="#14148a" text-anchor="middle" font-family="Liberation Sans,sans-serif">uy</text><path d="M0.5 7.5H11.5L9.5 10.5H2.5z" fill="#e4dc20" stroke="#14148a" stroke-width="0.8"/></svg>
<svg style="left:138px;top:631.8px" width="12" height="12.5" viewBox="0 0 12 12.5"><text x="6" y="5" font-size="5.6" font-weight="bold" fill="#14148a" text-anchor="middle" font-family="Liberation Sans,sans-serif">uz</text><path d="M0.5 7.5H11.5L9.5 10.5H2.5z" fill="#e4dc20" stroke="#14148a" stroke-width="0.8"/></svg>
<svg style="left:153.5px;top:632px" width="12" height="12" viewBox="0 0 12 12"><path d="M1.5 11V2.5H10.5V11" fill="none" stroke="#111" stroke-width="1.3"/><path d="M2.8 11V4H6V8M7.5 4H9.3V10" fill="none" stroke="#18a038" stroke-width="1.4"/></svg>
<svg style="left:167.5px;top:632px" width="12" height="12" viewBox="0 0 12 12"><path d="M5 7l2.5 4h-5z" fill="#404040" stroke="#111" stroke-width="0.6"/><path d="M10.5 1L6 6M6 6V3.5M6 6h2.5" stroke="#e02020" stroke-width="1" fill="none"/></svg>
<svg style="left:184.5px;top:632px" width="12" height="12" viewBox="0 0 12 12"><path d="M7.5 7l2.5 4h-5z" fill="#404040" stroke="#111" stroke-width="0.6"/><path d="M1.5 1L7 6.2M7 6.2V3.8M7 6.2H4.6" stroke="#18c038" stroke-width="1" fill="none"/></svg>
<svg style="left:198.5px;top:632px" width="12" height="12" viewBox="0 0 12 12"><path d="M6 0.8V5M4.6 2.2L6 0.6l1.4 1.6" stroke="#111" stroke-width="0.9" fill="none"/><path d="M6 11.5V7M4.6 10L6 11.6l1.4-1.6" stroke="#2030e0" stroke-width="1" fill="none"/><path d="M6 4L7.8 6.5H4.2z" fill="#404040"/></svg>
<svg style="left:213px;top:632px" width="12" height="12" viewBox="0 0 12 12"><path d="M3.5 5.5l2.5 4h-5z" fill="#404040" stroke="#111" stroke-width="0.6"/><path d="M7 1.5Q11.5 3 10.5 7.5T7 11" stroke="#e02020" stroke-width="1.1" fill="none"/><path d="M6.5 0.5l2 1.2-1.6 1.6" stroke="#e02020" stroke-width="0.9" fill="none"/></svg>
<svg style="left:228px;top:632px" width="12" height="12" viewBox="0 0 12 12"><path d="M6 7l2.5 4h-5z" fill="#404040" stroke="#111" stroke-width="0.6"/><path d="M2 6Q2.5 1.5 6.5 1.5T10.5 5" stroke="#20c040" stroke-width="1.2" fill="none"/><path d="M0.8 4l1.2 2.4 2-1.6" stroke="#20c040" stroke-width="1" fill="none"/></svg>
<svg style="left:243.5px;top:632px" width="12" height="12" viewBox="0 0 12 12"><path d="M6 1l2.5 4h-5z" fill="#404040" stroke="#111" stroke-width="0.6"/><path d="M2 6Q1 10.5 6 10.5T10 6" stroke="#2040e0" stroke-width="1.2" fill="none"/><path d="M8.5 6.5l1.6-1 1 1.8" stroke="#2040e0" stroke-width="1" fill="none"/><ellipse cx="6" cy="7" rx="4" ry="1.5" fill="none" stroke="#2040e0" stroke-width="0.8"/></svg>
<svg style="left:0;top:0" width="1" height="1"><defs><linearGradient id="rbw"><stop offset="0" stop-color="#1020d0"/><stop offset="0.25" stop-color="#20d040"/><stop offset="0.42" stop-color="#f0e020"/><stop offset="0.5" stop-color="#e82010"/><stop offset="0.58" stop-color="#f0e020"/><stop offset="0.75" stop-color="#20d040"/><stop offset="1" stop-color="#1020d0"/></linearGradient></defs></svg>
<svg style="left:258.8px;top:631.8px" width="12" height="12.5" viewBox="0 0 12 12.5"><text x="6" y="5.2" font-size="5.2" font-weight="bold" fill="#181830" text-anchor="middle" font-family="Liberation Sans,sans-serif">σE+</text><rect x="0.6" y="6.9" width="10.8" height="3.8" fill="url(#rbw)" stroke="#10106a" stroke-width="0.8"/></svg>
<svg style="left:273.8px;top:631.8px" width="12" height="12.5" viewBox="0 0 12 12.5"><text x="6" y="5.2" font-size="5.2" font-weight="bold" fill="#181830" text-anchor="middle" font-family="Liberation Sans,sans-serif">σE−</text><rect x="0.6" y="6.9" width="10.8" height="3.8" fill="url(#rbw)" stroke="#10106a" stroke-width="0.8"/></svg>
<svg style="left:289.3px;top:631.8px" width="12" height="12.5" viewBox="0 0 12 12.5"><text x="6" y="5.2" font-size="6.4" font-weight="bold" fill="#181830" text-anchor="middle" font-family="Liberation Sans,sans-serif">mx</text><rect x="0.6" y="6.9" width="10.8" height="3.8" fill="url(#rbw)" stroke="#10106a" stroke-width="0.8"/></svg>
<svg style="left:304.3px;top:631.8px" width="12" height="12.5" viewBox="0 0 12 12.5"><text x="6" y="5.2" font-size="6.4" font-weight="bold" fill="#181830" text-anchor="middle" font-family="Liberation Sans,sans-serif">my</text><rect x="0.6" y="6.9" width="10.8" height="3.8" fill="url(#rbw)" stroke="#10106a" stroke-width="0.8"/></svg>
<svg style="left:319.3px;top:631.8px" width="12" height="12.5" viewBox="0 0 12 12.5"><text x="6" y="5.2" font-size="5.2" font-weight="bold" fill="#181830" text-anchor="middle" font-family="Liberation Sans,sans-serif">DEF</text><rect x="0.6" y="6.9" width="10.8" height="3.8" fill="url(#rbw)" stroke="#10106a" stroke-width="0.8"/></svg>
<div style="left:621.6px;top:628.8px;width:151px;height:18px;background:linear-gradient(#e0ebfc,#d0e1f9 50%,#c2d7f5);border-radius:2.5px;box-shadow:0 1px 0 #a9c3ea"></div>
<div style="left:774.5px;top:628.8px;width:182px;height:18px;background:linear-gradient(#e0ebfc,#d0e1f9 50%,#c2d7f5);border-radius:2.5px;box-shadow:0 1px 0 #a9c3ea"></div>
<svg style="left:624.5px;top:632px" width="12" height="12" viewBox="0 0 12 12"><path d="M1.5 1.5L10.5 10.5" stroke="#70757c" stroke-width="1.1"/><circle cx="2" cy="2" r="1.4" fill="#e02020"/></svg>
<svg style="left:639.5px;top:632px" width="12" height="12" viewBox="0 0 12 12"><path d="M1.5 1.5L10.5 10.5" stroke="#70757c" stroke-width="1.1"/><circle cx="6" cy="6" r="1.4" fill="#e02020"/></svg>
<svg style="left:655px;top:632px" width="12" height="12" viewBox="0 0 12 12"><circle cx="5" cy="6" r="4" fill="none" stroke="#70757c" stroke-width="1.1"/><circle cx="6" cy="7.5" r="1.3" fill="#e02020"/><circle cx="11" cy="7.5" r="0.7" fill="#70757c"/></svg>
<svg style="left:669.5px;top:632px" width="12" height="12" viewBox="0 0 12 12"><path d="M1.5 1.5L10.5 10.5M10.5 1.5L1.5 10.5" stroke="#70757c" stroke-width="1.1"/><circle cx="6" cy="6" r="1.4" fill="#e02020"/></svg>
<div style="left:686px;top:632px;width:1px;height:13px;background:#8fabda"></div>
<svg style="left:691.5px;top:632px" width="12" height="12" viewBox="0 0 12 12"><path d="M1 10.5L6 3L11 10.5" fill="none" stroke="#70757c" stroke-width="1.1"/><circle cx="6" cy="3.2" r="1.4" fill="#e02020"/></svg>
<svg style="left:706.5px;top:632px" width="12" height="12" viewBox="0 0 12 12"><path d="M2 6.5L11 2.5M5 5L4 11" fill="none" stroke="#70757c" stroke-width="1.1"/><circle cx="8" cy="3.8" r="1.4" fill="#e02020"/><circle cx="2" cy="6.5" r="1" fill="#2040e0"/></svg>
<svg style="left:722px;top:632px" width="12" height="12" viewBox="0 0 12 12"><path d="M1 1.5H11L5.5 11z" fill="none" stroke="#70757c" stroke-width="1"/><circle cx="1.5" cy="1.5" r="1.2" fill="#e02020"/><circle cx="5.5" cy="10.5" r="1.2" fill="#e02020"/><path d="M7 6.5L10 4.5" stroke="#2040e0" stroke-width="1.2"/></svg>
<svg style="left:738px;top:632px" width="12" height="12" viewBox="0 0 12 12"><path d="M1.5 9.5L10.5 3.5" stroke="#70757c" stroke-width="1.1"/><circle cx="10.3" cy="3.6" r="1.4" fill="#e02020"/><circle cx="1.7" cy="9.4" r="1.2" fill="#2040e0"/></svg>
<div style="left:753.3px;top:632px;width:1px;height:13px;background:#8fabda"></div>
<svg style="left:759px;top:632px" width="12" height="12" viewBox="0 0 12 12"><path d="M1 1L11 11" stroke="#222" stroke-width="1.2"/><path d="M11 3L3 8" stroke="#2030c0" stroke-width="1.4"/><rect x="6.5" y="0.8" width="5" height="4" fill="#c8c8f0" stroke="#2030c0" stroke-width="1"/><circle cx="1.5" cy="1.5" r="1.1" fill="#e02020"/><circle cx="10.5" cy="10.5" r="1.1" fill="#e02020"/></svg>
<svg style="left:777px;top:632px" width="12" height="12" viewBox="0 0 12 12"><path d="M2 2.5H11M2 5.5H11M2 8.5H11M2 11.3H11" stroke="#111" stroke-width="1.7" stroke-dasharray="1.7 1.4"/><circle cx="2.5" cy="1.2" r="1.1" fill="#e02020"/></svg>
<svg style="left:791.5px;top:632px" width="12" height="12" viewBox="0 0 12 12"><path d="M2 2H10M6 2V10M1 10H11" stroke="#222" stroke-width="1.2" fill="none"/><path d="M6.5 10L10 7" stroke="#2040e0" stroke-width="1.3"/><circle cx="6" cy="2" r="1" fill="#e02020"/></svg>
<svg style="left:807px;top:632px" width="12" height="12" viewBox="0 0 12 12"><path d="M1 1L11 11M11 1L1 11" stroke="#222" stroke-width="1.1"/><circle cx="6" cy="6" r="1.5" fill="#18c040"/></svg>
<div style="left:821.6px;top:630.3px;width:13.2px;height:15.7px;background:linear-gradient(#ffd9a0,#ffbd60 60%,#ffd590);border:1px solid #dfa248;border-radius:1.5px"></div>
<div style="left:836.7px;top:630.3px;width:13.1px;height:15.7px;background:linear-gradient(#ffd9a0,#ffbd60 60%,#ffd590);border:1px solid #dfa248;border-radius:1.5px"></div>
<div style="left:851.7px;top:630.3px;width:13.7px;height:15.7px;background:linear-gradient(#ffd9a0,#ffbd60 60%,#ffd590);border:1px solid #dfa248;border-radius:1.5px"></div>
<div style="left:866.7px;top:630.3px;width:13.7px;height:15.7px;background:linear-gradient(#ffd9a0,#ffbd60 60%,#ffd590);border:1px solid #dfa248;border-radius:1.5px"></div>
<div style="left:926.7px;top:630.3px;width:14.3px;height:15.7px;background:linear-gradient(#ffd9a0,#ffbd60 60%,#ffd590);border:1px solid #dfa248;border-radius:1.5px"></div>
<svg style="left:822.2px;top:632px" width="12" height="12" viewBox="0 0 12 12"><path d="M2.5 1V11" stroke="#c8a070" stroke-width="0.8"/><path d="M3 3L10.5 10.5" stroke="#555" stroke-width="1.2"/><circle cx="4" cy="4" r="1.4" fill="#e02020"/></svg>
<svg style="left:837.2px;top:632px" width="12" height="12" viewBox="0 0 12 12"><path d="M2.5 1V11" stroke="#c8a070" stroke-width="0.8"/><path d="M2.5 2L10.5 10.5" stroke="#555" stroke-width="1.2"/><circle cx="6.5" cy="6.3" r="1.4" fill="#e02020"/></svg>
<svg style="left:852.5px;top:632px" width="12" height="12" viewBox="0 0 12 12"><path d="M2.5 1V11" stroke="#c8a070" stroke-width="0.8"/><path d="M3 3L10.5 10.5M10.5 3L3 10.5" stroke="#555" stroke-width="1.1"/><circle cx="6.7" cy="6.7" r="1.6" fill="#e02020"/><circle cx="2.5" cy="2" r="1" fill="#e02020"/></svg>
<svg style="left:867.5px;top:632px" width="12" height="12" viewBox="0 0 12 12"><path d="M2 2H10.5L6.5 10.5z" fill="none" stroke="#555" stroke-width="1.1"/><circle cx="2.2" cy="2.2" r="1.2" fill="#e02020"/><circle cx="10.3" cy="2.2" r="1.2" fill="#e02020"/><circle cx="7" cy="8.5" r="1.3" fill="#2030c0"/></svg>
<svg style="left:883px;top:632px" width="12" height="12" viewBox="0 0 12 12"><path d="M1.5 10.5Q8 9 10 1.5M7 1V11" fill="none" stroke="#333" stroke-width="1.1"/><circle cx="2" cy="3" r="1.2" fill="#e02020"/><circle cx="9.5" cy="10" r="1.2" fill="#e02020"/></svg>
<svg style="left:898px;top:632px" width="12" height="12" viewBox="0 0 12 12"><path d="M2 10V5Q2 2 6 2H10M2 10H10V4" fill="none" stroke="#333" stroke-width="1.1"/><circle cx="2.2" cy="2.5" r="1.2" fill="#e02020"/><circle cx="9.8" cy="10" r="1.2" fill="#e02020"/></svg>
<svg style="left:913px;top:632px" width="12" height="12" viewBox="0 0 12 12"><path d="M1.5 10.5Q8 9.5 10.5 1.5" fill="none" stroke="#333" stroke-width="1.2"/><circle cx="2" cy="10" r="1.2" fill="#e02020"/><circle cx="10" cy="2" r="1.2" fill="#e02020"/><circle cx="3" cy="3" r="1" fill="#e02020"/></svg>
<svg style="left:928px;top:632px" width="12" height="12" viewBox="0 0 12 12"><rect x="1" y="5" width="10" height="4.5" fill="#e4c020" stroke="#4a3a00" stroke-width="0.9"/><path d="M3 5V7M5 5V7.5M7 5V7M9 5V7.5" stroke="#4a3a00" stroke-width="0.7"/><path d="M1.5 3H10.5" stroke="#806000" stroke-width="1"/></svg>
<svg style="left:943.5px;top:632px" width="12" height="12" viewBox="0 0 12 12"><path d="M2.5 2.5V11" stroke="#555" stroke-width="1"/><circle cx="2.5" cy="2.5" r="1.3" fill="#e02020"/><rect x="5" y="3.5" width="6" height="8" rx="2" fill="#e8e4a0" stroke="#5a6a30" stroke-width="0.9"/><path d="M5 6.5H11M5 9H11" stroke="#5a6a30" stroke-width="0.6"/></svg>
<div style="left:1.5px;top:686.5px;width:957px;height:16px;background:#fff;border-top:2px solid #555;border-left:2px solid #666;border-bottom:1px solid #d8d8d8;border-right:1px solid #d8d8d8"></div>
<span class="t" style="left:5.5px;top:690.33px;font-size:10px;color:#111;transform:scaleX(0.9872);">Befehl &gt;</span>
<div style="left:0px;top:703px;width:960px;height:17px;background:linear-gradient(#dce9fb,#c3d9f7 60%,#bcd4f5)"></div>
<div style="left:84px;top:705px;width:1px;height:15px;background:#9db7dc"></div>
<div style="left:85px;top:705px;width:1px;height:15px;background:#e8f1fd"></div>
<div style="left:174px;top:705px;width:1px;height:15px;background:#9db7dc"></div>
<div style="left:175px;top:705px;width:1px;height:15px;background:#e8f1fd"></div>
<div style="left:201px;top:705px;width:1px;height:15px;background:#9db7dc"></div>
<div style="left:202px;top:705px;width:1px;height:15px;background:#e8f1fd"></div>
<div style="left:249px;top:705px;width:1px;height:15px;background:#9db7dc"></div>
<div style="left:250px;top:705px;width:1px;height:15px;background:#e8f1fd"></div>
<span class="t" style="left:181px;top:708.04px;font-size:9.4px;color:#1c3f7c;">m</span>
<span class="t" style="left:208px;top:708.04px;font-size:9.4px;color:#1c3f7c;transform:scaleX(0.9449);">Ebene XY</span>
<span class="t" style="left:254px;top:708.04px;font-size:9.4px;color:#1c3f7c;transform:scaleX(0.9773);">Bereit</span>
</div></body></html>
